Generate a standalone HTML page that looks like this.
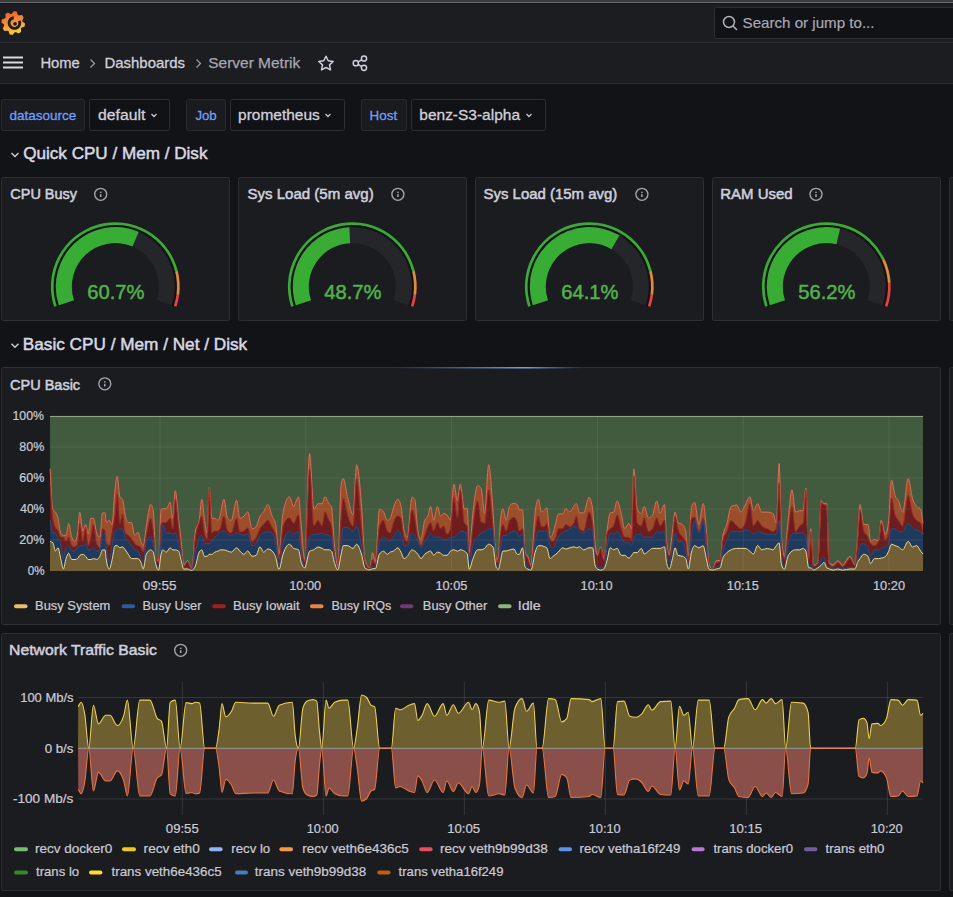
<!DOCTYPE html>
<html><head><meta charset="utf-8"><style>
html,body{margin:0;padding:0;background:#121317;width:953px;height:897px;overflow:hidden}
svg{display:block;font-family:"Liberation Sans", sans-serif}
</style></head><body>
<svg width="953" height="897" viewBox="0 0 953 897">
<rect width="953" height="897" fill="#121317"/>
<rect x="0" y="0" width="953" height="2" fill="#3b3c3f"/>
<rect x="0" y="2" width="953" height="1" fill="#6b6b6d"/>
<rect x="0" y="3" width="953" height="1" fill="#151619"/>
<rect x="0" y="4" width="953" height="38" fill="#1c1d20"/>
<rect x="0" y="42" width="953" height="1" fill="#2c2d31"/>
<rect x="0" y="43" width="953" height="40" fill="#1c1d20"/>
<rect x="0" y="83" width="953" height="1" fill="#2c2d31"/>
<rect x="714.5" y="7.5" width="260" height="31" rx="2" fill="#111216" stroke="#2e2f34"/>
<circle cx="729" cy="22" r="5.5" fill="none" stroke="#b0b0bc" stroke-width="1.5"/>
<line x1="733" y1="26" x2="736.5" y2="29.5" stroke="#b0b0bc" stroke-width="1.6" stroke-linecap="round"/>
<text x="742.60" y="28.0" font-size="15.00" fill="#a8a8b4" font-weight="normal" text-anchor="start"  stroke="#a8a8b4" stroke-width="0.20" id="t1" textLength="131.91" lengthAdjust="spacingAndGlyphs">Search or jump to...</text>
<defs><linearGradient id="lg" x1="0.2" y1="0" x2="0.5" y2="1"><stop offset="0" stop-color="#f05a2a"/><stop offset="0.55" stop-color="#f8962e"/><stop offset="1" stop-color="#fcd22c"/></linearGradient></defs>
<polygon fill="url(#lg)" stroke="url(#lg)" stroke-width="1.2" stroke-linejoin="round" points="14.0,11.8 16.3,12.2 17.3,15.2 18.6,16.0 21.7,15.7 23.0,17.6 21.6,20.4 21.9,21.9 24.4,23.8 24.0,26.1 21.0,27.1 20.2,28.4 20.5,31.5 18.6,32.8 15.8,31.4 14.3,31.7 12.4,34.2 10.1,33.8 9.1,30.8 7.8,30.0 4.7,30.3 3.4,28.4 4.8,25.6 4.5,24.1 2.0,22.2 2.4,19.9 5.4,18.9 6.2,17.6 5.9,14.5 7.8,13.2 10.6,14.6 12.1,14.3"/>
<circle cx="14.4" cy="23.0" r="5.3" fill="none" stroke="#1c1d20" stroke-width="3" stroke-dasharray="26 8" transform="rotate(-25 14.4 23)"/>
<circle cx="15.0" cy="23.8" r="1.9" fill="#1c1d20"/>
<rect x="3" y="56.5" width="20" height="2" fill="#d8d8e0"/>
<rect x="3" y="61.5" width="20" height="2" fill="#d8d8e0"/>
<rect x="3" y="66.5" width="20" height="2" fill="#d8d8e0"/>
<text x="40.40" y="68.0" font-size="15.00" fill="#d0d0dc" font-weight="normal" text-anchor="start"  stroke="#d0d0dc" stroke-width="0.30" id="t2" textLength="39.42" lengthAdjust="spacingAndGlyphs">Home</text>
<polyline points="90.5,59.5 94.5,63.5 90.5,67.5" fill="none" stroke="#9a9aa4" stroke-width="1.3"/>
<text x="104.40" y="68.0" font-size="15.00" fill="#d0d0dc" font-weight="normal" text-anchor="start"  stroke="#d0d0dc" stroke-width="0.30" id="t3" textLength="80.69" lengthAdjust="spacingAndGlyphs">Dashboards</text>
<polyline points="196.5,59.5 200.5,63.5 196.5,67.5" fill="none" stroke="#9a9aa4" stroke-width="1.3"/>
<text x="208.30" y="68.0" font-size="15.20" fill="#a8a8b2" font-weight="normal" text-anchor="start"  stroke="#a8a8b2" stroke-width="0.25" id="t4" textLength="91.90" lengthAdjust="spacingAndGlyphs">Server Metrik</text>
<polygon points="326.0,56.2 328.2,60.8 333.2,61.5 329.5,64.9 330.5,69.9 326.0,67.5 321.5,69.9 322.5,64.9 318.8,61.5 323.8,60.8" fill="none" stroke="#d0d0dc" stroke-width="1.5" stroke-linejoin="round"/>
<g fill="none" stroke="#d0d0dc" stroke-width="1.5"><circle cx="364" cy="58.5" r="2.6"/><circle cx="355.8" cy="63.2" r="2.6"/><circle cx="364" cy="67.8" r="2.6"/><line x1="358.2" y1="61.9" x2="361.7" y2="59.8"/><line x1="358.2" y1="64.5" x2="361.7" y2="66.6"/></g>
<rect x="1.5" y="99.5" width="83.0" height="31" rx="2" fill="#1a1b1f" stroke="#2a2b30"/><rect x="89.5" y="99.5" width="80.0" height="31" rx="2" fill="#111216" stroke="#2e2f34"/><text x="9.40" y="119.5" font-size="13.60" fill="#729ff8" font-weight="normal" text-anchor="start"  stroke="#729ff8" stroke-width="0.30" id="t5" textLength="66.87" lengthAdjust="spacingAndGlyphs">datasource</text><text x="98.10" y="120.2" font-size="15.40" fill="#d0d0dc" font-weight="normal" text-anchor="start"  stroke="#d0d0dc" stroke-width="0.30" id="t6" textLength="47.22" lengthAdjust="spacingAndGlyphs">default</text>
<polyline points="151.5,114 154,116.5 156.5,114" fill="none" stroke="#c8c8d0" stroke-width="1.3"/>
<rect x="186.5" y="99.5" width="39.0" height="31" rx="2" fill="#1a1b1f" stroke="#2a2b30"/><rect x="230.5" y="99.5" width="114.0" height="31" rx="2" fill="#111216" stroke="#2e2f34"/><text x="195.40" y="119.5" font-size="13.60" fill="#729ff8" font-weight="normal" text-anchor="start"  stroke="#729ff8" stroke-width="0.30" id="t7" textLength="21.32" lengthAdjust="spacingAndGlyphs">Job</text><text x="238.10" y="120.2" font-size="15.40" fill="#d0d0dc" font-weight="normal" text-anchor="start"  stroke="#d0d0dc" stroke-width="0.30" id="t8" textLength="81.68" lengthAdjust="spacingAndGlyphs">prometheus</text>
<polyline points="325.5,114 328,116.5 330.5,114" fill="none" stroke="#c8c8d0" stroke-width="1.3"/>
<rect x="361.5" y="99.5" width="45.0" height="31" rx="2" fill="#1a1b1f" stroke="#2a2b30"/><rect x="411.5" y="99.5" width="134.0" height="31" rx="2" fill="#111216" stroke="#2e2f34"/><text x="369.60" y="119.5" font-size="13.60" fill="#729ff8" font-weight="normal" text-anchor="start"  stroke="#729ff8" stroke-width="0.30" id="t9" textLength="27.55" lengthAdjust="spacingAndGlyphs">Host</text><text x="419.30" y="120.2" font-size="15.40" fill="#d0d0dc" font-weight="normal" text-anchor="start"  stroke="#d0d0dc" stroke-width="0.30" id="t10" textLength="100.71" lengthAdjust="spacingAndGlyphs">benz-S3-alpha</text>
<polyline points="526.5,114 529,116.5 531.5,114" fill="none" stroke="#c8c8d0" stroke-width="1.3"/>
<polyline points="11.5,153 15,156.5 18.5,153" transform="translate(0,0.0)" fill="none" stroke="#d0d0dc" stroke-width="1.4"/><text x="23.20" y="158.8" font-size="17.00" fill="#d8d8e0" font-weight="normal" text-anchor="start"  stroke="#d8d8e0" stroke-width="0.50" id="t11" textLength="184.25" lengthAdjust="spacingAndGlyphs">Quick CPU / Mem / Disk</text>
<polyline points="11.5,153 15,156.5 18.5,153" transform="translate(0,190.7)" fill="none" stroke="#d0d0dc" stroke-width="1.4"/><text x="22.80" y="349.5" font-size="17.00" fill="#d8d8e0" font-weight="normal" text-anchor="start"  stroke="#d8d8e0" stroke-width="0.50" id="t12" textLength="224.38" lengthAdjust="spacingAndGlyphs">Basic CPU / Mem / Net / Disk</text>
<rect x="1.5" y="177.5" width="228.0" height="143.0" rx="2" fill="#1b1c20" stroke="#2e2f34" stroke-width="1"/>
<text x="10.30" y="199.2" font-size="14.30" fill="#d0d0dc" font-weight="normal" text-anchor="start"  stroke="#d0d0dc" stroke-width="0.50" id="t13" textLength="66.75" lengthAdjust="spacingAndGlyphs">CPU Busy</text>
<circle cx="100.7" cy="194.3" r="6.0" fill="none" stroke="#a6a6b0" stroke-width="1.35"/><rect x="99.95" y="194.20" width="1.5" height="2.8" fill="#a6a6b0"/><rect x="99.95" y="191.70" width="1.5" height="1.3" fill="#a6a6b0"/>
<path fill="#121316" d="M56.64,306.68 A62.00,62.00 0 1 1 173.96,306.68 L171.12,305.71 A59.00,59.00 0 1 0 59.48,305.71 Z"/><path fill="#24262a" d="M58.81,305.28 A59.50,59.50 0 1 1 171.79,305.28 L156.60,300.26 A43.50,43.50 0 1 0 74.00,300.26 Z"/><path fill="#38ad33" d="M58.81,305.28 A59.50,59.50 0 0 1 138.72,231.90 L132.42,246.61 A43.50,43.50 0 0 0 74.00,300.26 Z"/><path fill="#38ad33" d="M54.16,306.82 A64.40,64.40 0 1 1 177.74,270.81 L175.12,271.47 A61.70,61.70 0 1 0 56.72,305.97 Z"/><path fill="#e68a33" d="M177.74,270.81 A64.40,64.40 0 0 1 179.15,294.97 L176.48,294.62 A61.70,61.70 0 0 0 175.12,271.47 Z"/><path fill="#ee4040" d="M179.15,294.97 A64.40,64.40 0 0 1 176.44,306.82 L173.88,305.97 A61.70,61.70 0 0 0 176.48,294.62 Z"/>
<text x="115.90" y="299.0" font-size="21.00" fill="#52b24c" font-weight="normal" text-anchor="middle"  stroke="#52b24c" stroke-width="0.50" id="t14" textLength="57.15" lengthAdjust="spacingAndGlyphs">60.7%</text>
<rect x="238.5" y="177.5" width="228.0" height="143.0" rx="2" fill="#1b1c20" stroke="#2e2f34" stroke-width="1"/>
<text x="247.50" y="199.2" font-size="14.30" fill="#d0d0dc" font-weight="normal" text-anchor="start"  stroke="#d0d0dc" stroke-width="0.50" id="t15" textLength="126.20" lengthAdjust="spacingAndGlyphs">Sys Load (5m avg)</text>
<circle cx="397.9" cy="194.3" r="6.0" fill="none" stroke="#a6a6b0" stroke-width="1.35"/><rect x="397.15" y="194.20" width="1.5" height="2.8" fill="#a6a6b0"/><rect x="397.15" y="191.70" width="1.5" height="1.3" fill="#a6a6b0"/>
<path fill="#121316" d="M293.64,306.68 A62.00,62.00 0 1 1 410.96,306.68 L408.12,305.71 A59.00,59.00 0 1 0 296.48,305.71 Z"/><path fill="#24262a" d="M295.81,305.28 A59.50,59.50 0 1 1 408.79,305.28 L393.60,300.26 A43.50,43.50 0 1 0 311.00,300.26 Z"/><path fill="#38ad33" d="M295.81,305.28 A59.50,59.50 0 0 1 349.38,227.17 L350.16,243.15 A43.50,43.50 0 0 0 311.00,300.26 Z"/><path fill="#38ad33" d="M291.16,306.82 A64.40,64.40 0 1 1 414.74,270.81 L412.12,271.47 A61.70,61.70 0 1 0 293.72,305.97 Z"/><path fill="#e68a33" d="M414.74,270.81 A64.40,64.40 0 0 1 416.15,294.97 L413.48,294.62 A61.70,61.70 0 0 0 412.12,271.47 Z"/><path fill="#ee4040" d="M416.15,294.97 A64.40,64.40 0 0 1 413.44,306.82 L410.88,305.97 A61.70,61.70 0 0 0 413.48,294.62 Z"/>
<text x="352.90" y="299.0" font-size="21.00" fill="#52b24c" font-weight="normal" text-anchor="middle"  stroke="#52b24c" stroke-width="0.50" id="t16" textLength="57.15" lengthAdjust="spacingAndGlyphs">48.7%</text>
<rect x="475.5" y="177.5" width="228.0" height="143.0" rx="2" fill="#1b1c20" stroke="#2e2f34" stroke-width="1"/>
<text x="483.50" y="199.2" font-size="14.30" fill="#d0d0dc" font-weight="normal" text-anchor="start"  stroke="#d0d0dc" stroke-width="0.50" id="t17" textLength="133.75" lengthAdjust="spacingAndGlyphs">Sys Load (15m avg)</text>
<circle cx="641.9" cy="194.3" r="6.0" fill="none" stroke="#a6a6b0" stroke-width="1.35"/><rect x="641.15" y="194.20" width="1.5" height="2.8" fill="#a6a6b0"/><rect x="641.15" y="191.70" width="1.5" height="1.3" fill="#a6a6b0"/>
<path fill="#121316" d="M530.64,306.68 A62.00,62.00 0 1 1 647.96,306.68 L645.12,305.71 A59.00,59.00 0 1 0 533.48,305.71 Z"/><path fill="#24262a" d="M532.81,305.28 A59.50,59.50 0 1 1 645.79,305.28 L630.60,300.26 A43.50,43.50 0 1 0 548.00,300.26 Z"/><path fill="#38ad33" d="M532.81,305.28 A59.50,59.50 0 0 1 619.53,235.35 L611.40,249.13 A43.50,43.50 0 0 0 548.00,300.26 Z"/><path fill="#38ad33" d="M528.16,306.82 A64.40,64.40 0 1 1 651.74,270.81 L649.12,271.47 A61.70,61.70 0 1 0 530.72,305.97 Z"/><path fill="#e68a33" d="M651.74,270.81 A64.40,64.40 0 0 1 653.15,294.97 L650.48,294.62 A61.70,61.70 0 0 0 649.12,271.47 Z"/><path fill="#ee4040" d="M653.15,294.97 A64.40,64.40 0 0 1 650.44,306.82 L647.88,305.97 A61.70,61.70 0 0 0 650.48,294.62 Z"/>
<text x="589.90" y="299.0" font-size="21.00" fill="#52b24c" font-weight="normal" text-anchor="middle"  stroke="#52b24c" stroke-width="0.50" id="t18" textLength="57.15" lengthAdjust="spacingAndGlyphs">64.1%</text>
<rect x="712.5" y="177.5" width="228.0" height="143.0" rx="2" fill="#1b1c20" stroke="#2e2f34" stroke-width="1"/>
<text x="720.30" y="199.2" font-size="14.30" fill="#d0d0dc" font-weight="normal" text-anchor="start"  stroke="#d0d0dc" stroke-width="0.50" id="t19" textLength="72.32" lengthAdjust="spacingAndGlyphs">RAM Used</text>
<circle cx="816.0" cy="194.3" r="6.0" fill="none" stroke="#a6a6b0" stroke-width="1.35"/><rect x="815.25" y="194.20" width="1.5" height="2.8" fill="#a6a6b0"/><rect x="815.25" y="191.70" width="1.5" height="1.3" fill="#a6a6b0"/>
<path fill="#121316" d="M767.64,306.68 A62.00,62.00 0 1 1 884.96,306.68 L882.12,305.71 A59.00,59.00 0 1 0 770.48,305.71 Z"/><path fill="#24262a" d="M769.81,305.28 A59.50,59.50 0 1 1 882.79,305.28 L867.60,300.26 A43.50,43.50 0 1 0 785.00,300.26 Z"/><path fill="#38ad33" d="M769.81,305.28 A59.50,59.50 0 0 1 840.12,228.73 L836.40,244.29 A43.50,43.50 0 0 0 785.00,300.26 Z"/><path fill="#38ad33" d="M765.16,306.82 A64.40,64.40 0 0 1 884.66,259.36 L882.21,260.50 A61.70,61.70 0 0 0 767.72,305.97 Z"/><path fill="#e68a33" d="M884.66,259.36 A64.40,64.40 0 0 1 890.59,282.83 L887.89,282.98 A61.70,61.70 0 0 0 882.21,260.50 Z"/><path fill="#ee4040" d="M890.59,282.83 A64.40,64.40 0 0 1 887.44,306.82 L884.88,305.97 A61.70,61.70 0 0 0 887.89,282.98 Z"/>
<text x="826.90" y="299.0" font-size="21.00" fill="#52b24c" font-weight="normal" text-anchor="middle"  stroke="#52b24c" stroke-width="0.50" id="t20" textLength="57.15" lengthAdjust="spacingAndGlyphs">56.2%</text>
<rect x="949.5" y="177.5" width="228.0" height="143.0" rx="2" fill="#1b1c20" stroke="#2e2f34" stroke-width="1"/>
<rect x="1.5" y="367.5" width="939.0" height="257.0" rx="2" fill="#1b1c20" stroke="#2e2f34" stroke-width="1"/>
<rect x="949.5" y="367.5" width="228.0" height="257.0" rx="2" fill="#1b1c20" stroke="#2e2f34" stroke-width="1"/>
<defs><linearGradient id="ld" x1="0" x2="1"><stop offset="0" stop-color="#5a8bd8" stop-opacity="0"/><stop offset="0.7" stop-color="#7ab0ff" stop-opacity="0.9"/><stop offset="1" stop-color="#5a8bd8" stop-opacity="0"/></linearGradient></defs>
<rect x="395" y="367" width="187" height="1.5" fill="url(#ld)"/>
<text x="10.00" y="389.8" font-size="14.30" fill="#d0d0dc" font-weight="normal" text-anchor="start"  stroke="#d0d0dc" stroke-width="0.50" id="t21" textLength="70.12" lengthAdjust="spacingAndGlyphs">CPU Basic</text>
<circle cx="104.8" cy="383.8" r="6.0" fill="none" stroke="#a6a6b0" stroke-width="1.35"/><rect x="104.05" y="383.70" width="1.5" height="2.8" fill="#a6a6b0"/><rect x="104.05" y="381.20" width="1.5" height="1.3" fill="#a6a6b0"/>
<path fill="#425a3e" d="M50,416 L923,416 L923.0,523.3 C922.2,518.6 921.5,510.4 920.7,509.3 C919.3,507.4 918.0,508.3 916.6,506.5 C915.2,504.7 913.8,502.8 912.4,498.1 C911.0,493.5 909.6,478.6 908.2,478.6 C906.3,478.6 904.5,512.1 902.6,512.1 C901.2,512.1 899.9,503.8 898.5,500.9 C897.3,498.5 896.2,498.8 895.0,495.4 C893.8,491.9 892.7,480.0 891.5,480.0 C890.6,480.0 889.6,513.0 888.7,520.5 C887.5,529.8 886.4,534.4 885.2,534.4 C883.9,534.4 882.5,520.3 881.2,520.3 C880.3,520.3 879.5,540.8 878.6,540.8 C877.2,540.8 875.7,539.4 874.3,539.4 C873.1,539.4 871.8,541.5 870.6,541.5 C869.7,541.5 868.9,524.5 868.0,524.5 C866.6,524.5 865.1,524.5 863.7,524.5 C862.5,524.5 861.2,504.5 860.0,504.5 C859.3,504.5 858.6,524.5 857.9,533.0 C856.9,545.7 855.8,564.8 854.8,564.8 C853.2,564.8 851.6,556.3 850.0,556.3 C847.5,556.3 845.1,564.8 842.6,564.8 C841.0,564.8 839.4,560.6 837.8,560.6 C836.2,560.6 834.7,564.8 833.1,564.8 C831.7,564.8 830.3,564.0 828.9,562.3 C828.2,561.5 827.5,503.7 826.8,503.7 C825.9,503.7 825.0,503.7 824.1,503.7 C823.2,503.7 822.2,500.9 821.3,500.9 C820.1,500.9 819.0,560.8 817.8,562.3 C816.4,564.2 815.0,565.1 813.6,565.1 C812.7,565.1 811.7,528.8 810.8,528.8 C810.1,528.8 809.4,556.7 808.7,556.7 C807.8,556.7 806.8,488.4 805.9,488.4 C805.0,488.4 804.1,510.7 803.2,510.7 C802.0,510.7 800.9,510.7 799.7,510.7 C798.3,510.7 796.9,512.1 795.5,512.1 C794.3,512.1 793.2,489.8 792.0,489.8 C790.6,489.8 789.2,510.6 787.8,523.3 C786.7,533.5 785.5,556.7 784.4,556.7 C783.5,556.7 782.5,550.2 781.6,537.2 C780.8,525.6 779.9,463.3 779.1,463.3 C778.2,463.3 777.3,523.3 776.4,523.3 C775.2,523.3 774.1,514.1 772.9,513.5 C771.1,512.6 769.2,512.1 767.4,512.1 C765.5,512.1 763.7,512.1 761.8,512.1 C760.4,512.1 759.0,503.7 757.6,503.7 C756.2,503.7 754.8,510.7 753.4,510.7 C752.2,510.7 751.1,496.8 749.9,496.8 C748.3,496.8 746.7,502.4 745.1,505.1 C743.7,507.5 742.3,512.1 740.9,512.1 C739.5,512.1 738.1,505.1 736.7,505.1 C734.8,505.1 733.0,505.6 731.1,506.5 C729.7,507.2 728.4,518.2 727.0,523.3 C725.6,528.5 724.1,527.9 722.7,537.2 C721.8,542.8 721.0,560.6 720.1,560.6 C718.9,560.6 717.6,560.6 716.4,560.6 C715.2,560.6 713.9,569.0 712.7,569.0 C711.5,569.0 710.2,567.6 709.0,564.8 C708.1,562.8 707.2,538.7 706.3,528.8 C705.3,517.5 704.2,503.4 703.2,503.4 C701.8,503.4 700.3,524.5 698.9,524.5 C697.5,524.5 696.1,502.3 694.7,502.3 C693.6,502.3 692.6,504.1 691.5,507.6 C690.4,511.1 689.4,556.3 688.3,556.3 C687.4,556.3 686.6,534.5 685.7,531.0 C684.6,526.7 683.6,525.4 682.5,524.5 C680.9,523.2 679.4,523.8 677.8,522.5 C676.9,521.7 676.0,511.9 675.1,511.9 C674.2,511.9 673.4,524.7 672.5,531.0 C671.4,538.8 670.4,554.3 669.3,554.3 C668.4,554.3 667.5,550.0 666.6,541.5 C665.9,535.0 665.2,504.5 664.5,504.5 C663.1,504.5 661.6,513.5 660.2,513.5 C659.0,513.5 657.9,500.9 656.7,500.9 C655.3,500.9 654.0,513.1 652.6,514.9 C651.2,516.8 649.8,517.7 648.4,517.7 C647.0,517.7 645.6,506.5 644.2,506.5 C643.3,506.5 642.3,513.5 641.4,513.5 C640.0,513.5 638.6,512.1 637.2,509.3 C636.1,507.1 634.9,468.9 633.8,468.9 C633.1,468.9 632.4,528.8 631.7,528.8 C630.8,528.8 629.8,523.3 628.9,523.3 C627.5,523.3 626.1,528.8 624.7,528.8 C623.5,528.8 622.4,517.9 621.2,513.5 C619.8,508.3 618.5,500.9 617.1,500.9 C615.9,500.9 614.8,511.6 613.6,512.1 C612.5,512.6 611.3,512.4 610.2,512.9 C609.1,513.4 608.1,523.2 607.0,531.0 C606.0,538.6 604.9,558.6 603.9,558.6 C602.8,558.6 601.8,546.8 600.7,546.8 C599.6,546.8 598.6,554.3 597.5,554.3 C596.6,554.3 595.8,550.0 594.9,541.5 C594.2,534.4 593.4,514.8 592.7,509.8 C591.5,501.3 590.2,497.1 589.0,497.1 C587.2,497.1 585.5,512.9 583.7,512.9 C582.3,512.9 580.9,512.9 579.5,512.9 C578.4,512.9 577.4,503.4 576.3,503.4 C575.6,503.4 574.9,504.8 574.2,505.6 C572.8,507.3 571.4,511.9 570.0,511.9 C568.6,511.9 567.2,508.7 565.8,508.7 C564.7,508.7 563.7,514.0 562.6,514.0 C561.2,514.0 559.7,514.0 558.3,514.0 C557.5,514.0 556.6,519.4 555.8,522.5 C554.9,525.8 554.0,530.6 553.1,533.0 C552.1,535.8 551.0,537.2 550.0,537.2 C548.9,537.2 547.9,507.6 546.8,507.6 C546.1,507.6 545.4,509.2 544.7,509.8 C543.6,510.7 542.6,511.9 541.5,511.9 C540.4,511.9 539.4,499.2 538.3,499.2 C537.3,499.2 536.2,504.2 535.2,511.9 C533.8,522.7 532.3,564.8 530.9,564.8 C529.8,564.8 528.8,558.5 527.7,556.3 C526.8,554.5 526.0,554.9 525.1,552.1 C524.2,549.3 523.4,509.8 522.5,509.8 C521.4,509.8 520.4,509.8 519.3,509.8 C518.6,509.8 517.9,505.0 517.2,504.5 C516.1,503.8 515.1,503.4 514.0,503.4 C512.6,503.4 511.2,504.1 509.8,505.6 C508.6,506.9 507.3,520.3 506.1,520.3 C505.0,520.3 504.0,508.7 502.9,508.7 C502.0,508.7 501.1,513.3 500.2,522.5 C499.6,528.3 499.1,555.2 498.5,556.7 C497.8,558.6 497.1,559.5 496.4,559.5 C495.2,559.5 494.1,524.1 492.9,509.3 C491.5,491.6 490.1,464.7 488.7,464.7 C487.3,464.7 486.0,513.5 484.6,513.5 C483.4,513.5 482.3,490.2 481.1,488.4 C479.9,486.5 478.8,485.6 477.6,485.6 C476.0,485.6 474.3,500.6 472.7,514.9 C471.5,525.1 470.4,552.6 469.2,552.6 C468.5,552.6 467.9,507.9 467.2,507.9 C466.3,507.9 465.3,509.3 464.4,509.3 C463.0,509.3 461.6,484.2 460.2,484.2 C459.3,484.2 458.3,500.9 457.4,500.9 C456.2,500.9 455.1,484.2 453.9,484.2 C452.7,484.2 451.6,520.5 450.4,520.5 C449.3,520.5 448.1,515.8 447.0,514.9 C445.8,514.0 444.7,513.5 443.5,513.5 C442.5,513.5 441.6,516.1 440.6,516.1 C439.5,516.1 438.5,506.5 437.4,506.5 C436.2,506.5 434.9,520.3 433.7,520.3 C432.7,520.3 431.6,506.5 430.6,506.5 C429.7,506.5 428.8,513.9 427.9,516.1 C426.8,518.8 425.8,517.5 424.7,520.3 C423.5,523.5 422.2,539.4 421.0,539.4 C420.0,539.4 418.9,536.6 417.9,531.0 C416.8,525.2 415.8,500.9 414.7,499.2 C413.8,497.8 412.9,497.1 412.0,497.1 C410.4,497.1 408.9,537.2 407.3,537.2 C406.2,537.2 405.2,535.1 404.1,531.0 C403.0,526.9 402.0,510.0 400.9,505.6 C399.9,501.4 398.8,499.2 397.8,499.2 C396.4,499.2 394.9,503.7 393.5,507.6 C392.4,510.5 391.4,516.9 390.3,518.3 C389.3,519.6 388.2,520.3 387.2,520.3 C386.0,520.3 384.9,513.7 383.7,512.1 C382.3,510.2 380.9,509.3 379.5,509.3 C378.1,509.3 376.8,562.3 375.4,562.3 C374.5,562.3 373.5,552.6 372.6,552.6 C371.7,552.6 370.7,567.9 369.8,567.9 C368.2,567.9 366.5,565.1 364.9,559.5 C363.7,555.5 362.6,518.5 361.4,503.7 C359.8,483.5 358.2,464.7 356.6,464.7 C355.4,464.7 354.3,514.9 353.1,514.9 C351.2,514.9 349.4,504.0 347.5,496.8 C346.1,491.4 344.7,478.6 343.3,478.6 C342.6,478.6 341.9,480.5 341.2,484.2 C340.0,490.4 338.9,566.5 337.7,566.5 C336.6,566.5 335.4,554.4 334.3,542.8 C333.4,533.2 332.4,508.7 331.5,506.5 C330.7,504.7 329.9,504.8 329.1,503.7 C327.7,501.8 326.3,496.8 324.9,496.8 C324.0,496.8 323.0,503.7 322.1,503.7 C320.7,503.7 319.4,503.7 318.0,503.7 C316.6,503.7 315.2,509.3 313.8,509.3 C312.4,509.3 311.0,453.5 309.6,453.5 C308.0,453.5 306.3,559.5 304.7,559.5 C303.5,559.5 302.4,536.4 301.2,524.5 C300.3,515.4 299.4,496.8 298.5,496.8 C296.9,496.8 295.2,506.5 293.6,506.5 C292.2,506.5 290.8,496.8 289.4,496.8 C287.3,496.8 285.2,501.9 283.1,512.1 C281.7,518.8 280.4,554.0 279.0,554.0 C277.8,554.0 276.7,528.2 275.5,523.3 C274.4,518.5 273.2,518.9 272.1,516.1 C270.7,512.8 269.3,504.4 267.9,504.4 C266.5,504.4 265.0,509.9 263.6,511.9 C262.4,513.7 261.1,513.7 259.9,516.1 C258.7,518.6 257.4,525.4 256.2,526.7 C254.8,528.1 253.4,528.8 252.0,528.8 C250.6,528.8 249.1,511.9 247.7,511.9 C246.5,511.9 245.2,515.1 244.0,516.1 C242.6,517.3 241.2,518.3 239.8,518.3 C238.7,518.3 237.7,500.2 236.6,500.2 C234.8,500.2 233.1,520.3 231.3,520.3 C230.1,520.3 228.8,519.6 227.6,518.3 C226.4,517.0 225.1,499.2 223.9,499.2 C222.7,499.2 221.4,511.3 220.2,515.2 C219.5,517.3 218.9,520.3 218.2,520.3 C217.1,520.3 216.1,518.3 215.0,518.3 C214.0,518.3 212.9,518.3 211.9,518.3 C211.0,518.3 210.1,487.5 209.2,487.5 C208.5,487.5 207.8,533.0 207.1,533.0 C206.2,533.0 205.3,524.1 204.4,518.3 C203.5,512.7 202.7,499.2 201.8,499.2 C200.9,499.2 200.1,515.4 199.2,520.3 C197.9,527.4 196.7,523.9 195.4,531.0 C194.2,538.0 192.9,569.0 191.7,569.0 C190.3,569.0 188.9,560.6 187.5,560.6 C186.3,560.6 185.0,564.8 183.8,564.8 C182.9,564.8 182.1,549.2 181.2,541.5 C180.3,533.6 179.4,526.1 178.5,518.3 C177.4,509.1 176.4,490.7 175.3,490.7 C174.4,490.7 173.6,518.3 172.7,518.3 C171.8,518.3 171.0,502.3 170.1,502.3 C168.8,502.3 167.6,508.7 166.3,508.7 C165.1,508.7 163.8,508.7 162.6,508.7 C162.1,508.7 161.6,509.1 161.1,509.8 C160.2,511.0 159.4,560.6 158.5,560.6 C157.6,560.6 156.8,559.9 155.9,558.6 C155.0,557.2 154.1,513.5 153.2,509.8 C152.3,506.2 151.5,504.4 150.6,504.4 C149.2,504.4 147.7,518.4 146.3,526.7 C145.3,532.6 144.2,545.7 143.2,545.7 C142.5,545.7 141.7,543.3 141.0,541.5 C140.0,539.1 138.9,532.2 137.9,532.2 C136.8,532.2 135.8,535.4 134.7,535.4 C133.6,535.4 132.6,522.5 131.5,522.5 C130.4,522.5 129.4,522.5 128.3,522.5 C127.3,522.5 126.2,519.6 125.2,515.2 C124.3,511.4 123.4,500.7 122.5,499.2 C121.6,497.8 120.8,498.5 119.9,497.1 C119.0,495.6 118.1,476.4 117.2,476.4 C116.5,476.4 115.8,483.0 115.1,488.5 C114.0,497.0 113.0,524.5 111.9,524.5 C111.0,524.5 110.2,520.3 109.3,520.3 C108.2,520.3 107.2,522.5 106.1,522.5 C105.8,522.5 105.4,512.9 105.1,512.9 C104.2,512.9 103.4,512.9 102.5,512.9 C101.6,512.9 100.8,537.2 99.9,537.2 C98.8,537.2 97.8,535.8 96.7,533.0 C95.6,530.2 94.6,518.3 93.5,518.3 C92.6,518.3 91.8,518.3 90.9,518.3 C90.0,518.3 89.1,534.1 88.2,534.1 C87.3,534.1 86.5,524.5 85.6,524.5 C84.7,524.5 83.8,531.0 82.9,531.0 C81.8,531.0 80.8,512.1 79.7,512.1 C79.0,512.1 78.3,528.4 77.6,533.0 C76.7,538.7 75.9,541.5 75.0,541.5 C73.9,541.5 72.9,540.1 71.8,537.2 C70.7,534.3 69.7,523.6 68.6,523.6 C67.7,523.6 66.9,535.4 66.0,535.4 C65.1,535.4 64.2,535.4 63.3,535.4 C62.4,535.4 61.6,534.6 60.7,533.0 C59.8,531.4 58.9,521.8 58.0,518.3 C57.1,514.9 56.3,513.5 55.4,512.1 C54.5,510.7 53.7,511.3 52.8,509.8 C51.9,508.2 51.0,482.4 50.1,468.7 Z"/><path fill="#9a4f2a" d="M50.1,468.7 C51.0,482.4 51.9,508.2 52.8,509.8 C53.7,511.3 54.5,510.7 55.4,512.1 C56.3,513.5 57.1,514.9 58.0,518.3 C58.9,521.8 59.8,531.4 60.7,533.0 C61.6,534.6 62.4,535.4 63.3,535.4 C64.2,535.4 65.1,535.4 66.0,535.4 C66.9,535.4 67.7,523.6 68.6,523.6 C69.7,523.6 70.7,534.3 71.8,537.2 C72.9,540.1 73.9,541.5 75.0,541.5 C75.9,541.5 76.7,538.7 77.6,533.0 C78.3,528.4 79.0,512.1 79.7,512.1 C80.8,512.1 81.8,531.0 82.9,531.0 C83.8,531.0 84.7,524.5 85.6,524.5 C86.5,524.5 87.3,534.1 88.2,534.1 C89.1,534.1 90.0,518.3 90.9,518.3 C91.8,518.3 92.6,518.3 93.5,518.3 C94.6,518.3 95.6,530.2 96.7,533.0 C97.8,535.8 98.8,537.2 99.9,537.2 C100.8,537.2 101.6,512.9 102.5,512.9 C103.4,512.9 104.2,512.9 105.1,512.9 C105.4,512.9 105.8,522.5 106.1,522.5 C107.2,522.5 108.2,520.3 109.3,520.3 C110.2,520.3 111.0,524.5 111.9,524.5 C113.0,524.5 114.0,497.0 115.1,488.5 C115.8,483.0 116.5,476.4 117.2,476.4 C118.1,476.4 119.0,495.6 119.9,497.1 C120.8,498.5 121.6,497.8 122.5,499.2 C123.4,500.7 124.3,511.4 125.2,515.2 C126.2,519.6 127.3,522.5 128.3,522.5 C129.4,522.5 130.4,522.5 131.5,522.5 C132.6,522.5 133.6,535.4 134.7,535.4 C135.8,535.4 136.8,532.2 137.9,532.2 C138.9,532.2 140.0,539.1 141.0,541.5 C141.7,543.3 142.5,545.7 143.2,545.7 C144.2,545.7 145.3,532.6 146.3,526.7 C147.7,518.4 149.2,504.4 150.6,504.4 C151.5,504.4 152.3,506.2 153.2,509.8 C154.1,513.5 155.0,557.2 155.9,558.6 C156.8,559.9 157.6,560.6 158.5,560.6 C159.4,560.6 160.2,511.0 161.1,509.8 C161.6,509.1 162.1,508.7 162.6,508.7 C163.8,508.7 165.1,508.7 166.3,508.7 C167.6,508.7 168.8,502.3 170.1,502.3 C171.0,502.3 171.8,518.3 172.7,518.3 C173.6,518.3 174.4,490.7 175.3,490.7 C176.4,490.7 177.4,509.1 178.5,518.3 C179.4,526.1 180.3,533.6 181.2,541.5 C182.1,549.2 182.9,564.8 183.8,564.8 C185.0,564.8 186.3,560.6 187.5,560.6 C188.9,560.6 190.3,569.0 191.7,569.0 C192.9,569.0 194.2,538.0 195.4,531.0 C196.7,523.9 197.9,527.4 199.2,520.3 C200.1,515.4 200.9,499.2 201.8,499.2 C202.7,499.2 203.5,512.7 204.4,518.3 C205.3,524.1 206.2,533.0 207.1,533.0 C207.8,533.0 208.5,487.5 209.2,487.5 C210.1,487.5 211.0,518.3 211.9,518.3 C212.9,518.3 214.0,518.3 215.0,518.3 C216.1,518.3 217.1,520.3 218.2,520.3 C218.9,520.3 219.5,517.3 220.2,515.2 C221.4,511.3 222.7,499.2 223.9,499.2 C225.1,499.2 226.4,517.0 227.6,518.3 C228.8,519.6 230.1,520.3 231.3,520.3 C233.1,520.3 234.8,500.2 236.6,500.2 C237.7,500.2 238.7,518.3 239.8,518.3 C241.2,518.3 242.6,517.3 244.0,516.1 C245.2,515.1 246.5,511.9 247.7,511.9 C249.1,511.9 250.6,528.8 252.0,528.8 C253.4,528.8 254.8,528.1 256.2,526.7 C257.4,525.4 258.7,518.6 259.9,516.1 C261.1,513.7 262.4,513.7 263.6,511.9 C265.0,509.9 266.5,504.4 267.9,504.4 C269.3,504.4 270.7,512.8 272.1,516.1 C273.2,518.9 274.4,518.5 275.5,523.3 C276.7,528.2 277.8,554.0 279.0,554.0 C280.4,554.0 281.7,518.8 283.1,512.1 C285.2,501.9 287.3,496.8 289.4,496.8 C290.8,496.8 292.2,506.5 293.6,506.5 C295.2,506.5 296.9,496.8 298.5,496.8 C299.4,496.8 300.3,515.4 301.2,524.5 C302.4,536.4 303.5,559.5 304.7,559.5 C306.3,559.5 308.0,453.5 309.6,453.5 C311.0,453.5 312.4,509.3 313.8,509.3 C315.2,509.3 316.6,503.7 318.0,503.7 C319.4,503.7 320.7,503.7 322.1,503.7 C323.0,503.7 324.0,496.8 324.9,496.8 C326.3,496.8 327.7,501.8 329.1,503.7 C329.9,504.8 330.7,504.7 331.5,506.5 C332.4,508.7 333.4,533.2 334.3,542.8 C335.4,554.4 336.6,566.5 337.7,566.5 C338.9,566.5 340.0,490.4 341.2,484.2 C341.9,480.5 342.6,478.6 343.3,478.6 C344.7,478.6 346.1,491.4 347.5,496.8 C349.4,504.0 351.2,514.9 353.1,514.9 C354.3,514.9 355.4,464.7 356.6,464.7 C358.2,464.7 359.8,483.5 361.4,503.7 C362.6,518.5 363.7,555.5 364.9,559.5 C366.5,565.1 368.2,567.9 369.8,567.9 C370.7,567.9 371.7,552.6 372.6,552.6 C373.5,552.6 374.5,562.3 375.4,562.3 C376.8,562.3 378.1,509.3 379.5,509.3 C380.9,509.3 382.3,510.2 383.7,512.1 C384.9,513.7 386.0,520.3 387.2,520.3 C388.2,520.3 389.3,519.6 390.3,518.3 C391.4,516.9 392.4,510.5 393.5,507.6 C394.9,503.7 396.4,499.2 397.8,499.2 C398.8,499.2 399.9,501.4 400.9,505.6 C402.0,510.0 403.0,526.9 404.1,531.0 C405.2,535.1 406.2,537.2 407.3,537.2 C408.9,537.2 410.4,497.1 412.0,497.1 C412.9,497.1 413.8,497.8 414.7,499.2 C415.8,500.9 416.8,525.2 417.9,531.0 C418.9,536.6 420.0,539.4 421.0,539.4 C422.2,539.4 423.5,523.5 424.7,520.3 C425.8,517.5 426.8,518.8 427.9,516.1 C428.8,513.9 429.7,506.5 430.6,506.5 C431.6,506.5 432.7,520.3 433.7,520.3 C434.9,520.3 436.2,506.5 437.4,506.5 C438.5,506.5 439.5,516.1 440.6,516.1 C441.6,516.1 442.5,513.5 443.5,513.5 C444.7,513.5 445.8,514.0 447.0,514.9 C448.1,515.8 449.3,520.5 450.4,520.5 C451.6,520.5 452.7,484.2 453.9,484.2 C455.1,484.2 456.2,500.9 457.4,500.9 C458.3,500.9 459.3,484.2 460.2,484.2 C461.6,484.2 463.0,509.3 464.4,509.3 C465.3,509.3 466.3,507.9 467.2,507.9 C467.9,507.9 468.5,552.6 469.2,552.6 C470.4,552.6 471.5,525.1 472.7,514.9 C474.3,500.6 476.0,485.6 477.6,485.6 C478.8,485.6 479.9,486.5 481.1,488.4 C482.3,490.2 483.4,513.5 484.6,513.5 C486.0,513.5 487.3,464.7 488.7,464.7 C490.1,464.7 491.5,491.6 492.9,509.3 C494.1,524.1 495.2,559.5 496.4,559.5 C497.1,559.5 497.8,558.6 498.5,556.7 C499.1,555.2 499.6,528.3 500.2,522.5 C501.1,513.3 502.0,508.7 502.9,508.7 C504.0,508.7 505.0,520.3 506.1,520.3 C507.3,520.3 508.6,506.9 509.8,505.6 C511.2,504.1 512.6,503.4 514.0,503.4 C515.1,503.4 516.1,503.8 517.2,504.5 C517.9,505.0 518.6,509.8 519.3,509.8 C520.4,509.8 521.4,509.8 522.5,509.8 C523.4,509.8 524.2,549.3 525.1,552.1 C526.0,554.9 526.8,554.5 527.7,556.3 C528.8,558.5 529.8,564.8 530.9,564.8 C532.3,564.8 533.8,522.7 535.2,511.9 C536.2,504.2 537.3,499.2 538.3,499.2 C539.4,499.2 540.4,511.9 541.5,511.9 C542.6,511.9 543.6,510.7 544.7,509.8 C545.4,509.2 546.1,507.6 546.8,507.6 C547.9,507.6 548.9,537.2 550.0,537.2 C551.0,537.2 552.1,535.8 553.1,533.0 C554.0,530.6 554.9,525.8 555.8,522.5 C556.6,519.4 557.5,514.0 558.3,514.0 C559.7,514.0 561.2,514.0 562.6,514.0 C563.7,514.0 564.7,508.7 565.8,508.7 C567.2,508.7 568.6,511.9 570.0,511.9 C571.4,511.9 572.8,507.3 574.2,505.6 C574.9,504.8 575.6,503.4 576.3,503.4 C577.4,503.4 578.4,512.9 579.5,512.9 C580.9,512.9 582.3,512.9 583.7,512.9 C585.5,512.9 587.2,497.1 589.0,497.1 C590.2,497.1 591.5,501.3 592.7,509.8 C593.4,514.8 594.2,534.4 594.9,541.5 C595.8,550.0 596.6,554.3 597.5,554.3 C598.6,554.3 599.6,546.8 600.7,546.8 C601.8,546.8 602.8,558.6 603.9,558.6 C604.9,558.6 606.0,538.6 607.0,531.0 C608.1,523.2 609.1,513.4 610.2,512.9 C611.3,512.4 612.5,512.6 613.6,512.1 C614.8,511.6 615.9,500.9 617.1,500.9 C618.5,500.9 619.8,508.3 621.2,513.5 C622.4,517.9 623.5,528.8 624.7,528.8 C626.1,528.8 627.5,523.3 628.9,523.3 C629.8,523.3 630.8,528.8 631.7,528.8 C632.4,528.8 633.1,468.9 633.8,468.9 C634.9,468.9 636.1,507.1 637.2,509.3 C638.6,512.1 640.0,513.5 641.4,513.5 C642.3,513.5 643.3,506.5 644.2,506.5 C645.6,506.5 647.0,517.7 648.4,517.7 C649.8,517.7 651.2,516.8 652.6,514.9 C654.0,513.1 655.3,500.9 656.7,500.9 C657.9,500.9 659.0,513.5 660.2,513.5 C661.6,513.5 663.1,504.5 664.5,504.5 C665.2,504.5 665.9,535.0 666.6,541.5 C667.5,550.0 668.4,554.3 669.3,554.3 C670.4,554.3 671.4,538.8 672.5,531.0 C673.4,524.7 674.2,511.9 675.1,511.9 C676.0,511.9 676.9,521.7 677.8,522.5 C679.4,523.8 680.9,523.2 682.5,524.5 C683.6,525.4 684.6,526.7 685.7,531.0 C686.6,534.5 687.4,556.3 688.3,556.3 C689.4,556.3 690.4,511.1 691.5,507.6 C692.6,504.1 693.6,502.3 694.7,502.3 C696.1,502.3 697.5,524.5 698.9,524.5 C700.3,524.5 701.8,503.4 703.2,503.4 C704.2,503.4 705.3,517.5 706.3,528.8 C707.2,538.7 708.1,562.8 709.0,564.8 C710.2,567.6 711.5,569.0 712.7,569.0 C713.9,569.0 715.2,560.6 716.4,560.6 C717.6,560.6 718.9,560.6 720.1,560.6 C721.0,560.6 721.8,542.8 722.7,537.2 C724.1,527.9 725.6,528.5 727.0,523.3 C728.4,518.2 729.7,507.2 731.1,506.5 C733.0,505.6 734.8,505.1 736.7,505.1 C738.1,505.1 739.5,512.1 740.9,512.1 C742.3,512.1 743.7,507.5 745.1,505.1 C746.7,502.4 748.3,496.8 749.9,496.8 C751.1,496.8 752.2,510.7 753.4,510.7 C754.8,510.7 756.2,503.7 757.6,503.7 C759.0,503.7 760.4,512.1 761.8,512.1 C763.7,512.1 765.5,512.1 767.4,512.1 C769.2,512.1 771.1,512.6 772.9,513.5 C774.1,514.1 775.2,523.3 776.4,523.3 C777.3,523.3 778.2,463.3 779.1,463.3 C779.9,463.3 780.8,525.6 781.6,537.2 C782.5,550.2 783.5,556.7 784.4,556.7 C785.5,556.7 786.7,533.5 787.8,523.3 C789.2,510.6 790.6,489.8 792.0,489.8 C793.2,489.8 794.3,512.1 795.5,512.1 C796.9,512.1 798.3,510.7 799.7,510.7 C800.9,510.7 802.0,510.7 803.2,510.7 C804.1,510.7 805.0,488.4 805.9,488.4 C806.8,488.4 807.8,556.7 808.7,556.7 C809.4,556.7 810.1,528.8 810.8,528.8 C811.7,528.8 812.7,565.1 813.6,565.1 C815.0,565.1 816.4,564.2 817.8,562.3 C819.0,560.8 820.1,500.9 821.3,500.9 C822.2,500.9 823.2,503.7 824.1,503.7 C825.0,503.7 825.9,503.7 826.8,503.7 C827.5,503.7 828.2,561.5 828.9,562.3 C830.3,564.0 831.7,564.8 833.1,564.8 C834.7,564.8 836.2,560.6 837.8,560.6 C839.4,560.6 841.0,564.8 842.6,564.8 C845.1,564.8 847.5,556.3 850.0,556.3 C851.6,556.3 853.2,564.8 854.8,564.8 C855.8,564.8 856.9,545.7 857.9,533.0 C858.6,524.5 859.3,504.5 860.0,504.5 C861.2,504.5 862.5,524.5 863.7,524.5 C865.1,524.5 866.6,524.5 868.0,524.5 C868.9,524.5 869.7,541.5 870.6,541.5 C871.8,541.5 873.1,539.4 874.3,539.4 C875.7,539.4 877.2,540.8 878.6,540.8 C879.5,540.8 880.3,520.3 881.2,520.3 C882.5,520.3 883.9,534.4 885.2,534.4 C886.4,534.4 887.5,529.8 888.7,520.5 C889.6,513.0 890.6,480.0 891.5,480.0 C892.7,480.0 893.8,491.9 895.0,495.4 C896.2,498.8 897.3,498.5 898.5,500.9 C899.9,503.8 901.2,512.1 902.6,512.1 C904.5,512.1 906.3,478.6 908.2,478.6 C909.6,478.6 911.0,493.5 912.4,498.1 C913.8,502.8 915.2,504.7 916.6,506.5 C918.0,508.3 919.3,507.4 920.7,509.3 C921.5,510.4 922.2,518.6 923.0,523.3 L923.0,534.4 C922.2,530.7 921.5,524.3 920.7,523.3 C919.3,521.4 918.0,522.1 916.6,520.5 C915.2,518.8 913.8,517.7 912.4,513.5 C911.0,509.3 909.6,495.4 908.2,495.4 C906.3,495.4 904.5,526.0 902.6,526.0 C901.2,526.0 899.9,522.5 898.5,520.5 C897.3,518.7 896.2,518.6 895.0,514.9 C893.8,511.2 892.7,498.1 891.5,498.1 C890.6,498.1 889.6,527.2 888.7,531.6 C887.5,537.2 886.4,540.0 885.2,540.0 C883.9,540.0 882.5,523.3 881.2,523.3 C880.3,523.3 879.5,539.9 878.6,541.5 C877.2,544.3 875.7,545.7 874.3,545.7 C873.1,545.7 871.8,545.1 870.6,543.7 C869.7,542.8 868.9,539.0 868.0,537.2 C866.6,534.2 865.1,535.1 863.7,531.0 C862.5,527.5 861.2,509.8 860.0,509.8 C859.3,509.8 858.6,529.1 857.9,537.2 C856.9,549.1 855.8,565.9 854.8,565.9 C853.2,565.9 851.6,558.6 850.0,558.6 C847.5,558.6 845.1,567.1 842.6,567.1 C841.0,567.1 839.4,562.6 837.8,562.6 C836.2,562.6 834.7,567.0 833.1,567.0 C831.7,567.0 830.3,565.9 828.9,563.7 C828.2,562.6 827.5,505.1 826.8,505.1 C825.9,505.1 825.0,505.1 824.1,505.1 C823.2,505.1 822.2,502.3 821.3,502.3 C820.1,502.3 819.0,562.6 817.8,564.0 C816.4,565.7 815.0,566.5 813.6,566.5 C812.7,566.5 811.7,531.6 810.8,531.6 C810.1,531.6 809.4,559.5 808.7,559.5 C807.8,559.5 806.8,489.8 805.9,489.8 C805.0,489.8 804.1,521.8 803.2,523.3 C802.0,525.1 800.9,524.8 799.7,526.0 C798.3,527.5 796.9,531.6 795.5,531.6 C794.3,531.6 793.2,506.5 792.0,506.5 C790.6,506.5 789.2,524.5 787.8,534.4 C786.7,542.4 785.5,559.5 784.4,559.5 C783.5,559.5 782.5,554.9 781.6,545.6 C780.8,537.3 779.9,482.8 779.1,482.8 C778.2,482.8 777.3,527.4 776.4,528.8 C775.2,530.7 774.1,531.6 772.9,531.6 C771.1,531.6 769.2,529.8 767.4,528.8 C765.5,527.9 763.7,527.9 761.8,526.0 C760.4,524.7 759.0,520.5 757.6,520.5 C756.2,520.5 754.8,526.0 753.4,526.0 C752.2,526.0 751.1,503.7 749.9,503.7 C748.3,503.7 746.7,519.1 745.1,523.3 C743.7,526.9 742.3,528.8 740.9,528.8 C739.5,528.8 738.1,527.2 736.7,526.0 C734.8,524.5 733.0,520.5 731.1,520.5 C729.7,520.5 728.4,528.2 727.0,531.6 C725.6,535.2 724.1,534.9 722.7,541.5 C721.8,545.5 721.0,561.3 720.1,561.7 C718.9,562.3 717.6,562.0 716.4,562.6 C715.2,563.2 713.9,569.1 712.7,569.1 C711.5,569.1 710.2,568.4 709.0,567.0 C708.1,565.9 707.2,545.1 706.3,537.2 C705.3,528.2 704.2,518.3 703.2,518.3 C701.8,518.3 700.3,531.0 698.9,531.0 C697.5,531.0 696.1,517.2 694.7,517.2 C693.6,517.2 692.6,517.6 691.5,518.3 C690.4,519.0 689.4,561.7 688.3,561.7 C687.4,561.7 686.6,543.9 685.7,541.5 C684.6,538.7 683.6,538.8 682.5,537.2 C680.9,534.8 679.4,534.4 677.8,528.8 C676.9,525.6 676.0,516.1 675.1,516.1 C674.2,516.1 673.4,535.1 672.5,541.5 C671.4,549.5 670.4,556.3 669.3,556.3 C668.4,556.3 667.5,553.4 666.6,547.8 C665.9,543.3 665.2,520.3 664.5,520.3 C663.1,520.3 661.6,526.0 660.2,526.0 C659.0,526.0 657.9,517.7 656.7,517.7 C655.3,517.7 654.0,527.0 652.6,528.8 C651.2,530.7 649.8,531.6 648.4,531.6 C647.0,531.6 645.6,517.7 644.2,517.7 C643.3,517.7 642.3,526.0 641.4,526.0 C640.0,526.0 638.6,525.1 637.2,523.3 C636.1,521.8 634.9,475.8 633.8,475.8 C633.1,475.8 632.4,540.0 631.7,540.0 C630.8,540.0 629.8,537.2 628.9,537.2 C627.5,537.2 626.1,537.2 624.7,537.2 C623.5,537.2 622.4,532.2 621.2,528.8 C619.8,524.9 618.5,514.9 617.1,514.9 C615.9,514.9 614.8,524.1 613.6,526.0 C612.5,527.9 611.3,527.6 610.2,528.8 C609.1,530.0 608.1,530.2 607.0,533.0 C606.0,535.7 604.9,560.6 603.9,560.6 C602.8,560.6 601.8,547.8 600.7,547.8 C599.6,547.8 598.6,556.3 597.5,556.3 C596.6,556.3 595.8,554.9 594.9,552.1 C594.2,549.7 593.4,529.5 592.7,524.5 C591.5,516.1 590.2,511.9 589.0,511.9 C587.2,511.9 585.5,531.0 583.7,531.0 C582.3,531.0 580.9,530.3 579.5,528.8 C578.4,527.7 577.4,516.1 576.3,516.1 C575.6,516.1 574.9,521.1 574.2,522.5 C572.8,525.3 571.4,526.7 570.0,526.7 C568.6,526.7 567.2,524.5 565.8,524.5 C564.7,524.5 563.7,528.8 562.6,528.8 C561.2,528.8 559.7,528.8 558.3,528.8 C557.5,528.8 556.6,535.1 555.8,537.2 C554.9,539.5 554.0,541.5 553.1,541.5 C552.1,541.5 551.0,540.8 550.0,539.4 C548.9,537.9 547.9,523.6 546.8,523.6 C546.1,523.6 545.4,526.7 544.7,526.7 C543.6,526.7 542.6,526.7 541.5,526.7 C540.4,526.7 539.4,516.1 538.3,516.1 C537.3,516.1 536.2,524.5 535.2,531.0 C533.8,540.0 532.3,567.0 530.9,567.0 C529.8,567.0 528.8,560.8 527.7,558.6 C526.8,556.8 526.0,557.2 525.1,554.3 C524.2,551.4 523.4,528.8 522.5,528.8 C521.4,528.8 520.4,531.0 519.3,531.0 C518.6,531.0 517.9,524.7 517.2,522.5 C516.1,519.2 515.1,517.2 514.0,517.2 C512.6,517.2 511.2,518.2 509.8,520.3 C508.6,522.1 507.3,531.0 506.1,531.0 C505.0,531.0 504.0,524.5 502.9,524.5 C502.0,524.5 501.1,528.7 500.2,537.2 C499.6,542.5 499.1,562.5 498.5,562.5 C497.8,562.5 497.1,562.4 496.4,562.3 C495.2,562.1 494.1,537.2 492.9,526.0 C491.5,512.6 490.1,489.8 488.7,489.8 C487.3,489.8 486.0,523.3 484.6,523.3 C483.4,523.3 482.3,522.8 481.1,521.9 C479.9,520.9 478.8,500.9 477.6,500.9 C476.0,500.9 474.3,517.4 472.7,528.8 C471.5,537.0 470.4,556.7 469.2,556.7 C468.5,556.7 467.9,527.4 467.2,526.0 C466.3,524.2 465.3,525.1 464.4,523.3 C463.0,520.5 461.6,489.8 460.2,489.8 C459.3,489.8 458.3,517.7 457.4,517.7 C456.2,517.7 455.1,496.8 453.9,496.8 C452.7,496.8 451.6,525.0 450.4,528.8 C449.3,532.6 448.1,534.4 447.0,534.4 C445.8,534.4 444.7,526.0 443.5,526.0 C442.5,526.0 441.6,528.8 440.6,528.8 C439.5,528.8 438.5,522.5 437.4,522.5 C436.2,522.5 434.9,531.0 433.7,531.0 C432.7,531.0 431.6,522.5 430.6,522.5 C429.7,522.5 428.8,524.8 427.9,526.7 C426.8,528.9 425.8,532.4 424.7,535.4 C423.5,538.7 422.2,545.7 421.0,545.7 C420.0,545.7 418.9,541.7 417.9,537.2 C416.8,532.6 415.8,523.0 414.7,518.3 C413.8,514.3 412.9,509.8 412.0,509.8 C410.4,509.8 408.9,541.5 407.3,541.5 C406.2,541.5 405.2,540.1 404.1,537.2 C403.0,534.3 402.0,519.8 400.9,518.3 C399.9,516.9 398.8,516.1 397.8,516.1 C396.4,516.1 394.9,518.9 393.5,522.5 C392.4,525.2 391.4,533.0 390.3,533.0 C389.3,533.0 388.2,532.4 387.2,531.0 C386.0,529.5 384.9,520.5 383.7,520.5 C382.3,520.5 380.9,522.3 379.5,526.0 C378.1,529.7 376.8,564.8 375.4,564.8 C374.5,564.8 373.5,559.5 372.6,559.5 C371.7,559.5 370.7,568.7 369.8,568.7 C368.2,568.7 366.5,566.6 364.9,562.3 C363.7,559.3 362.6,537.9 361.4,526.0 C359.8,509.8 358.2,478.6 356.6,478.6 C355.4,478.6 354.3,526.0 353.1,526.0 C351.2,526.0 349.4,520.7 347.5,514.9 C346.1,510.5 344.7,498.1 343.3,498.1 C342.6,498.1 341.9,509.8 341.2,517.7 C340.0,530.7 338.9,567.9 337.7,567.9 C336.6,567.9 335.4,562.2 334.3,554.0 C333.4,547.1 332.4,530.4 331.5,526.0 C330.7,522.3 329.9,522.2 329.1,520.5 C327.7,517.4 326.3,512.1 324.9,512.1 C324.0,512.1 323.0,526.0 322.1,526.0 C320.7,526.0 319.4,520.5 318.0,520.5 C316.6,520.5 315.2,526.0 313.8,526.0 C312.4,526.0 311.0,468.9 309.6,468.9 C308.0,468.9 306.3,562.3 304.7,562.3 C303.5,562.3 302.4,555.5 301.2,545.6 C300.3,537.9 299.4,514.9 298.5,514.9 C296.9,514.9 295.2,523.3 293.6,523.3 C292.2,523.3 290.8,517.7 289.4,517.7 C287.3,517.7 285.2,520.5 283.1,526.0 C281.7,529.7 280.4,559.5 279.0,559.5 C277.8,559.5 276.7,539.0 275.5,534.4 C274.4,530.0 273.2,529.9 272.1,527.8 C270.7,525.1 269.3,520.3 267.9,520.3 C266.5,520.3 265.0,523.0 263.6,524.5 C262.4,525.8 261.1,526.7 259.9,528.8 C258.7,531.0 257.4,535.1 256.2,537.2 C254.8,539.6 253.4,541.5 252.0,541.5 C250.6,541.5 249.1,527.8 247.7,527.8 C246.5,527.8 245.2,530.5 244.0,531.0 C242.6,531.6 241.2,531.9 239.8,531.9 C238.7,531.9 237.7,518.3 236.6,518.3 C234.8,518.3 233.1,533.0 231.3,533.0 C230.1,533.0 228.8,532.4 227.6,531.0 C226.4,529.7 225.1,516.1 223.9,516.1 C222.7,516.1 221.4,526.5 220.2,528.8 C219.5,530.1 218.9,531.0 218.2,531.0 C217.1,531.0 216.1,531.0 215.0,531.0 C214.0,531.0 212.9,533.0 211.9,533.0 C211.0,533.0 210.1,488.5 209.2,488.5 C208.5,488.5 207.8,539.4 207.1,539.4 C206.2,539.4 205.3,537.0 204.4,533.0 C203.5,529.2 202.7,516.1 201.8,516.1 C200.9,516.1 200.1,519.9 199.2,522.5 C197.9,526.3 196.7,529.2 195.4,537.2 C194.2,545.0 192.9,569.5 191.7,569.5 C190.3,569.5 188.9,561.7 187.5,561.7 C186.3,561.7 185.0,567.0 183.8,567.0 C182.9,567.0 182.1,556.5 181.2,549.9 C180.3,543.1 179.4,534.4 178.5,526.7 C177.4,517.5 176.4,499.2 175.3,499.2 C174.4,499.2 173.6,528.8 172.7,528.8 C171.8,528.8 171.0,518.3 170.1,518.3 C168.8,518.3 167.6,522.5 166.3,522.5 C165.1,522.5 163.8,522.5 162.6,522.5 C162.1,522.5 161.6,523.2 161.1,524.5 C160.2,526.8 159.4,562.6 158.5,562.6 C157.6,562.6 156.8,561.3 155.9,558.6 C155.0,555.8 154.1,537.8 153.2,531.0 C152.3,524.5 151.5,518.3 150.6,518.3 C149.2,518.3 147.7,528.5 146.3,535.4 C145.3,540.3 144.2,552.1 143.2,552.1 C142.5,552.1 141.7,548.7 141.0,547.8 C140.0,546.4 138.9,546.4 137.9,545.7 C136.8,545.1 135.8,544.9 134.7,543.7 C133.6,542.5 132.6,539.8 131.5,538.5 C130.4,537.1 129.4,536.3 128.3,535.4 C127.3,534.5 126.2,534.6 125.2,533.0 C124.3,531.7 123.4,514.0 122.5,514.0 C121.6,514.0 120.8,523.6 119.9,523.6 C119.0,523.6 118.1,493.8 117.2,493.8 C116.5,493.8 115.8,508.3 115.1,514.0 C114.0,522.7 113.0,527.3 111.9,533.0 C111.0,537.7 110.2,545.7 109.3,545.7 C108.2,545.7 107.2,544.3 106.1,541.5 C105.8,540.7 105.4,531.6 105.1,531.0 C104.2,529.6 103.4,528.8 102.5,528.8 C101.6,528.8 100.8,547.8 99.9,547.8 C98.8,547.8 97.8,546.4 96.7,543.7 C95.6,541.0 94.6,524.5 93.5,524.5 C92.6,524.5 91.8,533.7 90.9,537.2 C90.0,540.8 89.1,545.7 88.2,545.7 C87.3,545.7 86.5,527.6 85.6,527.6 C84.7,527.6 83.8,541.5 82.9,541.5 C81.8,541.5 80.8,523.6 79.7,523.6 C79.0,523.6 78.3,542.1 77.6,543.7 C76.7,545.8 75.9,546.8 75.0,546.8 C73.9,546.8 72.9,546.5 71.8,545.7 C70.7,545.0 69.7,537.2 68.6,537.2 C67.7,537.2 66.9,541.5 66.0,541.5 C65.1,541.5 64.2,537.2 63.3,537.2 C62.4,537.2 61.6,537.2 60.7,537.2 C59.8,537.2 58.9,532.3 58.0,530.7 C57.1,529.1 56.3,529.7 55.4,527.6 C54.5,525.5 53.7,524.5 52.8,518.3 C51.9,511.9 51.0,495.6 50.1,484.2 Z"/><path fill="#6e1d1f" d="M50.1,484.2 C51.0,495.6 51.9,511.9 52.8,518.3 C53.7,524.5 54.5,525.5 55.4,527.6 C56.3,529.7 57.1,529.1 58.0,530.7 C58.9,532.3 59.8,537.2 60.7,537.2 C61.6,537.2 62.4,537.2 63.3,537.2 C64.2,537.2 65.1,541.5 66.0,541.5 C66.9,541.5 67.7,537.2 68.6,537.2 C69.7,537.2 70.7,545.0 71.8,545.7 C72.9,546.5 73.9,546.8 75.0,546.8 C75.9,546.8 76.7,545.8 77.6,543.7 C78.3,542.1 79.0,523.6 79.7,523.6 C80.8,523.6 81.8,541.5 82.9,541.5 C83.8,541.5 84.7,527.6 85.6,527.6 C86.5,527.6 87.3,545.7 88.2,545.7 C89.1,545.7 90.0,540.8 90.9,537.2 C91.8,533.7 92.6,524.5 93.5,524.5 C94.6,524.5 95.6,541.0 96.7,543.7 C97.8,546.4 98.8,547.8 99.9,547.8 C100.8,547.8 101.6,528.8 102.5,528.8 C103.4,528.8 104.2,529.6 105.1,531.0 C105.4,531.6 105.8,540.7 106.1,541.5 C107.2,544.3 108.2,545.7 109.3,545.7 C110.2,545.7 111.0,537.7 111.9,533.0 C113.0,527.3 114.0,522.7 115.1,514.0 C115.8,508.3 116.5,493.8 117.2,493.8 C118.1,493.8 119.0,523.6 119.9,523.6 C120.8,523.6 121.6,514.0 122.5,514.0 C123.4,514.0 124.3,531.7 125.2,533.0 C126.2,534.6 127.3,534.5 128.3,535.4 C129.4,536.3 130.4,537.1 131.5,538.5 C132.6,539.8 133.6,542.5 134.7,543.7 C135.8,544.9 136.8,545.1 137.9,545.7 C138.9,546.4 140.0,546.4 141.0,547.8 C141.7,548.7 142.5,552.1 143.2,552.1 C144.2,552.1 145.3,540.3 146.3,535.4 C147.7,528.5 149.2,518.3 150.6,518.3 C151.5,518.3 152.3,524.5 153.2,531.0 C154.1,537.8 155.0,555.8 155.9,558.6 C156.8,561.3 157.6,562.6 158.5,562.6 C159.4,562.6 160.2,526.8 161.1,524.5 C161.6,523.2 162.1,522.5 162.6,522.5 C163.8,522.5 165.1,522.5 166.3,522.5 C167.6,522.5 168.8,518.3 170.1,518.3 C171.0,518.3 171.8,528.8 172.7,528.8 C173.6,528.8 174.4,499.2 175.3,499.2 C176.4,499.2 177.4,517.5 178.5,526.7 C179.4,534.4 180.3,543.1 181.2,549.9 C182.1,556.5 182.9,567.0 183.8,567.0 C185.0,567.0 186.3,561.7 187.5,561.7 C188.9,561.7 190.3,569.5 191.7,569.5 C192.9,569.5 194.2,545.0 195.4,537.2 C196.7,529.2 197.9,526.3 199.2,522.5 C200.1,519.9 200.9,516.1 201.8,516.1 C202.7,516.1 203.5,529.2 204.4,533.0 C205.3,537.0 206.2,539.4 207.1,539.4 C207.8,539.4 208.5,488.5 209.2,488.5 C210.1,488.5 211.0,533.0 211.9,533.0 C212.9,533.0 214.0,531.0 215.0,531.0 C216.1,531.0 217.1,531.0 218.2,531.0 C218.9,531.0 219.5,530.1 220.2,528.8 C221.4,526.5 222.7,516.1 223.9,516.1 C225.1,516.1 226.4,529.7 227.6,531.0 C228.8,532.4 230.1,533.0 231.3,533.0 C233.1,533.0 234.8,518.3 236.6,518.3 C237.7,518.3 238.7,531.9 239.8,531.9 C241.2,531.9 242.6,531.6 244.0,531.0 C245.2,530.5 246.5,527.8 247.7,527.8 C249.1,527.8 250.6,541.5 252.0,541.5 C253.4,541.5 254.8,539.6 256.2,537.2 C257.4,535.1 258.7,531.0 259.9,528.8 C261.1,526.7 262.4,525.8 263.6,524.5 C265.0,523.0 266.5,520.3 267.9,520.3 C269.3,520.3 270.7,525.1 272.1,527.8 C273.2,529.9 274.4,530.0 275.5,534.4 C276.7,539.0 277.8,559.5 279.0,559.5 C280.4,559.5 281.7,529.7 283.1,526.0 C285.2,520.5 287.3,517.7 289.4,517.7 C290.8,517.7 292.2,523.3 293.6,523.3 C295.2,523.3 296.9,514.9 298.5,514.9 C299.4,514.9 300.3,537.9 301.2,545.6 C302.4,555.5 303.5,562.3 304.7,562.3 C306.3,562.3 308.0,468.9 309.6,468.9 C311.0,468.9 312.4,526.0 313.8,526.0 C315.2,526.0 316.6,520.5 318.0,520.5 C319.4,520.5 320.7,526.0 322.1,526.0 C323.0,526.0 324.0,512.1 324.9,512.1 C326.3,512.1 327.7,517.4 329.1,520.5 C329.9,522.2 330.7,522.3 331.5,526.0 C332.4,530.4 333.4,547.1 334.3,554.0 C335.4,562.2 336.6,567.9 337.7,567.9 C338.9,567.9 340.0,530.7 341.2,517.7 C341.9,509.8 342.6,498.1 343.3,498.1 C344.7,498.1 346.1,510.5 347.5,514.9 C349.4,520.7 351.2,526.0 353.1,526.0 C354.3,526.0 355.4,478.6 356.6,478.6 C358.2,478.6 359.8,509.8 361.4,526.0 C362.6,537.9 363.7,559.3 364.9,562.3 C366.5,566.6 368.2,568.7 369.8,568.7 C370.7,568.7 371.7,559.5 372.6,559.5 C373.5,559.5 374.5,564.8 375.4,564.8 C376.8,564.8 378.1,529.7 379.5,526.0 C380.9,522.3 382.3,520.5 383.7,520.5 C384.9,520.5 386.0,529.5 387.2,531.0 C388.2,532.4 389.3,533.0 390.3,533.0 C391.4,533.0 392.4,525.2 393.5,522.5 C394.9,518.9 396.4,516.1 397.8,516.1 C398.8,516.1 399.9,516.9 400.9,518.3 C402.0,519.8 403.0,534.3 404.1,537.2 C405.2,540.1 406.2,541.5 407.3,541.5 C408.9,541.5 410.4,509.8 412.0,509.8 C412.9,509.8 413.8,514.3 414.7,518.3 C415.8,523.0 416.8,532.6 417.9,537.2 C418.9,541.7 420.0,545.7 421.0,545.7 C422.2,545.7 423.5,538.7 424.7,535.4 C425.8,532.4 426.8,528.9 427.9,526.7 C428.8,524.8 429.7,522.5 430.6,522.5 C431.6,522.5 432.7,531.0 433.7,531.0 C434.9,531.0 436.2,522.5 437.4,522.5 C438.5,522.5 439.5,528.8 440.6,528.8 C441.6,528.8 442.5,526.0 443.5,526.0 C444.7,526.0 445.8,534.4 447.0,534.4 C448.1,534.4 449.3,532.6 450.4,528.8 C451.6,525.0 452.7,496.8 453.9,496.8 C455.1,496.8 456.2,517.7 457.4,517.7 C458.3,517.7 459.3,489.8 460.2,489.8 C461.6,489.8 463.0,520.5 464.4,523.3 C465.3,525.1 466.3,524.2 467.2,526.0 C467.9,527.4 468.5,556.7 469.2,556.7 C470.4,556.7 471.5,537.0 472.7,528.8 C474.3,517.4 476.0,500.9 477.6,500.9 C478.8,500.9 479.9,520.9 481.1,521.9 C482.3,522.8 483.4,523.3 484.6,523.3 C486.0,523.3 487.3,489.8 488.7,489.8 C490.1,489.8 491.5,512.6 492.9,526.0 C494.1,537.2 495.2,562.1 496.4,562.3 C497.1,562.4 497.8,562.5 498.5,562.5 C499.1,562.5 499.6,542.5 500.2,537.2 C501.1,528.7 502.0,524.5 502.9,524.5 C504.0,524.5 505.0,531.0 506.1,531.0 C507.3,531.0 508.6,522.1 509.8,520.3 C511.2,518.2 512.6,517.2 514.0,517.2 C515.1,517.2 516.1,519.2 517.2,522.5 C517.9,524.7 518.6,531.0 519.3,531.0 C520.4,531.0 521.4,528.8 522.5,528.8 C523.4,528.8 524.2,551.4 525.1,554.3 C526.0,557.2 526.8,556.8 527.7,558.6 C528.8,560.8 529.8,567.0 530.9,567.0 C532.3,567.0 533.8,540.0 535.2,531.0 C536.2,524.5 537.3,516.1 538.3,516.1 C539.4,516.1 540.4,526.7 541.5,526.7 C542.6,526.7 543.6,526.7 544.7,526.7 C545.4,526.7 546.1,523.6 546.8,523.6 C547.9,523.6 548.9,537.9 550.0,539.4 C551.0,540.8 552.1,541.5 553.1,541.5 C554.0,541.5 554.9,539.5 555.8,537.2 C556.6,535.1 557.5,528.8 558.3,528.8 C559.7,528.8 561.2,528.8 562.6,528.8 C563.7,528.8 564.7,524.5 565.8,524.5 C567.2,524.5 568.6,526.7 570.0,526.7 C571.4,526.7 572.8,525.3 574.2,522.5 C574.9,521.1 575.6,516.1 576.3,516.1 C577.4,516.1 578.4,527.7 579.5,528.8 C580.9,530.3 582.3,531.0 583.7,531.0 C585.5,531.0 587.2,511.9 589.0,511.9 C590.2,511.9 591.5,516.1 592.7,524.5 C593.4,529.5 594.2,549.7 594.9,552.1 C595.8,554.9 596.6,556.3 597.5,556.3 C598.6,556.3 599.6,547.8 600.7,547.8 C601.8,547.8 602.8,560.6 603.9,560.6 C604.9,560.6 606.0,535.7 607.0,533.0 C608.1,530.2 609.1,530.0 610.2,528.8 C611.3,527.6 612.5,527.9 613.6,526.0 C614.8,524.1 615.9,514.9 617.1,514.9 C618.5,514.9 619.8,524.9 621.2,528.8 C622.4,532.2 623.5,537.2 624.7,537.2 C626.1,537.2 627.5,537.2 628.9,537.2 C629.8,537.2 630.8,540.0 631.7,540.0 C632.4,540.0 633.1,475.8 633.8,475.8 C634.9,475.8 636.1,521.8 637.2,523.3 C638.6,525.1 640.0,526.0 641.4,526.0 C642.3,526.0 643.3,517.7 644.2,517.7 C645.6,517.7 647.0,531.6 648.4,531.6 C649.8,531.6 651.2,530.7 652.6,528.8 C654.0,527.0 655.3,517.7 656.7,517.7 C657.9,517.7 659.0,526.0 660.2,526.0 C661.6,526.0 663.1,520.3 664.5,520.3 C665.2,520.3 665.9,543.3 666.6,547.8 C667.5,553.4 668.4,556.3 669.3,556.3 C670.4,556.3 671.4,549.5 672.5,541.5 C673.4,535.1 674.2,516.1 675.1,516.1 C676.0,516.1 676.9,525.6 677.8,528.8 C679.4,534.4 680.9,534.8 682.5,537.2 C683.6,538.8 684.6,538.7 685.7,541.5 C686.6,543.9 687.4,561.7 688.3,561.7 C689.4,561.7 690.4,519.0 691.5,518.3 C692.6,517.6 693.6,517.2 694.7,517.2 C696.1,517.2 697.5,531.0 698.9,531.0 C700.3,531.0 701.8,518.3 703.2,518.3 C704.2,518.3 705.3,528.2 706.3,537.2 C707.2,545.1 708.1,565.9 709.0,567.0 C710.2,568.4 711.5,569.1 712.7,569.1 C713.9,569.1 715.2,563.2 716.4,562.6 C717.6,562.0 718.9,562.3 720.1,561.7 C721.0,561.3 721.8,545.5 722.7,541.5 C724.1,534.9 725.6,535.2 727.0,531.6 C728.4,528.2 729.7,520.5 731.1,520.5 C733.0,520.5 734.8,524.5 736.7,526.0 C738.1,527.2 739.5,528.8 740.9,528.8 C742.3,528.8 743.7,526.9 745.1,523.3 C746.7,519.1 748.3,503.7 749.9,503.7 C751.1,503.7 752.2,526.0 753.4,526.0 C754.8,526.0 756.2,520.5 757.6,520.5 C759.0,520.5 760.4,524.7 761.8,526.0 C763.7,527.9 765.5,527.9 767.4,528.8 C769.2,529.8 771.1,531.6 772.9,531.6 C774.1,531.6 775.2,530.7 776.4,528.8 C777.3,527.4 778.2,482.8 779.1,482.8 C779.9,482.8 780.8,537.3 781.6,545.6 C782.5,554.9 783.5,559.5 784.4,559.5 C785.5,559.5 786.7,542.4 787.8,534.4 C789.2,524.5 790.6,506.5 792.0,506.5 C793.2,506.5 794.3,531.6 795.5,531.6 C796.9,531.6 798.3,527.5 799.7,526.0 C800.9,524.8 802.0,525.1 803.2,523.3 C804.1,521.8 805.0,489.8 805.9,489.8 C806.8,489.8 807.8,559.5 808.7,559.5 C809.4,559.5 810.1,531.6 810.8,531.6 C811.7,531.6 812.7,566.5 813.6,566.5 C815.0,566.5 816.4,565.7 817.8,564.0 C819.0,562.6 820.1,502.3 821.3,502.3 C822.2,502.3 823.2,505.1 824.1,505.1 C825.0,505.1 825.9,505.1 826.8,505.1 C827.5,505.1 828.2,562.6 828.9,563.7 C830.3,565.9 831.7,567.0 833.1,567.0 C834.7,567.0 836.2,562.6 837.8,562.6 C839.4,562.6 841.0,567.1 842.6,567.1 C845.1,567.1 847.5,558.6 850.0,558.6 C851.6,558.6 853.2,565.9 854.8,565.9 C855.8,565.9 856.9,549.1 857.9,537.2 C858.6,529.1 859.3,509.8 860.0,509.8 C861.2,509.8 862.5,527.5 863.7,531.0 C865.1,535.1 866.6,534.2 868.0,537.2 C868.9,539.0 869.7,542.8 870.6,543.7 C871.8,545.1 873.1,545.7 874.3,545.7 C875.7,545.7 877.2,544.3 878.6,541.5 C879.5,539.9 880.3,523.3 881.2,523.3 C882.5,523.3 883.9,540.0 885.2,540.0 C886.4,540.0 887.5,537.2 888.7,531.6 C889.6,527.2 890.6,498.1 891.5,498.1 C892.7,498.1 893.8,511.2 895.0,514.9 C896.2,518.6 897.3,518.7 898.5,520.5 C899.9,522.5 901.2,526.0 902.6,526.0 C904.5,526.0 906.3,495.4 908.2,495.4 C909.6,495.4 911.0,509.3 912.4,513.5 C913.8,517.7 915.2,518.8 916.6,520.5 C918.0,522.1 919.3,521.4 920.7,523.3 C921.5,524.3 922.2,530.7 923.0,534.4 L923.0,534.4 C922.2,533.5 921.5,532.2 920.7,531.6 C919.3,530.7 918.0,530.9 916.6,530.2 C915.2,529.5 913.8,528.6 912.4,527.4 C911.0,526.3 909.6,523.3 908.2,523.3 C906.3,523.3 904.5,531.6 902.6,531.6 C901.2,531.6 899.9,531.6 898.5,531.6 C897.3,531.6 896.2,528.8 895.0,528.8 C893.8,528.8 892.7,528.8 891.5,528.8 C890.6,528.8 889.6,540.6 888.7,542.8 C887.5,545.6 886.4,546.2 885.2,547.0 C883.9,547.9 882.5,547.7 881.2,548.4 C880.3,548.8 879.5,549.9 878.6,549.9 C877.2,549.9 875.7,549.9 874.3,549.9 C873.1,549.9 871.8,556.3 870.6,556.3 C869.7,556.3 868.9,549.4 868.0,547.8 C866.6,545.1 865.1,543.7 863.7,543.7 C862.5,543.7 861.2,544.4 860.0,545.7 C859.3,546.5 858.6,555.2 857.9,558.6 C856.9,563.6 855.8,567.9 854.8,567.9 C853.2,567.9 851.6,567.9 850.0,567.9 C847.5,567.9 845.1,568.7 842.6,568.7 C841.0,568.7 839.4,567.9 837.8,567.9 C836.2,567.9 834.7,568.7 833.1,568.7 C831.7,568.7 830.3,567.6 828.9,567.1 C828.2,566.9 827.5,566.9 826.8,566.4 C825.9,565.7 825.0,556.7 824.1,556.7 C823.2,556.7 822.2,558.2 821.3,559.5 C820.1,561.2 819.0,565.1 817.8,566.4 C816.4,567.9 815.0,568.7 813.6,568.7 C812.7,568.7 811.7,564.8 810.8,564.8 C810.1,564.8 809.4,566.4 808.7,566.4 C807.8,566.4 806.8,540.1 805.9,537.2 C805.0,534.4 804.1,533.0 803.2,533.0 C802.0,533.0 800.9,533.0 799.7,533.0 C798.3,533.0 796.9,533.0 795.5,533.0 C794.3,533.0 793.2,533.5 792.0,534.4 C790.6,535.5 789.2,538.8 787.8,545.6 C786.7,551.0 785.5,567.9 784.4,567.9 C783.5,567.9 782.5,564.2 781.6,556.7 C780.8,550.1 779.9,520.5 779.1,520.5 C778.2,520.5 777.3,534.4 776.4,534.4 C775.2,534.4 774.1,534.4 772.9,534.4 C771.1,534.4 769.2,534.4 767.4,534.4 C765.5,534.4 763.7,533.6 761.8,533.0 C760.4,532.6 759.0,531.6 757.6,531.6 C756.2,531.6 754.8,534.4 753.4,534.4 C752.2,534.4 751.1,532.3 749.9,531.6 C748.3,530.7 746.7,530.2 745.1,530.2 C743.7,530.2 742.3,531.6 740.9,531.6 C739.5,531.6 738.1,531.6 736.7,531.6 C734.8,531.6 733.0,531.6 731.1,531.6 C729.7,531.6 728.4,536.7 727.0,540.0 C725.6,543.5 724.1,546.2 722.7,552.1 C721.8,555.6 721.0,563.7 720.1,564.8 C718.9,566.4 717.6,566.4 716.4,567.1 C715.2,567.9 713.9,569.5 712.7,569.5 C711.5,569.5 710.2,568.9 709.0,567.9 C708.1,567.1 707.2,557.1 706.3,549.9 C705.3,541.6 704.2,520.3 703.2,520.3 C701.8,520.3 700.3,533.0 698.9,533.0 C697.5,533.0 696.1,520.3 694.7,520.3 C693.6,520.3 692.6,529.8 691.5,537.2 C690.4,544.6 689.4,564.8 688.3,564.8 C687.4,564.8 686.6,555.7 685.7,552.1 C684.6,547.6 683.6,541.5 682.5,541.5 C680.9,541.5 679.4,541.5 677.8,541.5 C676.9,541.5 676.0,533.0 675.1,533.0 C674.2,533.0 673.4,541.3 672.5,545.7 C671.4,551.1 670.4,562.6 669.3,562.6 C668.4,562.6 667.5,559.8 666.6,554.3 C665.9,549.9 665.2,531.0 664.5,531.0 C663.1,531.0 661.6,533.0 660.2,533.0 C659.0,533.0 657.9,531.6 656.7,531.6 C655.3,531.6 654.0,537.2 652.6,537.2 C651.2,537.2 649.8,537.2 648.4,537.2 C647.0,537.2 645.6,537.2 644.2,537.2 C643.3,537.2 642.3,534.4 641.4,534.4 C640.0,534.4 638.6,534.4 637.2,534.4 C636.1,534.4 634.9,535.8 633.8,538.6 C633.1,540.3 632.4,545.6 631.7,545.6 C630.8,545.6 629.8,542.8 628.9,542.8 C627.5,542.8 626.1,542.8 624.7,542.8 C623.5,542.8 622.4,538.9 621.2,537.2 C619.8,535.2 618.5,531.6 617.1,531.6 C615.9,531.6 614.8,534.4 613.6,534.4 C612.5,534.4 611.3,533.0 610.2,533.0 C609.1,533.0 608.1,541.9 607.0,547.8 C606.0,553.4 604.9,566.6 603.9,567.1 C602.8,567.6 601.8,567.9 600.7,567.9 C599.6,567.9 598.6,567.6 597.5,567.1 C596.6,566.7 595.8,564.3 594.9,558.6 C594.2,553.8 593.4,531.9 592.7,531.0 C591.5,529.6 590.2,528.8 589.0,528.8 C587.2,528.8 585.5,533.0 583.7,533.0 C582.3,533.0 580.9,532.4 579.5,531.0 C578.4,530.0 577.4,526.7 576.3,526.7 C575.6,526.7 574.9,526.7 574.2,526.7 C572.8,526.7 571.4,528.1 570.0,528.8 C568.6,529.6 567.2,530.2 565.8,531.0 C564.7,531.6 563.7,532.2 562.6,533.0 C561.2,534.1 559.7,534.4 558.3,537.2 C557.5,538.8 556.6,542.0 555.8,543.7 C554.9,545.6 554.0,547.8 553.1,547.8 C552.1,547.8 551.0,547.1 550.0,545.7 C548.9,544.3 547.9,531.0 546.8,531.0 C546.1,531.0 545.4,531.0 544.7,531.0 C543.6,531.0 542.6,531.0 541.5,531.0 C540.4,531.0 539.4,531.0 538.3,531.0 C537.3,531.0 536.2,536.8 535.2,541.5 C533.8,548.2 532.3,568.7 530.9,568.7 C529.8,568.7 528.8,567.9 527.7,566.4 C526.8,565.1 526.0,563.8 525.1,558.6 C524.2,553.4 523.4,533.0 522.5,533.0 C521.4,533.0 520.4,537.2 519.3,537.2 C518.6,537.2 517.9,533.9 517.2,533.0 C516.1,531.7 515.1,531.0 514.0,531.0 C512.6,531.0 511.2,532.2 509.8,533.0 C508.6,533.7 507.3,535.4 506.1,535.4 C505.0,535.4 504.0,535.4 502.9,535.4 C502.0,535.4 501.1,545.0 500.2,552.1 C499.6,556.5 499.1,567.1 498.5,567.1 C497.8,567.1 497.1,566.9 496.4,566.4 C495.2,565.5 494.1,528.8 492.9,528.8 C491.5,528.8 490.1,528.8 488.7,528.8 C487.3,528.8 486.0,530.9 484.6,531.6 C483.4,532.2 482.3,532.1 481.1,533.0 C479.9,534.0 478.8,535.6 477.6,537.2 C476.0,539.5 474.3,540.0 472.7,545.6 C471.5,549.6 470.4,566.4 469.2,566.4 C468.5,566.4 467.9,539.9 467.2,537.2 C466.3,533.5 465.3,531.6 464.4,531.6 C463.0,531.6 461.6,531.6 460.2,531.6 C459.3,531.6 458.3,533.6 457.4,534.4 C456.2,535.5 455.1,537.2 453.9,537.2 C452.7,537.2 451.6,537.2 450.4,537.2 C449.3,537.2 448.1,540.0 447.0,540.0 C445.8,540.0 444.7,540.0 443.5,540.0 C442.5,540.0 441.6,537.2 440.6,537.2 C439.5,537.2 438.5,537.2 437.4,537.2 C436.2,537.2 434.9,537.2 433.7,537.2 C432.7,537.2 431.6,533.0 430.6,533.0 C429.7,533.0 428.8,535.9 427.9,537.2 C426.8,538.8 425.8,539.9 424.7,541.5 C423.5,543.4 422.2,547.8 421.0,547.8 C420.0,547.8 418.9,543.6 417.9,541.5 C416.8,539.4 415.8,536.8 414.7,535.4 C413.8,534.1 412.9,533.0 412.0,533.0 C410.4,533.0 408.9,545.7 407.3,545.7 C406.2,545.7 405.2,545.7 404.1,545.7 C403.0,545.7 402.0,534.4 400.9,533.0 C399.9,531.7 398.8,531.0 397.8,531.0 C396.4,531.0 394.9,535.2 393.5,537.2 C392.4,538.7 391.4,541.5 390.3,541.5 C389.3,541.5 388.2,540.1 387.2,539.4 C386.0,538.6 384.9,537.2 383.7,537.2 C382.3,537.2 380.9,539.1 379.5,542.8 C378.1,546.4 376.8,567.1 375.4,567.1 C374.5,567.1 373.5,566.4 372.6,566.4 C371.7,566.4 370.7,569.5 369.8,569.5 C368.2,569.5 366.5,568.4 364.9,566.4 C363.7,564.9 362.6,551.6 361.4,545.6 C359.8,537.3 358.2,526.0 356.6,526.0 C355.4,526.0 354.3,531.6 353.1,531.6 C351.2,531.6 349.4,527.4 347.5,527.4 C346.1,527.4 344.7,527.4 343.3,527.4 C342.6,527.4 341.9,537.6 341.2,542.8 C340.0,551.4 338.9,569.1 337.7,569.1 C336.6,569.1 335.4,562.9 334.3,556.7 C333.4,551.6 332.4,538.3 331.5,537.2 C330.7,536.3 329.9,536.2 329.1,535.8 C327.7,535.1 326.3,535.0 324.9,534.4 C324.0,534.0 323.0,533.0 322.1,533.0 C320.7,533.0 319.4,534.4 318.0,534.4 C316.6,534.4 315.2,534.4 313.8,534.4 C312.4,534.4 311.0,535.4 309.6,537.2 C308.0,539.4 306.3,566.4 304.7,566.4 C303.5,566.4 302.4,561.2 301.2,554.0 C300.3,548.4 299.4,531.6 298.5,531.6 C296.9,531.6 295.2,534.4 293.6,534.4 C292.2,534.4 290.8,531.6 289.4,531.6 C287.3,531.6 285.2,535.4 283.1,542.8 C281.7,547.6 280.4,565.1 279.0,565.1 C277.8,565.1 276.7,548.2 275.5,542.8 C274.4,537.6 273.2,533.6 272.1,533.0 C270.7,532.3 269.3,531.9 267.9,531.9 C266.5,531.9 265.0,532.4 263.6,533.0 C262.4,533.6 261.1,533.8 259.9,535.4 C258.7,536.9 257.4,542.5 256.2,543.7 C254.8,545.1 253.4,545.7 252.0,545.7 C250.6,545.7 249.1,534.1 247.7,534.1 C246.5,534.1 245.2,535.4 244.0,535.4 C242.6,535.4 241.2,534.6 239.8,534.1 C238.7,533.8 237.7,533.0 236.6,533.0 C234.8,533.0 233.1,535.4 231.3,535.4 C230.1,535.4 228.8,534.8 227.6,534.1 C226.4,533.4 225.1,531.0 223.9,531.0 C222.7,531.0 221.4,531.3 220.2,531.9 C219.5,532.3 218.9,533.4 218.2,534.1 C217.1,535.2 216.1,535.9 215.0,537.2 C214.0,538.4 212.9,540.4 211.9,541.5 C211.0,542.5 210.1,543.7 209.2,543.7 C208.5,543.7 207.8,543.7 207.1,543.7 C206.2,543.7 205.3,543.7 204.4,543.7 C203.5,543.7 202.7,535.4 201.8,535.4 C200.9,535.4 200.1,536.0 199.2,537.2 C197.9,539.0 196.7,546.5 195.4,552.1 C194.2,557.5 192.9,570.1 191.7,570.1 C190.3,570.1 188.9,567.9 187.5,567.9 C186.3,567.9 185.0,567.9 183.8,567.9 C182.9,567.9 182.1,558.2 181.2,554.3 C180.3,550.1 179.4,547.0 178.5,543.7 C177.4,539.8 176.4,533.0 175.3,533.0 C174.4,533.0 173.6,534.1 172.7,534.1 C171.8,534.1 171.0,533.0 170.1,533.0 C168.8,533.0 167.6,533.0 166.3,533.0 C165.1,533.0 163.8,524.5 162.6,524.5 C162.1,524.5 161.6,538.0 161.1,543.7 C160.2,553.7 159.4,567.9 158.5,567.9 C157.6,567.9 156.8,564.5 155.9,560.6 C155.0,556.6 154.1,547.8 153.2,543.7 C152.3,539.8 151.5,536.3 150.6,536.3 C149.2,536.3 147.7,538.0 146.3,541.5 C145.3,544.1 144.2,564.8 143.2,564.8 C142.5,564.8 141.7,560.6 141.0,558.6 C140.0,555.8 138.9,551.7 137.9,551.0 C136.8,550.3 135.8,550.6 134.7,549.9 C133.6,549.2 132.6,547.1 131.5,545.7 C130.4,544.3 129.4,543.0 128.3,541.5 C127.3,540.2 126.2,539.6 125.2,537.2 C124.3,535.1 123.4,528.8 122.5,528.8 C121.6,528.8 120.8,528.8 119.9,528.8 C119.0,528.8 118.1,529.5 117.2,529.9 C116.5,530.3 115.8,530.3 115.1,531.0 C114.0,532.1 113.0,539.7 111.9,545.7 C111.0,550.6 110.2,562.6 109.3,562.6 C108.2,562.6 107.2,556.5 106.1,545.7 C105.8,542.4 105.4,534.4 105.1,534.1 C104.2,533.4 103.4,533.0 102.5,533.0 C101.6,533.0 100.8,549.3 99.9,549.9 C98.8,550.6 97.8,551.0 96.7,551.0 C95.6,551.0 94.6,547.8 93.5,547.8 C92.6,547.8 91.8,549.9 90.9,549.9 C90.0,549.9 89.1,549.9 88.2,549.9 C87.3,549.9 86.5,543.7 85.6,543.7 C84.7,543.7 83.8,545.7 82.9,545.7 C81.8,545.7 80.8,545.7 79.7,545.7 C79.0,545.7 78.3,547.0 77.6,547.8 C76.7,548.7 75.9,551.0 75.0,551.0 C73.9,551.0 72.9,551.0 71.8,551.0 C70.7,551.0 69.7,545.7 68.6,545.7 C67.7,545.7 66.9,546.4 66.0,547.8 C65.1,549.1 64.2,558.6 63.3,558.6 C62.4,558.6 61.6,547.1 60.7,543.7 C59.8,540.2 58.9,540.3 58.0,538.5 C57.1,536.7 56.3,533.0 55.4,533.0 C54.5,533.0 53.7,533.0 52.8,533.0 C51.9,533.0 51.0,524.6 50.1,520.3 Z"/><path fill="#203a5e" d="M50.1,520.3 C51.0,524.6 51.9,533.0 52.8,533.0 C53.7,533.0 54.5,533.0 55.4,533.0 C56.3,533.0 57.1,536.7 58.0,538.5 C58.9,540.3 59.8,540.2 60.7,543.7 C61.6,547.1 62.4,558.6 63.3,558.6 C64.2,558.6 65.1,549.1 66.0,547.8 C66.9,546.4 67.7,545.7 68.6,545.7 C69.7,545.7 70.7,551.0 71.8,551.0 C72.9,551.0 73.9,551.0 75.0,551.0 C75.9,551.0 76.7,548.7 77.6,547.8 C78.3,547.0 79.0,545.7 79.7,545.7 C80.8,545.7 81.8,545.7 82.9,545.7 C83.8,545.7 84.7,543.7 85.6,543.7 C86.5,543.7 87.3,549.9 88.2,549.9 C89.1,549.9 90.0,549.9 90.9,549.9 C91.8,549.9 92.6,547.8 93.5,547.8 C94.6,547.8 95.6,551.0 96.7,551.0 C97.8,551.0 98.8,550.6 99.9,549.9 C100.8,549.3 101.6,533.0 102.5,533.0 C103.4,533.0 104.2,533.4 105.1,534.1 C105.4,534.4 105.8,542.4 106.1,545.7 C107.2,556.5 108.2,562.6 109.3,562.6 C110.2,562.6 111.0,550.6 111.9,545.7 C113.0,539.7 114.0,532.1 115.1,531.0 C115.8,530.3 116.5,530.3 117.2,529.9 C118.1,529.5 119.0,528.8 119.9,528.8 C120.8,528.8 121.6,528.8 122.5,528.8 C123.4,528.8 124.3,535.1 125.2,537.2 C126.2,539.6 127.3,540.2 128.3,541.5 C129.4,543.0 130.4,544.3 131.5,545.7 C132.6,547.1 133.6,549.2 134.7,549.9 C135.8,550.6 136.8,550.3 137.9,551.0 C138.9,551.7 140.0,555.8 141.0,558.6 C141.7,560.6 142.5,564.8 143.2,564.8 C144.2,564.8 145.3,544.1 146.3,541.5 C147.7,538.0 149.2,536.3 150.6,536.3 C151.5,536.3 152.3,539.8 153.2,543.7 C154.1,547.8 155.0,556.6 155.9,560.6 C156.8,564.5 157.6,567.9 158.5,567.9 C159.4,567.9 160.2,553.7 161.1,543.7 C161.6,538.0 162.1,524.5 162.6,524.5 C163.8,524.5 165.1,533.0 166.3,533.0 C167.6,533.0 168.8,533.0 170.1,533.0 C171.0,533.0 171.8,534.1 172.7,534.1 C173.6,534.1 174.4,533.0 175.3,533.0 C176.4,533.0 177.4,539.8 178.5,543.7 C179.4,547.0 180.3,550.1 181.2,554.3 C182.1,558.2 182.9,567.9 183.8,567.9 C185.0,567.9 186.3,567.9 187.5,567.9 C188.9,567.9 190.3,570.1 191.7,570.1 C192.9,570.1 194.2,557.5 195.4,552.1 C196.7,546.5 197.9,539.0 199.2,537.2 C200.1,536.0 200.9,535.4 201.8,535.4 C202.7,535.4 203.5,543.7 204.4,543.7 C205.3,543.7 206.2,543.7 207.1,543.7 C207.8,543.7 208.5,543.7 209.2,543.7 C210.1,543.7 211.0,542.5 211.9,541.5 C212.9,540.4 214.0,538.4 215.0,537.2 C216.1,535.9 217.1,535.2 218.2,534.1 C218.9,533.4 219.5,532.3 220.2,531.9 C221.4,531.3 222.7,531.0 223.9,531.0 C225.1,531.0 226.4,533.4 227.6,534.1 C228.8,534.8 230.1,535.4 231.3,535.4 C233.1,535.4 234.8,533.0 236.6,533.0 C237.7,533.0 238.7,533.8 239.8,534.1 C241.2,534.6 242.6,535.4 244.0,535.4 C245.2,535.4 246.5,534.1 247.7,534.1 C249.1,534.1 250.6,545.7 252.0,545.7 C253.4,545.7 254.8,545.1 256.2,543.7 C257.4,542.5 258.7,536.9 259.9,535.4 C261.1,533.8 262.4,533.6 263.6,533.0 C265.0,532.4 266.5,531.9 267.9,531.9 C269.3,531.9 270.7,532.3 272.1,533.0 C273.2,533.6 274.4,537.6 275.5,542.8 C276.7,548.2 277.8,565.1 279.0,565.1 C280.4,565.1 281.7,547.6 283.1,542.8 C285.2,535.4 287.3,531.6 289.4,531.6 C290.8,531.6 292.2,534.4 293.6,534.4 C295.2,534.4 296.9,531.6 298.5,531.6 C299.4,531.6 300.3,548.4 301.2,554.0 C302.4,561.2 303.5,566.4 304.7,566.4 C306.3,566.4 308.0,539.4 309.6,537.2 C311.0,535.4 312.4,534.4 313.8,534.4 C315.2,534.4 316.6,534.4 318.0,534.4 C319.4,534.4 320.7,533.0 322.1,533.0 C323.0,533.0 324.0,534.0 324.9,534.4 C326.3,535.0 327.7,535.1 329.1,535.8 C329.9,536.2 330.7,536.3 331.5,537.2 C332.4,538.3 333.4,551.6 334.3,556.7 C335.4,562.9 336.6,569.1 337.7,569.1 C338.9,569.1 340.0,551.4 341.2,542.8 C341.9,537.6 342.6,527.4 343.3,527.4 C344.7,527.4 346.1,527.4 347.5,527.4 C349.4,527.4 351.2,531.6 353.1,531.6 C354.3,531.6 355.4,526.0 356.6,526.0 C358.2,526.0 359.8,537.3 361.4,545.6 C362.6,551.6 363.7,564.9 364.9,566.4 C366.5,568.4 368.2,569.5 369.8,569.5 C370.7,569.5 371.7,566.4 372.6,566.4 C373.5,566.4 374.5,567.1 375.4,567.1 C376.8,567.1 378.1,546.4 379.5,542.8 C380.9,539.1 382.3,537.2 383.7,537.2 C384.9,537.2 386.0,538.6 387.2,539.4 C388.2,540.1 389.3,541.5 390.3,541.5 C391.4,541.5 392.4,538.7 393.5,537.2 C394.9,535.2 396.4,531.0 397.8,531.0 C398.8,531.0 399.9,531.7 400.9,533.0 C402.0,534.4 403.0,545.7 404.1,545.7 C405.2,545.7 406.2,545.7 407.3,545.7 C408.9,545.7 410.4,533.0 412.0,533.0 C412.9,533.0 413.8,534.1 414.7,535.4 C415.8,536.8 416.8,539.4 417.9,541.5 C418.9,543.6 420.0,547.8 421.0,547.8 C422.2,547.8 423.5,543.4 424.7,541.5 C425.8,539.9 426.8,538.8 427.9,537.2 C428.8,535.9 429.7,533.0 430.6,533.0 C431.6,533.0 432.7,537.2 433.7,537.2 C434.9,537.2 436.2,537.2 437.4,537.2 C438.5,537.2 439.5,537.2 440.6,537.2 C441.6,537.2 442.5,540.0 443.5,540.0 C444.7,540.0 445.8,540.0 447.0,540.0 C448.1,540.0 449.3,537.2 450.4,537.2 C451.6,537.2 452.7,537.2 453.9,537.2 C455.1,537.2 456.2,535.5 457.4,534.4 C458.3,533.6 459.3,531.6 460.2,531.6 C461.6,531.6 463.0,531.6 464.4,531.6 C465.3,531.6 466.3,533.5 467.2,537.2 C467.9,539.9 468.5,566.4 469.2,566.4 C470.4,566.4 471.5,549.6 472.7,545.6 C474.3,540.0 476.0,539.5 477.6,537.2 C478.8,535.6 479.9,534.0 481.1,533.0 C482.3,532.1 483.4,532.2 484.6,531.6 C486.0,530.9 487.3,528.8 488.7,528.8 C490.1,528.8 491.5,528.8 492.9,528.8 C494.1,528.8 495.2,565.5 496.4,566.4 C497.1,566.9 497.8,567.1 498.5,567.1 C499.1,567.1 499.6,556.5 500.2,552.1 C501.1,545.0 502.0,535.4 502.9,535.4 C504.0,535.4 505.0,535.4 506.1,535.4 C507.3,535.4 508.6,533.7 509.8,533.0 C511.2,532.2 512.6,531.0 514.0,531.0 C515.1,531.0 516.1,531.7 517.2,533.0 C517.9,533.9 518.6,537.2 519.3,537.2 C520.4,537.2 521.4,533.0 522.5,533.0 C523.4,533.0 524.2,553.4 525.1,558.6 C526.0,563.8 526.8,565.1 527.7,566.4 C528.8,567.9 529.8,568.7 530.9,568.7 C532.3,568.7 533.8,548.2 535.2,541.5 C536.2,536.8 537.3,531.0 538.3,531.0 C539.4,531.0 540.4,531.0 541.5,531.0 C542.6,531.0 543.6,531.0 544.7,531.0 C545.4,531.0 546.1,531.0 546.8,531.0 C547.9,531.0 548.9,544.3 550.0,545.7 C551.0,547.1 552.1,547.8 553.1,547.8 C554.0,547.8 554.9,545.6 555.8,543.7 C556.6,542.0 557.5,538.8 558.3,537.2 C559.7,534.4 561.2,534.1 562.6,533.0 C563.7,532.2 564.7,531.6 565.8,531.0 C567.2,530.2 568.6,529.6 570.0,528.8 C571.4,528.1 572.8,526.7 574.2,526.7 C574.9,526.7 575.6,526.7 576.3,526.7 C577.4,526.7 578.4,530.0 579.5,531.0 C580.9,532.4 582.3,533.0 583.7,533.0 C585.5,533.0 587.2,528.8 589.0,528.8 C590.2,528.8 591.5,529.6 592.7,531.0 C593.4,531.9 594.2,553.8 594.9,558.6 C595.8,564.3 596.6,566.7 597.5,567.1 C598.6,567.6 599.6,567.9 600.7,567.9 C601.8,567.9 602.8,567.6 603.9,567.1 C604.9,566.6 606.0,553.4 607.0,547.8 C608.1,541.9 609.1,533.0 610.2,533.0 C611.3,533.0 612.5,534.4 613.6,534.4 C614.8,534.4 615.9,531.6 617.1,531.6 C618.5,531.6 619.8,535.2 621.2,537.2 C622.4,538.9 623.5,542.8 624.7,542.8 C626.1,542.8 627.5,542.8 628.9,542.8 C629.8,542.8 630.8,545.6 631.7,545.6 C632.4,545.6 633.1,540.3 633.8,538.6 C634.9,535.8 636.1,534.4 637.2,534.4 C638.6,534.4 640.0,534.4 641.4,534.4 C642.3,534.4 643.3,537.2 644.2,537.2 C645.6,537.2 647.0,537.2 648.4,537.2 C649.8,537.2 651.2,537.2 652.6,537.2 C654.0,537.2 655.3,531.6 656.7,531.6 C657.9,531.6 659.0,533.0 660.2,533.0 C661.6,533.0 663.1,531.0 664.5,531.0 C665.2,531.0 665.9,549.9 666.6,554.3 C667.5,559.8 668.4,562.6 669.3,562.6 C670.4,562.6 671.4,551.1 672.5,545.7 C673.4,541.3 674.2,533.0 675.1,533.0 C676.0,533.0 676.9,541.5 677.8,541.5 C679.4,541.5 680.9,541.5 682.5,541.5 C683.6,541.5 684.6,547.6 685.7,552.1 C686.6,555.7 687.4,564.8 688.3,564.8 C689.4,564.8 690.4,544.6 691.5,537.2 C692.6,529.8 693.6,520.3 694.7,520.3 C696.1,520.3 697.5,533.0 698.9,533.0 C700.3,533.0 701.8,520.3 703.2,520.3 C704.2,520.3 705.3,541.6 706.3,549.9 C707.2,557.1 708.1,567.1 709.0,567.9 C710.2,568.9 711.5,569.5 712.7,569.5 C713.9,569.5 715.2,567.9 716.4,567.1 C717.6,566.4 718.9,566.4 720.1,564.8 C721.0,563.7 721.8,555.6 722.7,552.1 C724.1,546.2 725.6,543.5 727.0,540.0 C728.4,536.7 729.7,531.6 731.1,531.6 C733.0,531.6 734.8,531.6 736.7,531.6 C738.1,531.6 739.5,531.6 740.9,531.6 C742.3,531.6 743.7,530.2 745.1,530.2 C746.7,530.2 748.3,530.7 749.9,531.6 C751.1,532.3 752.2,534.4 753.4,534.4 C754.8,534.4 756.2,531.6 757.6,531.6 C759.0,531.6 760.4,532.6 761.8,533.0 C763.7,533.6 765.5,534.4 767.4,534.4 C769.2,534.4 771.1,534.4 772.9,534.4 C774.1,534.4 775.2,534.4 776.4,534.4 C777.3,534.4 778.2,520.5 779.1,520.5 C779.9,520.5 780.8,550.1 781.6,556.7 C782.5,564.2 783.5,567.9 784.4,567.9 C785.5,567.9 786.7,551.0 787.8,545.6 C789.2,538.8 790.6,535.5 792.0,534.4 C793.2,533.5 794.3,533.0 795.5,533.0 C796.9,533.0 798.3,533.0 799.7,533.0 C800.9,533.0 802.0,533.0 803.2,533.0 C804.1,533.0 805.0,534.4 805.9,537.2 C806.8,540.1 807.8,566.4 808.7,566.4 C809.4,566.4 810.1,564.8 810.8,564.8 C811.7,564.8 812.7,568.7 813.6,568.7 C815.0,568.7 816.4,567.9 817.8,566.4 C819.0,565.1 820.1,561.2 821.3,559.5 C822.2,558.2 823.2,556.7 824.1,556.7 C825.0,556.7 825.9,565.7 826.8,566.4 C827.5,566.9 828.2,566.9 828.9,567.1 C830.3,567.6 831.7,568.7 833.1,568.7 C834.7,568.7 836.2,567.9 837.8,567.9 C839.4,567.9 841.0,568.7 842.6,568.7 C845.1,568.7 847.5,567.9 850.0,567.9 C851.6,567.9 853.2,567.9 854.8,567.9 C855.8,567.9 856.9,563.6 857.9,558.6 C858.6,555.2 859.3,546.5 860.0,545.7 C861.2,544.4 862.5,543.7 863.7,543.7 C865.1,543.7 866.6,545.1 868.0,547.8 C868.9,549.4 869.7,556.3 870.6,556.3 C871.8,556.3 873.1,549.9 874.3,549.9 C875.7,549.9 877.2,549.9 878.6,549.9 C879.5,549.9 880.3,548.8 881.2,548.4 C882.5,547.7 883.9,547.9 885.2,547.0 C886.4,546.2 887.5,545.6 888.7,542.8 C889.6,540.6 890.6,528.8 891.5,528.8 C892.7,528.8 893.8,528.8 895.0,528.8 C896.2,528.8 897.3,531.6 898.5,531.6 C899.9,531.6 901.2,531.6 902.6,531.6 C904.5,531.6 906.3,523.3 908.2,523.3 C909.6,523.3 911.0,526.3 912.4,527.4 C913.8,528.6 915.2,529.5 916.6,530.2 C918.0,530.9 919.3,530.7 920.7,531.6 C921.5,532.2 922.2,533.5 923.0,534.4 L923.0,554.0 C922.2,553.0 921.5,552.1 920.7,551.2 C919.3,549.4 918.0,545.6 916.6,545.6 C915.2,545.6 913.8,547.0 912.4,547.0 C911.0,547.0 909.6,541.4 908.2,541.4 C906.3,541.4 904.5,549.8 902.6,549.8 C901.2,549.8 899.9,547.7 898.5,547.0 C897.3,546.4 896.2,546.0 895.0,545.6 C893.8,545.1 892.7,544.2 891.5,544.2 C890.6,544.2 889.6,549.2 888.7,551.2 C887.5,553.6 886.4,555.9 885.2,556.7 C883.9,557.7 882.5,557.8 881.2,558.1 C880.3,558.3 879.5,558.6 878.6,558.6 C877.2,558.6 875.7,558.6 874.3,558.6 C873.1,558.6 871.8,563.7 870.6,563.7 C869.7,563.7 868.9,557.1 868.0,556.3 C866.6,554.9 865.1,554.3 863.7,554.3 C862.5,554.3 861.2,556.9 860.0,558.6 C859.3,559.6 858.6,560.4 857.9,561.7 C856.9,563.6 855.8,569.0 854.8,569.0 C853.2,569.0 851.6,569.0 850.0,569.0 C847.5,569.0 845.1,570.1 842.6,570.1 C841.0,570.1 839.4,569.0 837.8,569.0 C836.2,569.0 834.7,570.1 833.1,570.1 C831.7,570.1 830.3,569.2 828.9,568.7 C828.2,568.4 827.5,568.4 826.8,567.9 C825.9,567.2 825.0,562.3 824.1,562.3 C823.2,562.3 822.2,564.3 821.3,565.1 C820.1,566.2 819.0,567.1 817.8,567.9 C816.4,568.8 815.0,569.9 813.6,569.9 C812.7,569.9 811.7,567.9 810.8,567.9 C810.1,567.9 809.4,567.9 808.7,567.9 C807.8,567.9 806.8,553.1 805.9,551.2 C805.0,549.3 804.1,548.4 803.2,548.4 C802.0,548.4 800.9,549.8 799.7,549.8 C798.3,549.8 796.9,549.8 795.5,549.8 C794.3,549.8 793.2,550.2 792.0,551.2 C790.6,552.3 789.2,553.1 787.8,556.7 C786.7,559.7 785.5,569.3 784.4,569.3 C783.5,569.3 782.5,567.9 781.6,565.1 C780.8,562.6 779.9,542.8 779.1,542.8 C778.2,542.8 777.3,544.6 776.4,545.6 C775.2,546.9 774.1,549.8 772.9,549.8 C771.1,549.8 769.2,548.4 767.4,548.4 C765.5,548.4 763.7,549.8 761.8,549.8 C760.4,549.8 759.0,545.6 757.6,545.6 C756.2,545.6 754.8,554.0 753.4,554.0 C752.2,554.0 751.1,552.0 749.9,551.2 C748.3,550.0 746.7,548.4 745.1,548.4 C743.7,548.4 742.3,548.4 740.9,548.4 C739.5,548.4 738.1,548.4 736.7,548.4 C734.8,548.4 733.0,548.8 731.1,549.8 C729.7,550.4 728.4,551.1 727.0,552.6 C725.6,554.0 724.1,554.6 722.7,558.6 C721.8,561.0 721.0,567.4 720.1,567.9 C718.9,568.6 717.6,568.6 716.4,569.0 C715.2,569.3 713.9,570.1 712.7,570.1 C711.5,570.1 710.2,569.7 709.0,569.0 C708.1,568.5 707.2,562.2 706.3,558.6 C705.3,554.5 704.2,545.7 703.2,545.7 C701.8,545.7 700.3,547.8 698.9,547.8 C697.5,547.8 696.1,545.7 694.7,545.7 C693.6,545.7 692.6,548.2 691.5,552.1 C690.4,556.0 689.4,569.0 688.3,569.0 C687.4,569.0 686.6,559.9 685.7,558.6 C684.6,557.0 683.6,556.7 682.5,556.3 C680.9,555.7 679.4,556.0 677.8,555.3 C676.9,555.0 676.0,547.8 675.1,547.8 C674.2,547.8 673.4,555.3 672.5,558.6 C671.4,562.6 670.4,569.0 669.3,569.0 C668.4,569.0 667.5,566.9 666.6,562.6 C665.9,559.3 665.2,546.8 664.5,546.8 C663.1,546.8 661.6,548.4 660.2,548.4 C659.0,548.4 657.9,548.4 656.7,548.4 C655.3,548.4 654.0,548.4 652.6,548.4 C651.2,548.4 649.8,550.2 648.4,551.2 C647.0,552.1 645.6,554.0 644.2,554.0 C643.3,554.0 642.3,548.4 641.4,548.4 C640.0,548.4 638.6,552.6 637.2,552.6 C636.1,552.6 634.9,552.6 633.8,552.6 C633.1,552.6 632.4,554.5 631.7,555.3 C630.8,556.5 629.8,558.1 628.9,558.1 C627.5,558.1 626.1,555.3 624.7,555.3 C623.5,555.3 622.4,555.3 621.2,555.3 C619.8,555.3 618.5,548.4 617.1,548.4 C615.9,548.4 614.8,549.8 613.6,549.8 C612.5,549.8 611.3,547.8 610.2,547.8 C609.1,547.8 608.1,557.0 607.0,560.6 C606.0,564.1 604.9,568.3 603.9,569.0 C602.8,569.7 601.8,570.1 600.7,570.1 C599.6,570.1 598.6,569.7 597.5,569.0 C596.6,568.4 595.8,567.6 594.9,564.8 C594.2,562.4 593.4,547.8 592.7,547.8 C591.5,547.8 590.2,547.8 589.0,547.8 C587.2,547.8 585.5,549.9 583.7,549.9 C582.3,549.9 580.9,546.8 579.5,546.8 C578.4,546.8 577.4,547.8 576.3,547.8 C575.6,547.8 574.9,546.8 574.2,546.8 C572.8,546.8 571.4,547.4 570.0,547.8 C568.6,548.1 567.2,549.0 565.8,549.0 C564.7,549.0 563.7,547.8 562.6,547.8 C561.2,547.8 559.7,550.8 558.3,552.1 C557.5,552.9 556.6,553.6 555.8,554.3 C554.9,555.0 554.0,555.6 553.1,556.3 C552.1,557.0 551.0,558.6 550.0,558.6 C548.9,558.6 547.9,548.7 546.8,547.8 C546.1,547.1 545.4,547.1 544.7,546.8 C543.6,546.4 542.6,545.7 541.5,545.7 C540.4,545.7 539.4,545.7 538.3,545.7 C537.3,545.7 536.2,549.0 535.2,552.1 C533.8,556.3 532.3,570.1 530.9,570.1 C529.8,570.1 528.8,569.6 527.7,569.0 C526.8,568.5 526.0,568.3 525.1,567.0 C524.2,565.6 523.4,547.8 522.5,547.8 C521.4,547.8 520.4,554.3 519.3,554.3 C518.6,554.3 517.9,554.3 517.2,554.3 C516.1,554.3 515.1,549.0 514.0,549.0 C512.6,549.0 511.2,549.6 509.8,549.9 C508.6,550.2 507.3,551.0 506.1,551.0 C505.0,551.0 504.0,551.0 502.9,551.0 C502.0,551.0 501.1,559.0 500.2,562.6 C499.6,564.9 499.1,569.3 498.5,569.3 C497.8,569.3 497.1,568.8 496.4,567.9 C495.2,566.4 494.1,548.5 492.9,547.0 C491.5,545.1 490.1,544.2 488.7,544.2 C487.3,544.2 486.0,547.4 484.6,548.4 C483.4,549.2 482.3,549.8 481.1,549.8 C479.9,549.8 478.8,549.8 477.6,549.8 C476.0,549.8 474.3,555.5 472.7,559.5 C471.5,562.4 470.4,569.3 469.2,569.3 C468.5,569.3 467.9,555.3 467.2,554.0 C466.3,552.1 465.3,551.8 464.4,551.2 C463.0,550.2 461.6,549.8 460.2,549.8 C459.3,549.8 458.3,551.2 457.4,551.2 C456.2,551.2 455.1,549.8 453.9,549.8 C452.7,549.8 451.6,550.2 450.4,551.2 C449.3,552.1 448.1,555.3 447.0,555.3 C445.8,555.3 444.7,555.3 443.5,555.3 C442.5,555.3 441.6,553.7 440.6,553.2 C439.5,552.6 438.5,552.1 437.4,552.1 C436.2,552.1 434.9,555.3 433.7,555.3 C432.7,555.3 431.6,551.0 430.6,551.0 C429.7,551.0 428.8,551.6 427.9,552.1 C426.8,552.7 425.8,553.3 424.7,554.3 C423.5,555.4 422.2,558.6 421.0,558.6 C420.0,558.6 418.9,555.5 417.9,554.3 C416.8,553.0 415.8,551.7 414.7,551.0 C413.8,550.4 412.9,549.9 412.0,549.9 C410.4,549.9 408.9,554.7 407.3,556.3 C406.2,557.3 405.2,558.6 404.1,558.6 C403.0,558.6 402.0,553.9 400.9,552.1 C399.9,550.3 398.8,547.8 397.8,547.8 C396.4,547.8 394.9,550.3 393.5,551.0 C392.4,551.6 391.4,551.5 390.3,552.1 C389.3,552.6 388.2,554.3 387.2,554.3 C386.0,554.3 384.9,551.2 383.7,551.2 C382.3,551.2 380.9,552.1 379.5,554.0 C378.1,555.8 376.8,568.7 375.4,568.7 C374.5,568.7 373.5,568.7 372.6,568.7 C371.7,568.7 370.7,569.9 369.8,569.9 C368.2,569.9 366.5,569.2 364.9,567.9 C363.7,566.9 362.6,557.6 361.4,554.0 C359.8,548.9 358.2,544.2 356.6,544.2 C355.4,544.2 354.3,548.4 353.1,548.4 C351.2,548.4 349.4,545.6 347.5,545.6 C346.1,545.6 344.7,545.6 343.3,545.6 C342.6,545.6 341.9,551.0 341.2,554.0 C340.0,558.9 338.9,569.9 337.7,569.9 C336.6,569.9 335.4,565.9 334.3,562.3 C333.4,559.3 332.4,552.2 331.5,551.2 C330.7,550.2 329.9,549.8 329.1,549.8 C327.7,549.8 326.3,549.8 324.9,549.8 C324.0,549.8 323.0,548.8 322.1,548.4 C320.7,547.8 319.4,547.0 318.0,547.0 C316.6,547.0 315.2,549.1 313.8,549.8 C312.4,550.5 311.0,550.2 309.6,551.2 C308.0,552.2 306.3,567.9 304.7,567.9 C303.5,567.9 302.4,566.0 301.2,562.3 C300.3,559.5 299.4,550.3 298.5,549.8 C296.9,548.8 295.2,549.3 293.6,548.4 C292.2,547.6 290.8,544.2 289.4,544.2 C287.3,544.2 285.2,547.9 283.1,554.0 C281.7,557.9 280.4,569.3 279.0,569.3 C277.8,569.3 276.7,559.8 275.5,556.7 C274.4,553.8 273.2,552.1 272.1,551.0 C270.7,549.7 269.3,549.0 267.9,549.0 C266.5,549.0 265.0,552.1 263.6,552.1 C262.4,552.1 261.1,546.8 259.9,546.8 C258.7,546.8 257.4,554.8 256.2,555.3 C254.8,556.0 253.4,556.3 252.0,556.3 C250.6,556.3 249.1,551.0 247.7,551.0 C246.5,551.0 245.2,554.3 244.0,554.3 C242.6,554.3 241.2,552.3 239.8,551.0 C238.7,550.0 237.7,547.8 236.6,547.8 C234.8,547.8 233.1,552.1 231.3,552.1 C230.1,552.1 228.8,551.4 227.6,551.0 C226.4,550.6 225.1,549.9 223.9,549.9 C222.7,549.9 221.4,549.9 220.2,549.9 C219.5,549.9 218.9,550.7 218.2,551.0 C217.1,551.5 216.1,551.5 215.0,552.1 C214.0,552.6 212.9,554.3 211.9,554.3 C211.0,554.3 210.1,554.3 209.2,554.3 C208.5,554.3 207.8,556.3 207.1,556.3 C206.2,556.3 205.3,556.3 204.4,556.3 C203.5,556.3 202.7,549.9 201.8,549.9 C200.9,549.9 200.1,550.6 199.2,552.1 C197.9,554.2 196.7,562.8 195.4,565.9 C194.2,568.9 192.9,570.5 191.7,570.5 C190.3,570.5 188.9,569.0 187.5,569.0 C186.3,569.0 185.0,569.0 183.8,569.0 C182.9,569.0 182.1,563.5 181.2,560.6 C180.3,557.6 179.4,551.6 178.5,551.0 C177.4,550.3 176.4,549.9 175.3,549.9 C174.4,549.9 173.6,549.9 172.7,549.9 C171.8,549.9 171.0,547.8 170.1,547.8 C168.8,547.8 167.6,552.1 166.3,552.1 C165.1,552.1 163.8,549.9 162.6,549.9 C162.1,549.9 161.6,552.2 161.1,554.3 C160.2,557.8 159.4,570.1 158.5,570.1 C157.6,570.1 156.8,567.7 155.9,564.8 C155.0,561.8 154.1,553.6 153.2,552.1 C152.3,550.6 151.5,549.9 150.6,549.9 C149.2,549.9 147.7,551.4 146.3,554.3 C145.3,556.3 144.2,569.0 143.2,569.0 C142.5,569.0 141.7,564.3 141.0,562.6 C140.0,560.3 138.9,558.6 137.9,558.6 C136.8,558.6 135.8,558.6 134.7,558.6 C133.6,558.6 132.6,558.6 131.5,558.6 C130.4,558.6 129.4,555.7 128.3,554.3 C127.3,552.8 126.2,551.2 125.2,549.9 C124.3,548.8 123.4,546.8 122.5,546.8 C121.6,546.8 120.8,547.8 119.9,547.8 C119.0,547.8 118.1,545.7 117.2,545.7 C116.5,545.7 115.8,545.7 115.1,545.7 C114.0,545.7 113.0,556.5 111.9,560.6 C111.0,564.0 110.2,569.0 109.3,569.0 C108.2,569.0 107.2,565.5 106.1,558.6 C105.8,556.4 105.4,549.9 105.1,549.9 C104.2,549.9 103.4,549.9 102.5,549.9 C101.6,549.9 100.8,554.7 99.9,556.3 C98.8,558.2 97.8,559.5 96.7,559.5 C95.6,559.5 94.6,558.6 93.5,558.6 C92.6,558.6 91.8,559.5 90.9,559.5 C90.0,559.5 89.1,559.5 88.2,559.5 C87.3,559.5 86.5,557.1 85.6,556.3 C84.7,555.4 83.8,554.3 82.9,554.3 C81.8,554.3 80.8,554.7 79.7,555.5 C79.0,556.0 78.3,558.1 77.6,558.6 C76.7,559.2 75.9,559.5 75.0,559.5 C73.9,559.5 72.9,559.5 71.8,559.5 C70.7,559.5 69.7,553.2 68.6,553.2 C67.7,553.2 66.9,556.0 66.0,558.6 C65.1,561.3 64.2,569.0 63.3,569.0 C62.4,569.0 61.6,562.1 60.7,558.6 C59.8,555.0 58.9,547.8 58.0,547.8 C57.1,547.8 56.3,551.0 55.4,551.0 C54.5,551.0 53.7,543.3 52.8,542.6 C51.9,541.9 51.0,541.9 50.1,541.5 Z"/><path fill="#735f36" d="M50.1,541.5 C51.0,541.9 51.9,541.9 52.8,542.6 C53.7,543.3 54.5,551.0 55.4,551.0 C56.3,551.0 57.1,547.8 58.0,547.8 C58.9,547.8 59.8,555.0 60.7,558.6 C61.6,562.1 62.4,569.0 63.3,569.0 C64.2,569.0 65.1,561.3 66.0,558.6 C66.9,556.0 67.7,553.2 68.6,553.2 C69.7,553.2 70.7,559.5 71.8,559.5 C72.9,559.5 73.9,559.5 75.0,559.5 C75.9,559.5 76.7,559.2 77.6,558.6 C78.3,558.1 79.0,556.0 79.7,555.5 C80.8,554.7 81.8,554.3 82.9,554.3 C83.8,554.3 84.7,555.4 85.6,556.3 C86.5,557.1 87.3,559.5 88.2,559.5 C89.1,559.5 90.0,559.5 90.9,559.5 C91.8,559.5 92.6,558.6 93.5,558.6 C94.6,558.6 95.6,559.5 96.7,559.5 C97.8,559.5 98.8,558.2 99.9,556.3 C100.8,554.7 101.6,549.9 102.5,549.9 C103.4,549.9 104.2,549.9 105.1,549.9 C105.4,549.9 105.8,556.4 106.1,558.6 C107.2,565.5 108.2,569.0 109.3,569.0 C110.2,569.0 111.0,564.0 111.9,560.6 C113.0,556.5 114.0,545.7 115.1,545.7 C115.8,545.7 116.5,545.7 117.2,545.7 C118.1,545.7 119.0,547.8 119.9,547.8 C120.8,547.8 121.6,546.8 122.5,546.8 C123.4,546.8 124.3,548.8 125.2,549.9 C126.2,551.2 127.3,552.8 128.3,554.3 C129.4,555.7 130.4,558.6 131.5,558.6 C132.6,558.6 133.6,558.6 134.7,558.6 C135.8,558.6 136.8,558.6 137.9,558.6 C138.9,558.6 140.0,560.3 141.0,562.6 C141.7,564.3 142.5,569.0 143.2,569.0 C144.2,569.0 145.3,556.3 146.3,554.3 C147.7,551.4 149.2,549.9 150.6,549.9 C151.5,549.9 152.3,550.6 153.2,552.1 C154.1,553.6 155.0,561.8 155.9,564.8 C156.8,567.7 157.6,570.1 158.5,570.1 C159.4,570.1 160.2,557.8 161.1,554.3 C161.6,552.2 162.1,549.9 162.6,549.9 C163.8,549.9 165.1,552.1 166.3,552.1 C167.6,552.1 168.8,547.8 170.1,547.8 C171.0,547.8 171.8,549.9 172.7,549.9 C173.6,549.9 174.4,549.9 175.3,549.9 C176.4,549.9 177.4,550.3 178.5,551.0 C179.4,551.6 180.3,557.6 181.2,560.6 C182.1,563.5 182.9,569.0 183.8,569.0 C185.0,569.0 186.3,569.0 187.5,569.0 C188.9,569.0 190.3,570.5 191.7,570.5 C192.9,570.5 194.2,568.9 195.4,565.9 C196.7,562.8 197.9,554.2 199.2,552.1 C200.1,550.6 200.9,549.9 201.8,549.9 C202.7,549.9 203.5,556.3 204.4,556.3 C205.3,556.3 206.2,556.3 207.1,556.3 C207.8,556.3 208.5,554.3 209.2,554.3 C210.1,554.3 211.0,554.3 211.9,554.3 C212.9,554.3 214.0,552.6 215.0,552.1 C216.1,551.5 217.1,551.5 218.2,551.0 C218.9,550.7 219.5,549.9 220.2,549.9 C221.4,549.9 222.7,549.9 223.9,549.9 C225.1,549.9 226.4,550.6 227.6,551.0 C228.8,551.4 230.1,552.1 231.3,552.1 C233.1,552.1 234.8,547.8 236.6,547.8 C237.7,547.8 238.7,550.0 239.8,551.0 C241.2,552.3 242.6,554.3 244.0,554.3 C245.2,554.3 246.5,551.0 247.7,551.0 C249.1,551.0 250.6,556.3 252.0,556.3 C253.4,556.3 254.8,556.0 256.2,555.3 C257.4,554.8 258.7,546.8 259.9,546.8 C261.1,546.8 262.4,552.1 263.6,552.1 C265.0,552.1 266.5,549.0 267.9,549.0 C269.3,549.0 270.7,549.7 272.1,551.0 C273.2,552.1 274.4,553.8 275.5,556.7 C276.7,559.8 277.8,569.3 279.0,569.3 C280.4,569.3 281.7,557.9 283.1,554.0 C285.2,547.9 287.3,544.2 289.4,544.2 C290.8,544.2 292.2,547.6 293.6,548.4 C295.2,549.3 296.9,548.8 298.5,549.8 C299.4,550.3 300.3,559.5 301.2,562.3 C302.4,566.0 303.5,567.9 304.7,567.9 C306.3,567.9 308.0,552.2 309.6,551.2 C311.0,550.2 312.4,550.5 313.8,549.8 C315.2,549.1 316.6,547.0 318.0,547.0 C319.4,547.0 320.7,547.8 322.1,548.4 C323.0,548.8 324.0,549.8 324.9,549.8 C326.3,549.8 327.7,549.8 329.1,549.8 C329.9,549.8 330.7,550.2 331.5,551.2 C332.4,552.2 333.4,559.3 334.3,562.3 C335.4,565.9 336.6,569.9 337.7,569.9 C338.9,569.9 340.0,558.9 341.2,554.0 C341.9,551.0 342.6,545.6 343.3,545.6 C344.7,545.6 346.1,545.6 347.5,545.6 C349.4,545.6 351.2,548.4 353.1,548.4 C354.3,548.4 355.4,544.2 356.6,544.2 C358.2,544.2 359.8,548.9 361.4,554.0 C362.6,557.6 363.7,566.9 364.9,567.9 C366.5,569.2 368.2,569.9 369.8,569.9 C370.7,569.9 371.7,568.7 372.6,568.7 C373.5,568.7 374.5,568.7 375.4,568.7 C376.8,568.7 378.1,555.8 379.5,554.0 C380.9,552.1 382.3,551.2 383.7,551.2 C384.9,551.2 386.0,554.3 387.2,554.3 C388.2,554.3 389.3,552.6 390.3,552.1 C391.4,551.5 392.4,551.6 393.5,551.0 C394.9,550.3 396.4,547.8 397.8,547.8 C398.8,547.8 399.9,550.3 400.9,552.1 C402.0,553.9 403.0,558.6 404.1,558.6 C405.2,558.6 406.2,557.3 407.3,556.3 C408.9,554.7 410.4,549.9 412.0,549.9 C412.9,549.9 413.8,550.4 414.7,551.0 C415.8,551.7 416.8,553.0 417.9,554.3 C418.9,555.5 420.0,558.6 421.0,558.6 C422.2,558.6 423.5,555.4 424.7,554.3 C425.8,553.3 426.8,552.7 427.9,552.1 C428.8,551.6 429.7,551.0 430.6,551.0 C431.6,551.0 432.7,555.3 433.7,555.3 C434.9,555.3 436.2,552.1 437.4,552.1 C438.5,552.1 439.5,552.6 440.6,553.2 C441.6,553.7 442.5,555.3 443.5,555.3 C444.7,555.3 445.8,555.3 447.0,555.3 C448.1,555.3 449.3,552.1 450.4,551.2 C451.6,550.2 452.7,549.8 453.9,549.8 C455.1,549.8 456.2,551.2 457.4,551.2 C458.3,551.2 459.3,549.8 460.2,549.8 C461.6,549.8 463.0,550.2 464.4,551.2 C465.3,551.8 466.3,552.1 467.2,554.0 C467.9,555.3 468.5,569.3 469.2,569.3 C470.4,569.3 471.5,562.4 472.7,559.5 C474.3,555.5 476.0,549.8 477.6,549.8 C478.8,549.8 479.9,549.8 481.1,549.8 C482.3,549.8 483.4,549.2 484.6,548.4 C486.0,547.4 487.3,544.2 488.7,544.2 C490.1,544.2 491.5,545.1 492.9,547.0 C494.1,548.5 495.2,566.4 496.4,567.9 C497.1,568.8 497.8,569.3 498.5,569.3 C499.1,569.3 499.6,564.9 500.2,562.6 C501.1,559.0 502.0,551.0 502.9,551.0 C504.0,551.0 505.0,551.0 506.1,551.0 C507.3,551.0 508.6,550.2 509.8,549.9 C511.2,549.6 512.6,549.0 514.0,549.0 C515.1,549.0 516.1,554.3 517.2,554.3 C517.9,554.3 518.6,554.3 519.3,554.3 C520.4,554.3 521.4,547.8 522.5,547.8 C523.4,547.8 524.2,565.6 525.1,567.0 C526.0,568.3 526.8,568.5 527.7,569.0 C528.8,569.6 529.8,570.1 530.9,570.1 C532.3,570.1 533.8,556.3 535.2,552.1 C536.2,549.0 537.3,545.7 538.3,545.7 C539.4,545.7 540.4,545.7 541.5,545.7 C542.6,545.7 543.6,546.4 544.7,546.8 C545.4,547.1 546.1,547.1 546.8,547.8 C547.9,548.7 548.9,558.6 550.0,558.6 C551.0,558.6 552.1,557.0 553.1,556.3 C554.0,555.6 554.9,555.0 555.8,554.3 C556.6,553.6 557.5,552.9 558.3,552.1 C559.7,550.8 561.2,547.8 562.6,547.8 C563.7,547.8 564.7,549.0 565.8,549.0 C567.2,549.0 568.6,548.1 570.0,547.8 C571.4,547.4 572.8,546.8 574.2,546.8 C574.9,546.8 575.6,547.8 576.3,547.8 C577.4,547.8 578.4,546.8 579.5,546.8 C580.9,546.8 582.3,549.9 583.7,549.9 C585.5,549.9 587.2,547.8 589.0,547.8 C590.2,547.8 591.5,547.8 592.7,547.8 C593.4,547.8 594.2,562.4 594.9,564.8 C595.8,567.6 596.6,568.4 597.5,569.0 C598.6,569.7 599.6,570.1 600.7,570.1 C601.8,570.1 602.8,569.7 603.9,569.0 C604.9,568.3 606.0,564.1 607.0,560.6 C608.1,557.0 609.1,547.8 610.2,547.8 C611.3,547.8 612.5,549.8 613.6,549.8 C614.8,549.8 615.9,548.4 617.1,548.4 C618.5,548.4 619.8,555.3 621.2,555.3 C622.4,555.3 623.5,555.3 624.7,555.3 C626.1,555.3 627.5,558.1 628.9,558.1 C629.8,558.1 630.8,556.5 631.7,555.3 C632.4,554.5 633.1,552.6 633.8,552.6 C634.9,552.6 636.1,552.6 637.2,552.6 C638.6,552.6 640.0,548.4 641.4,548.4 C642.3,548.4 643.3,554.0 644.2,554.0 C645.6,554.0 647.0,552.1 648.4,551.2 C649.8,550.2 651.2,548.4 652.6,548.4 C654.0,548.4 655.3,548.4 656.7,548.4 C657.9,548.4 659.0,548.4 660.2,548.4 C661.6,548.4 663.1,546.8 664.5,546.8 C665.2,546.8 665.9,559.3 666.6,562.6 C667.5,566.9 668.4,569.0 669.3,569.0 C670.4,569.0 671.4,562.6 672.5,558.6 C673.4,555.3 674.2,547.8 675.1,547.8 C676.0,547.8 676.9,555.0 677.8,555.3 C679.4,556.0 680.9,555.7 682.5,556.3 C683.6,556.7 684.6,557.0 685.7,558.6 C686.6,559.9 687.4,569.0 688.3,569.0 C689.4,569.0 690.4,556.0 691.5,552.1 C692.6,548.2 693.6,545.7 694.7,545.7 C696.1,545.7 697.5,547.8 698.9,547.8 C700.3,547.8 701.8,545.7 703.2,545.7 C704.2,545.7 705.3,554.5 706.3,558.6 C707.2,562.2 708.1,568.5 709.0,569.0 C710.2,569.7 711.5,570.1 712.7,570.1 C713.9,570.1 715.2,569.3 716.4,569.0 C717.6,568.6 718.9,568.6 720.1,567.9 C721.0,567.4 721.8,561.0 722.7,558.6 C724.1,554.6 725.6,554.0 727.0,552.6 C728.4,551.1 729.7,550.4 731.1,549.8 C733.0,548.8 734.8,548.4 736.7,548.4 C738.1,548.4 739.5,548.4 740.9,548.4 C742.3,548.4 743.7,548.4 745.1,548.4 C746.7,548.4 748.3,550.0 749.9,551.2 C751.1,552.0 752.2,554.0 753.4,554.0 C754.8,554.0 756.2,545.6 757.6,545.6 C759.0,545.6 760.4,549.8 761.8,549.8 C763.7,549.8 765.5,548.4 767.4,548.4 C769.2,548.4 771.1,549.8 772.9,549.8 C774.1,549.8 775.2,546.9 776.4,545.6 C777.3,544.6 778.2,542.8 779.1,542.8 C779.9,542.8 780.8,562.6 781.6,565.1 C782.5,567.9 783.5,569.3 784.4,569.3 C785.5,569.3 786.7,559.7 787.8,556.7 C789.2,553.1 790.6,552.3 792.0,551.2 C793.2,550.2 794.3,549.8 795.5,549.8 C796.9,549.8 798.3,549.8 799.7,549.8 C800.9,549.8 802.0,548.4 803.2,548.4 C804.1,548.4 805.0,549.3 805.9,551.2 C806.8,553.1 807.8,567.9 808.7,567.9 C809.4,567.9 810.1,567.9 810.8,567.9 C811.7,567.9 812.7,569.9 813.6,569.9 C815.0,569.9 816.4,568.8 817.8,567.9 C819.0,567.1 820.1,566.2 821.3,565.1 C822.2,564.3 823.2,562.3 824.1,562.3 C825.0,562.3 825.9,567.2 826.8,567.9 C827.5,568.4 828.2,568.4 828.9,568.7 C830.3,569.2 831.7,570.1 833.1,570.1 C834.7,570.1 836.2,569.0 837.8,569.0 C839.4,569.0 841.0,570.1 842.6,570.1 C845.1,570.1 847.5,569.0 850.0,569.0 C851.6,569.0 853.2,569.0 854.8,569.0 C855.8,569.0 856.9,563.6 857.9,561.7 C858.6,560.4 859.3,559.6 860.0,558.6 C861.2,556.9 862.5,554.3 863.7,554.3 C865.1,554.3 866.6,554.9 868.0,556.3 C868.9,557.1 869.7,563.7 870.6,563.7 C871.8,563.7 873.1,558.6 874.3,558.6 C875.7,558.6 877.2,558.6 878.6,558.6 C879.5,558.6 880.3,558.3 881.2,558.1 C882.5,557.8 883.9,557.7 885.2,556.7 C886.4,555.9 887.5,553.6 888.7,551.2 C889.6,549.2 890.6,544.2 891.5,544.2 C892.7,544.2 893.8,545.1 895.0,545.6 C896.2,546.0 897.3,546.4 898.5,547.0 C899.9,547.7 901.2,549.8 902.6,549.8 C904.5,549.8 906.3,541.4 908.2,541.4 C909.6,541.4 911.0,547.0 912.4,547.0 C913.8,547.0 915.2,545.6 916.6,545.6 C918.0,545.6 919.3,549.4 920.7,551.2 C921.5,552.1 922.2,553.0 923.0,554.0 L923,571 L50,571 Z"/><g stroke="rgba(204,204,220,0.11)" stroke-width="1"><line x1="50" x2="923" y1="540.0" y2="540.0"/><line x1="50" x2="923" y1="509.0" y2="509.0"/><line x1="50" x2="923" y1="478.0" y2="478.0"/><line x1="50" x2="923" y1="447.0" y2="447.0"/><line x1="50" x2="923" y1="416.0" y2="416.0"/><line x1="160.0" x2="160.0" y1="416" y2="571"/><line x1="305.8" x2="305.8" y1="416" y2="571"/><line x1="451.6" x2="451.6" y1="416" y2="571"/><line x1="597.4" x2="597.4" y1="416" y2="571"/><line x1="743.2" x2="743.2" y1="416" y2="571"/><line x1="889.0" x2="889.0" y1="416" y2="571"/></g><path fill="none" stroke="#e06d5a" stroke-width="1" d="M50.1,468.7 C51.0,482.4 51.9,508.2 52.8,509.8 C53.7,511.3 54.5,510.7 55.4,512.1 C56.3,513.5 57.1,514.9 58.0,518.3 C58.9,521.8 59.8,531.4 60.7,533.0 C61.6,534.6 62.4,535.4 63.3,535.4 C64.2,535.4 65.1,535.4 66.0,535.4 C66.9,535.4 67.7,523.6 68.6,523.6 C69.7,523.6 70.7,534.3 71.8,537.2 C72.9,540.1 73.9,541.5 75.0,541.5 C75.9,541.5 76.7,538.7 77.6,533.0 C78.3,528.4 79.0,512.1 79.7,512.1 C80.8,512.1 81.8,531.0 82.9,531.0 C83.8,531.0 84.7,524.5 85.6,524.5 C86.5,524.5 87.3,534.1 88.2,534.1 C89.1,534.1 90.0,518.3 90.9,518.3 C91.8,518.3 92.6,518.3 93.5,518.3 C94.6,518.3 95.6,530.2 96.7,533.0 C97.8,535.8 98.8,537.2 99.9,537.2 C100.8,537.2 101.6,512.9 102.5,512.9 C103.4,512.9 104.2,512.9 105.1,512.9 C105.4,512.9 105.8,522.5 106.1,522.5 C107.2,522.5 108.2,520.3 109.3,520.3 C110.2,520.3 111.0,524.5 111.9,524.5 C113.0,524.5 114.0,497.0 115.1,488.5 C115.8,483.0 116.5,476.4 117.2,476.4 C118.1,476.4 119.0,495.6 119.9,497.1 C120.8,498.5 121.6,497.8 122.5,499.2 C123.4,500.7 124.3,511.4 125.2,515.2 C126.2,519.6 127.3,522.5 128.3,522.5 C129.4,522.5 130.4,522.5 131.5,522.5 C132.6,522.5 133.6,535.4 134.7,535.4 C135.8,535.4 136.8,532.2 137.9,532.2 C138.9,532.2 140.0,539.1 141.0,541.5 C141.7,543.3 142.5,545.7 143.2,545.7 C144.2,545.7 145.3,532.6 146.3,526.7 C147.7,518.4 149.2,504.4 150.6,504.4 C151.5,504.4 152.3,506.2 153.2,509.8 C154.1,513.5 155.0,557.2 155.9,558.6 C156.8,559.9 157.6,560.6 158.5,560.6 C159.4,560.6 160.2,511.0 161.1,509.8 C161.6,509.1 162.1,508.7 162.6,508.7 C163.8,508.7 165.1,508.7 166.3,508.7 C167.6,508.7 168.8,502.3 170.1,502.3 C171.0,502.3 171.8,518.3 172.7,518.3 C173.6,518.3 174.4,490.7 175.3,490.7 C176.4,490.7 177.4,509.1 178.5,518.3 C179.4,526.1 180.3,533.6 181.2,541.5 C182.1,549.2 182.9,564.8 183.8,564.8 C185.0,564.8 186.3,560.6 187.5,560.6 C188.9,560.6 190.3,569.0 191.7,569.0 C192.9,569.0 194.2,538.0 195.4,531.0 C196.7,523.9 197.9,527.4 199.2,520.3 C200.1,515.4 200.9,499.2 201.8,499.2 C202.7,499.2 203.5,512.7 204.4,518.3 C205.3,524.1 206.2,533.0 207.1,533.0 C207.8,533.0 208.5,487.5 209.2,487.5 C210.1,487.5 211.0,518.3 211.9,518.3 C212.9,518.3 214.0,518.3 215.0,518.3 C216.1,518.3 217.1,520.3 218.2,520.3 C218.9,520.3 219.5,517.3 220.2,515.2 C221.4,511.3 222.7,499.2 223.9,499.2 C225.1,499.2 226.4,517.0 227.6,518.3 C228.8,519.6 230.1,520.3 231.3,520.3 C233.1,520.3 234.8,500.2 236.6,500.2 C237.7,500.2 238.7,518.3 239.8,518.3 C241.2,518.3 242.6,517.3 244.0,516.1 C245.2,515.1 246.5,511.9 247.7,511.9 C249.1,511.9 250.6,528.8 252.0,528.8 C253.4,528.8 254.8,528.1 256.2,526.7 C257.4,525.4 258.7,518.6 259.9,516.1 C261.1,513.7 262.4,513.7 263.6,511.9 C265.0,509.9 266.5,504.4 267.9,504.4 C269.3,504.4 270.7,512.8 272.1,516.1 C273.2,518.9 274.4,518.5 275.5,523.3 C276.7,528.2 277.8,554.0 279.0,554.0 C280.4,554.0 281.7,518.8 283.1,512.1 C285.2,501.9 287.3,496.8 289.4,496.8 C290.8,496.8 292.2,506.5 293.6,506.5 C295.2,506.5 296.9,496.8 298.5,496.8 C299.4,496.8 300.3,515.4 301.2,524.5 C302.4,536.4 303.5,559.5 304.7,559.5 C306.3,559.5 308.0,453.5 309.6,453.5 C311.0,453.5 312.4,509.3 313.8,509.3 C315.2,509.3 316.6,503.7 318.0,503.7 C319.4,503.7 320.7,503.7 322.1,503.7 C323.0,503.7 324.0,496.8 324.9,496.8 C326.3,496.8 327.7,501.8 329.1,503.7 C329.9,504.8 330.7,504.7 331.5,506.5 C332.4,508.7 333.4,533.2 334.3,542.8 C335.4,554.4 336.6,566.5 337.7,566.5 C338.9,566.5 340.0,490.4 341.2,484.2 C341.9,480.5 342.6,478.6 343.3,478.6 C344.7,478.6 346.1,491.4 347.5,496.8 C349.4,504.0 351.2,514.9 353.1,514.9 C354.3,514.9 355.4,464.7 356.6,464.7 C358.2,464.7 359.8,483.5 361.4,503.7 C362.6,518.5 363.7,555.5 364.9,559.5 C366.5,565.1 368.2,567.9 369.8,567.9 C370.7,567.9 371.7,552.6 372.6,552.6 C373.5,552.6 374.5,562.3 375.4,562.3 C376.8,562.3 378.1,509.3 379.5,509.3 C380.9,509.3 382.3,510.2 383.7,512.1 C384.9,513.7 386.0,520.3 387.2,520.3 C388.2,520.3 389.3,519.6 390.3,518.3 C391.4,516.9 392.4,510.5 393.5,507.6 C394.9,503.7 396.4,499.2 397.8,499.2 C398.8,499.2 399.9,501.4 400.9,505.6 C402.0,510.0 403.0,526.9 404.1,531.0 C405.2,535.1 406.2,537.2 407.3,537.2 C408.9,537.2 410.4,497.1 412.0,497.1 C412.9,497.1 413.8,497.8 414.7,499.2 C415.8,500.9 416.8,525.2 417.9,531.0 C418.9,536.6 420.0,539.4 421.0,539.4 C422.2,539.4 423.5,523.5 424.7,520.3 C425.8,517.5 426.8,518.8 427.9,516.1 C428.8,513.9 429.7,506.5 430.6,506.5 C431.6,506.5 432.7,520.3 433.7,520.3 C434.9,520.3 436.2,506.5 437.4,506.5 C438.5,506.5 439.5,516.1 440.6,516.1 C441.6,516.1 442.5,513.5 443.5,513.5 C444.7,513.5 445.8,514.0 447.0,514.9 C448.1,515.8 449.3,520.5 450.4,520.5 C451.6,520.5 452.7,484.2 453.9,484.2 C455.1,484.2 456.2,500.9 457.4,500.9 C458.3,500.9 459.3,484.2 460.2,484.2 C461.6,484.2 463.0,509.3 464.4,509.3 C465.3,509.3 466.3,507.9 467.2,507.9 C467.9,507.9 468.5,552.6 469.2,552.6 C470.4,552.6 471.5,525.1 472.7,514.9 C474.3,500.6 476.0,485.6 477.6,485.6 C478.8,485.6 479.9,486.5 481.1,488.4 C482.3,490.2 483.4,513.5 484.6,513.5 C486.0,513.5 487.3,464.7 488.7,464.7 C490.1,464.7 491.5,491.6 492.9,509.3 C494.1,524.1 495.2,559.5 496.4,559.5 C497.1,559.5 497.8,558.6 498.5,556.7 C499.1,555.2 499.6,528.3 500.2,522.5 C501.1,513.3 502.0,508.7 502.9,508.7 C504.0,508.7 505.0,520.3 506.1,520.3 C507.3,520.3 508.6,506.9 509.8,505.6 C511.2,504.1 512.6,503.4 514.0,503.4 C515.1,503.4 516.1,503.8 517.2,504.5 C517.9,505.0 518.6,509.8 519.3,509.8 C520.4,509.8 521.4,509.8 522.5,509.8 C523.4,509.8 524.2,549.3 525.1,552.1 C526.0,554.9 526.8,554.5 527.7,556.3 C528.8,558.5 529.8,564.8 530.9,564.8 C532.3,564.8 533.8,522.7 535.2,511.9 C536.2,504.2 537.3,499.2 538.3,499.2 C539.4,499.2 540.4,511.9 541.5,511.9 C542.6,511.9 543.6,510.7 544.7,509.8 C545.4,509.2 546.1,507.6 546.8,507.6 C547.9,507.6 548.9,537.2 550.0,537.2 C551.0,537.2 552.1,535.8 553.1,533.0 C554.0,530.6 554.9,525.8 555.8,522.5 C556.6,519.4 557.5,514.0 558.3,514.0 C559.7,514.0 561.2,514.0 562.6,514.0 C563.7,514.0 564.7,508.7 565.8,508.7 C567.2,508.7 568.6,511.9 570.0,511.9 C571.4,511.9 572.8,507.3 574.2,505.6 C574.9,504.8 575.6,503.4 576.3,503.4 C577.4,503.4 578.4,512.9 579.5,512.9 C580.9,512.9 582.3,512.9 583.7,512.9 C585.5,512.9 587.2,497.1 589.0,497.1 C590.2,497.1 591.5,501.3 592.7,509.8 C593.4,514.8 594.2,534.4 594.9,541.5 C595.8,550.0 596.6,554.3 597.5,554.3 C598.6,554.3 599.6,546.8 600.7,546.8 C601.8,546.8 602.8,558.6 603.9,558.6 C604.9,558.6 606.0,538.6 607.0,531.0 C608.1,523.2 609.1,513.4 610.2,512.9 C611.3,512.4 612.5,512.6 613.6,512.1 C614.8,511.6 615.9,500.9 617.1,500.9 C618.5,500.9 619.8,508.3 621.2,513.5 C622.4,517.9 623.5,528.8 624.7,528.8 C626.1,528.8 627.5,523.3 628.9,523.3 C629.8,523.3 630.8,528.8 631.7,528.8 C632.4,528.8 633.1,468.9 633.8,468.9 C634.9,468.9 636.1,507.1 637.2,509.3 C638.6,512.1 640.0,513.5 641.4,513.5 C642.3,513.5 643.3,506.5 644.2,506.5 C645.6,506.5 647.0,517.7 648.4,517.7 C649.8,517.7 651.2,516.8 652.6,514.9 C654.0,513.1 655.3,500.9 656.7,500.9 C657.9,500.9 659.0,513.5 660.2,513.5 C661.6,513.5 663.1,504.5 664.5,504.5 C665.2,504.5 665.9,535.0 666.6,541.5 C667.5,550.0 668.4,554.3 669.3,554.3 C670.4,554.3 671.4,538.8 672.5,531.0 C673.4,524.7 674.2,511.9 675.1,511.9 C676.0,511.9 676.9,521.7 677.8,522.5 C679.4,523.8 680.9,523.2 682.5,524.5 C683.6,525.4 684.6,526.7 685.7,531.0 C686.6,534.5 687.4,556.3 688.3,556.3 C689.4,556.3 690.4,511.1 691.5,507.6 C692.6,504.1 693.6,502.3 694.7,502.3 C696.1,502.3 697.5,524.5 698.9,524.5 C700.3,524.5 701.8,503.4 703.2,503.4 C704.2,503.4 705.3,517.5 706.3,528.8 C707.2,538.7 708.1,562.8 709.0,564.8 C710.2,567.6 711.5,569.0 712.7,569.0 C713.9,569.0 715.2,560.6 716.4,560.6 C717.6,560.6 718.9,560.6 720.1,560.6 C721.0,560.6 721.8,542.8 722.7,537.2 C724.1,527.9 725.6,528.5 727.0,523.3 C728.4,518.2 729.7,507.2 731.1,506.5 C733.0,505.6 734.8,505.1 736.7,505.1 C738.1,505.1 739.5,512.1 740.9,512.1 C742.3,512.1 743.7,507.5 745.1,505.1 C746.7,502.4 748.3,496.8 749.9,496.8 C751.1,496.8 752.2,510.7 753.4,510.7 C754.8,510.7 756.2,503.7 757.6,503.7 C759.0,503.7 760.4,512.1 761.8,512.1 C763.7,512.1 765.5,512.1 767.4,512.1 C769.2,512.1 771.1,512.6 772.9,513.5 C774.1,514.1 775.2,523.3 776.4,523.3 C777.3,523.3 778.2,463.3 779.1,463.3 C779.9,463.3 780.8,525.6 781.6,537.2 C782.5,550.2 783.5,556.7 784.4,556.7 C785.5,556.7 786.7,533.5 787.8,523.3 C789.2,510.6 790.6,489.8 792.0,489.8 C793.2,489.8 794.3,512.1 795.5,512.1 C796.9,512.1 798.3,510.7 799.7,510.7 C800.9,510.7 802.0,510.7 803.2,510.7 C804.1,510.7 805.0,488.4 805.9,488.4 C806.8,488.4 807.8,556.7 808.7,556.7 C809.4,556.7 810.1,528.8 810.8,528.8 C811.7,528.8 812.7,565.1 813.6,565.1 C815.0,565.1 816.4,564.2 817.8,562.3 C819.0,560.8 820.1,500.9 821.3,500.9 C822.2,500.9 823.2,503.7 824.1,503.7 C825.0,503.7 825.9,503.7 826.8,503.7 C827.5,503.7 828.2,561.5 828.9,562.3 C830.3,564.0 831.7,564.8 833.1,564.8 C834.7,564.8 836.2,560.6 837.8,560.6 C839.4,560.6 841.0,564.8 842.6,564.8 C845.1,564.8 847.5,556.3 850.0,556.3 C851.6,556.3 853.2,564.8 854.8,564.8 C855.8,564.8 856.9,545.7 857.9,533.0 C858.6,524.5 859.3,504.5 860.0,504.5 C861.2,504.5 862.5,524.5 863.7,524.5 C865.1,524.5 866.6,524.5 868.0,524.5 C868.9,524.5 869.7,541.5 870.6,541.5 C871.8,541.5 873.1,539.4 874.3,539.4 C875.7,539.4 877.2,540.8 878.6,540.8 C879.5,540.8 880.3,520.3 881.2,520.3 C882.5,520.3 883.9,534.4 885.2,534.4 C886.4,534.4 887.5,529.8 888.7,520.5 C889.6,513.0 890.6,480.0 891.5,480.0 C892.7,480.0 893.8,491.9 895.0,495.4 C896.2,498.8 897.3,498.5 898.5,500.9 C899.9,503.8 901.2,512.1 902.6,512.1 C904.5,512.1 906.3,478.6 908.2,478.6 C909.6,478.6 911.0,493.5 912.4,498.1 C913.8,502.8 915.2,504.7 916.6,506.5 C918.0,508.3 919.3,507.4 920.7,509.3 C921.5,510.4 922.2,518.6 923.0,523.3"/><path fill="none" stroke="#a52a25" stroke-width="1" d="M50.1,484.2 C51.0,495.6 51.9,511.9 52.8,518.3 C53.7,524.5 54.5,525.5 55.4,527.6 C56.3,529.7 57.1,529.1 58.0,530.7 C58.9,532.3 59.8,537.2 60.7,537.2 C61.6,537.2 62.4,537.2 63.3,537.2 C64.2,537.2 65.1,541.5 66.0,541.5 C66.9,541.5 67.7,537.2 68.6,537.2 C69.7,537.2 70.7,545.0 71.8,545.7 C72.9,546.5 73.9,546.8 75.0,546.8 C75.9,546.8 76.7,545.8 77.6,543.7 C78.3,542.1 79.0,523.6 79.7,523.6 C80.8,523.6 81.8,541.5 82.9,541.5 C83.8,541.5 84.7,527.6 85.6,527.6 C86.5,527.6 87.3,545.7 88.2,545.7 C89.1,545.7 90.0,540.8 90.9,537.2 C91.8,533.7 92.6,524.5 93.5,524.5 C94.6,524.5 95.6,541.0 96.7,543.7 C97.8,546.4 98.8,547.8 99.9,547.8 C100.8,547.8 101.6,528.8 102.5,528.8 C103.4,528.8 104.2,529.6 105.1,531.0 C105.4,531.6 105.8,540.7 106.1,541.5 C107.2,544.3 108.2,545.7 109.3,545.7 C110.2,545.7 111.0,537.7 111.9,533.0 C113.0,527.3 114.0,522.7 115.1,514.0 C115.8,508.3 116.5,493.8 117.2,493.8 C118.1,493.8 119.0,523.6 119.9,523.6 C120.8,523.6 121.6,514.0 122.5,514.0 C123.4,514.0 124.3,531.7 125.2,533.0 C126.2,534.6 127.3,534.5 128.3,535.4 C129.4,536.3 130.4,537.1 131.5,538.5 C132.6,539.8 133.6,542.5 134.7,543.7 C135.8,544.9 136.8,545.1 137.9,545.7 C138.9,546.4 140.0,546.4 141.0,547.8 C141.7,548.7 142.5,552.1 143.2,552.1 C144.2,552.1 145.3,540.3 146.3,535.4 C147.7,528.5 149.2,518.3 150.6,518.3 C151.5,518.3 152.3,524.5 153.2,531.0 C154.1,537.8 155.0,555.8 155.9,558.6 C156.8,561.3 157.6,562.6 158.5,562.6 C159.4,562.6 160.2,526.8 161.1,524.5 C161.6,523.2 162.1,522.5 162.6,522.5 C163.8,522.5 165.1,522.5 166.3,522.5 C167.6,522.5 168.8,518.3 170.1,518.3 C171.0,518.3 171.8,528.8 172.7,528.8 C173.6,528.8 174.4,499.2 175.3,499.2 C176.4,499.2 177.4,517.5 178.5,526.7 C179.4,534.4 180.3,543.1 181.2,549.9 C182.1,556.5 182.9,567.0 183.8,567.0 C185.0,567.0 186.3,561.7 187.5,561.7 C188.9,561.7 190.3,569.5 191.7,569.5 C192.9,569.5 194.2,545.0 195.4,537.2 C196.7,529.2 197.9,526.3 199.2,522.5 C200.1,519.9 200.9,516.1 201.8,516.1 C202.7,516.1 203.5,529.2 204.4,533.0 C205.3,537.0 206.2,539.4 207.1,539.4 C207.8,539.4 208.5,488.5 209.2,488.5 C210.1,488.5 211.0,533.0 211.9,533.0 C212.9,533.0 214.0,531.0 215.0,531.0 C216.1,531.0 217.1,531.0 218.2,531.0 C218.9,531.0 219.5,530.1 220.2,528.8 C221.4,526.5 222.7,516.1 223.9,516.1 C225.1,516.1 226.4,529.7 227.6,531.0 C228.8,532.4 230.1,533.0 231.3,533.0 C233.1,533.0 234.8,518.3 236.6,518.3 C237.7,518.3 238.7,531.9 239.8,531.9 C241.2,531.9 242.6,531.6 244.0,531.0 C245.2,530.5 246.5,527.8 247.7,527.8 C249.1,527.8 250.6,541.5 252.0,541.5 C253.4,541.5 254.8,539.6 256.2,537.2 C257.4,535.1 258.7,531.0 259.9,528.8 C261.1,526.7 262.4,525.8 263.6,524.5 C265.0,523.0 266.5,520.3 267.9,520.3 C269.3,520.3 270.7,525.1 272.1,527.8 C273.2,529.9 274.4,530.0 275.5,534.4 C276.7,539.0 277.8,559.5 279.0,559.5 C280.4,559.5 281.7,529.7 283.1,526.0 C285.2,520.5 287.3,517.7 289.4,517.7 C290.8,517.7 292.2,523.3 293.6,523.3 C295.2,523.3 296.9,514.9 298.5,514.9 C299.4,514.9 300.3,537.9 301.2,545.6 C302.4,555.5 303.5,562.3 304.7,562.3 C306.3,562.3 308.0,468.9 309.6,468.9 C311.0,468.9 312.4,526.0 313.8,526.0 C315.2,526.0 316.6,520.5 318.0,520.5 C319.4,520.5 320.7,526.0 322.1,526.0 C323.0,526.0 324.0,512.1 324.9,512.1 C326.3,512.1 327.7,517.4 329.1,520.5 C329.9,522.2 330.7,522.3 331.5,526.0 C332.4,530.4 333.4,547.1 334.3,554.0 C335.4,562.2 336.6,567.9 337.7,567.9 C338.9,567.9 340.0,530.7 341.2,517.7 C341.9,509.8 342.6,498.1 343.3,498.1 C344.7,498.1 346.1,510.5 347.5,514.9 C349.4,520.7 351.2,526.0 353.1,526.0 C354.3,526.0 355.4,478.6 356.6,478.6 C358.2,478.6 359.8,509.8 361.4,526.0 C362.6,537.9 363.7,559.3 364.9,562.3 C366.5,566.6 368.2,568.7 369.8,568.7 C370.7,568.7 371.7,559.5 372.6,559.5 C373.5,559.5 374.5,564.8 375.4,564.8 C376.8,564.8 378.1,529.7 379.5,526.0 C380.9,522.3 382.3,520.5 383.7,520.5 C384.9,520.5 386.0,529.5 387.2,531.0 C388.2,532.4 389.3,533.0 390.3,533.0 C391.4,533.0 392.4,525.2 393.5,522.5 C394.9,518.9 396.4,516.1 397.8,516.1 C398.8,516.1 399.9,516.9 400.9,518.3 C402.0,519.8 403.0,534.3 404.1,537.2 C405.2,540.1 406.2,541.5 407.3,541.5 C408.9,541.5 410.4,509.8 412.0,509.8 C412.9,509.8 413.8,514.3 414.7,518.3 C415.8,523.0 416.8,532.6 417.9,537.2 C418.9,541.7 420.0,545.7 421.0,545.7 C422.2,545.7 423.5,538.7 424.7,535.4 C425.8,532.4 426.8,528.9 427.9,526.7 C428.8,524.8 429.7,522.5 430.6,522.5 C431.6,522.5 432.7,531.0 433.7,531.0 C434.9,531.0 436.2,522.5 437.4,522.5 C438.5,522.5 439.5,528.8 440.6,528.8 C441.6,528.8 442.5,526.0 443.5,526.0 C444.7,526.0 445.8,534.4 447.0,534.4 C448.1,534.4 449.3,532.6 450.4,528.8 C451.6,525.0 452.7,496.8 453.9,496.8 C455.1,496.8 456.2,517.7 457.4,517.7 C458.3,517.7 459.3,489.8 460.2,489.8 C461.6,489.8 463.0,520.5 464.4,523.3 C465.3,525.1 466.3,524.2 467.2,526.0 C467.9,527.4 468.5,556.7 469.2,556.7 C470.4,556.7 471.5,537.0 472.7,528.8 C474.3,517.4 476.0,500.9 477.6,500.9 C478.8,500.9 479.9,520.9 481.1,521.9 C482.3,522.8 483.4,523.3 484.6,523.3 C486.0,523.3 487.3,489.8 488.7,489.8 C490.1,489.8 491.5,512.6 492.9,526.0 C494.1,537.2 495.2,562.1 496.4,562.3 C497.1,562.4 497.8,562.5 498.5,562.5 C499.1,562.5 499.6,542.5 500.2,537.2 C501.1,528.7 502.0,524.5 502.9,524.5 C504.0,524.5 505.0,531.0 506.1,531.0 C507.3,531.0 508.6,522.1 509.8,520.3 C511.2,518.2 512.6,517.2 514.0,517.2 C515.1,517.2 516.1,519.2 517.2,522.5 C517.9,524.7 518.6,531.0 519.3,531.0 C520.4,531.0 521.4,528.8 522.5,528.8 C523.4,528.8 524.2,551.4 525.1,554.3 C526.0,557.2 526.8,556.8 527.7,558.6 C528.8,560.8 529.8,567.0 530.9,567.0 C532.3,567.0 533.8,540.0 535.2,531.0 C536.2,524.5 537.3,516.1 538.3,516.1 C539.4,516.1 540.4,526.7 541.5,526.7 C542.6,526.7 543.6,526.7 544.7,526.7 C545.4,526.7 546.1,523.6 546.8,523.6 C547.9,523.6 548.9,537.9 550.0,539.4 C551.0,540.8 552.1,541.5 553.1,541.5 C554.0,541.5 554.9,539.5 555.8,537.2 C556.6,535.1 557.5,528.8 558.3,528.8 C559.7,528.8 561.2,528.8 562.6,528.8 C563.7,528.8 564.7,524.5 565.8,524.5 C567.2,524.5 568.6,526.7 570.0,526.7 C571.4,526.7 572.8,525.3 574.2,522.5 C574.9,521.1 575.6,516.1 576.3,516.1 C577.4,516.1 578.4,527.7 579.5,528.8 C580.9,530.3 582.3,531.0 583.7,531.0 C585.5,531.0 587.2,511.9 589.0,511.9 C590.2,511.9 591.5,516.1 592.7,524.5 C593.4,529.5 594.2,549.7 594.9,552.1 C595.8,554.9 596.6,556.3 597.5,556.3 C598.6,556.3 599.6,547.8 600.7,547.8 C601.8,547.8 602.8,560.6 603.9,560.6 C604.9,560.6 606.0,535.7 607.0,533.0 C608.1,530.2 609.1,530.0 610.2,528.8 C611.3,527.6 612.5,527.9 613.6,526.0 C614.8,524.1 615.9,514.9 617.1,514.9 C618.5,514.9 619.8,524.9 621.2,528.8 C622.4,532.2 623.5,537.2 624.7,537.2 C626.1,537.2 627.5,537.2 628.9,537.2 C629.8,537.2 630.8,540.0 631.7,540.0 C632.4,540.0 633.1,475.8 633.8,475.8 C634.9,475.8 636.1,521.8 637.2,523.3 C638.6,525.1 640.0,526.0 641.4,526.0 C642.3,526.0 643.3,517.7 644.2,517.7 C645.6,517.7 647.0,531.6 648.4,531.6 C649.8,531.6 651.2,530.7 652.6,528.8 C654.0,527.0 655.3,517.7 656.7,517.7 C657.9,517.7 659.0,526.0 660.2,526.0 C661.6,526.0 663.1,520.3 664.5,520.3 C665.2,520.3 665.9,543.3 666.6,547.8 C667.5,553.4 668.4,556.3 669.3,556.3 C670.4,556.3 671.4,549.5 672.5,541.5 C673.4,535.1 674.2,516.1 675.1,516.1 C676.0,516.1 676.9,525.6 677.8,528.8 C679.4,534.4 680.9,534.8 682.5,537.2 C683.6,538.8 684.6,538.7 685.7,541.5 C686.6,543.9 687.4,561.7 688.3,561.7 C689.4,561.7 690.4,519.0 691.5,518.3 C692.6,517.6 693.6,517.2 694.7,517.2 C696.1,517.2 697.5,531.0 698.9,531.0 C700.3,531.0 701.8,518.3 703.2,518.3 C704.2,518.3 705.3,528.2 706.3,537.2 C707.2,545.1 708.1,565.9 709.0,567.0 C710.2,568.4 711.5,569.1 712.7,569.1 C713.9,569.1 715.2,563.2 716.4,562.6 C717.6,562.0 718.9,562.3 720.1,561.7 C721.0,561.3 721.8,545.5 722.7,541.5 C724.1,534.9 725.6,535.2 727.0,531.6 C728.4,528.2 729.7,520.5 731.1,520.5 C733.0,520.5 734.8,524.5 736.7,526.0 C738.1,527.2 739.5,528.8 740.9,528.8 C742.3,528.8 743.7,526.9 745.1,523.3 C746.7,519.1 748.3,503.7 749.9,503.7 C751.1,503.7 752.2,526.0 753.4,526.0 C754.8,526.0 756.2,520.5 757.6,520.5 C759.0,520.5 760.4,524.7 761.8,526.0 C763.7,527.9 765.5,527.9 767.4,528.8 C769.2,529.8 771.1,531.6 772.9,531.6 C774.1,531.6 775.2,530.7 776.4,528.8 C777.3,527.4 778.2,482.8 779.1,482.8 C779.9,482.8 780.8,537.3 781.6,545.6 C782.5,554.9 783.5,559.5 784.4,559.5 C785.5,559.5 786.7,542.4 787.8,534.4 C789.2,524.5 790.6,506.5 792.0,506.5 C793.2,506.5 794.3,531.6 795.5,531.6 C796.9,531.6 798.3,527.5 799.7,526.0 C800.9,524.8 802.0,525.1 803.2,523.3 C804.1,521.8 805.0,489.8 805.9,489.8 C806.8,489.8 807.8,559.5 808.7,559.5 C809.4,559.5 810.1,531.6 810.8,531.6 C811.7,531.6 812.7,566.5 813.6,566.5 C815.0,566.5 816.4,565.7 817.8,564.0 C819.0,562.6 820.1,502.3 821.3,502.3 C822.2,502.3 823.2,505.1 824.1,505.1 C825.0,505.1 825.9,505.1 826.8,505.1 C827.5,505.1 828.2,562.6 828.9,563.7 C830.3,565.9 831.7,567.0 833.1,567.0 C834.7,567.0 836.2,562.6 837.8,562.6 C839.4,562.6 841.0,567.1 842.6,567.1 C845.1,567.1 847.5,558.6 850.0,558.6 C851.6,558.6 853.2,565.9 854.8,565.9 C855.8,565.9 856.9,549.1 857.9,537.2 C858.6,529.1 859.3,509.8 860.0,509.8 C861.2,509.8 862.5,527.5 863.7,531.0 C865.1,535.1 866.6,534.2 868.0,537.2 C868.9,539.0 869.7,542.8 870.6,543.7 C871.8,545.1 873.1,545.7 874.3,545.7 C875.7,545.7 877.2,544.3 878.6,541.5 C879.5,539.9 880.3,523.3 881.2,523.3 C882.5,523.3 883.9,540.0 885.2,540.0 C886.4,540.0 887.5,537.2 888.7,531.6 C889.6,527.2 890.6,498.1 891.5,498.1 C892.7,498.1 893.8,511.2 895.0,514.9 C896.2,518.6 897.3,518.7 898.5,520.5 C899.9,522.5 901.2,526.0 902.6,526.0 C904.5,526.0 906.3,495.4 908.2,495.4 C909.6,495.4 911.0,509.3 912.4,513.5 C913.8,517.7 915.2,518.8 916.6,520.5 C918.0,522.1 919.3,521.4 920.7,523.3 C921.5,524.3 922.2,530.7 923.0,534.4"/><path fill="none" stroke="#2a4f82" stroke-width="1" d="M50.1,520.3 C51.0,524.6 51.9,533.0 52.8,533.0 C53.7,533.0 54.5,533.0 55.4,533.0 C56.3,533.0 57.1,536.7 58.0,538.5 C58.9,540.3 59.8,540.2 60.7,543.7 C61.6,547.1 62.4,558.6 63.3,558.6 C64.2,558.6 65.1,549.1 66.0,547.8 C66.9,546.4 67.7,545.7 68.6,545.7 C69.7,545.7 70.7,551.0 71.8,551.0 C72.9,551.0 73.9,551.0 75.0,551.0 C75.9,551.0 76.7,548.7 77.6,547.8 C78.3,547.0 79.0,545.7 79.7,545.7 C80.8,545.7 81.8,545.7 82.9,545.7 C83.8,545.7 84.7,543.7 85.6,543.7 C86.5,543.7 87.3,549.9 88.2,549.9 C89.1,549.9 90.0,549.9 90.9,549.9 C91.8,549.9 92.6,547.8 93.5,547.8 C94.6,547.8 95.6,551.0 96.7,551.0 C97.8,551.0 98.8,550.6 99.9,549.9 C100.8,549.3 101.6,533.0 102.5,533.0 C103.4,533.0 104.2,533.4 105.1,534.1 C105.4,534.4 105.8,542.4 106.1,545.7 C107.2,556.5 108.2,562.6 109.3,562.6 C110.2,562.6 111.0,550.6 111.9,545.7 C113.0,539.7 114.0,532.1 115.1,531.0 C115.8,530.3 116.5,530.3 117.2,529.9 C118.1,529.5 119.0,528.8 119.9,528.8 C120.8,528.8 121.6,528.8 122.5,528.8 C123.4,528.8 124.3,535.1 125.2,537.2 C126.2,539.6 127.3,540.2 128.3,541.5 C129.4,543.0 130.4,544.3 131.5,545.7 C132.6,547.1 133.6,549.2 134.7,549.9 C135.8,550.6 136.8,550.3 137.9,551.0 C138.9,551.7 140.0,555.8 141.0,558.6 C141.7,560.6 142.5,564.8 143.2,564.8 C144.2,564.8 145.3,544.1 146.3,541.5 C147.7,538.0 149.2,536.3 150.6,536.3 C151.5,536.3 152.3,539.8 153.2,543.7 C154.1,547.8 155.0,556.6 155.9,560.6 C156.8,564.5 157.6,567.9 158.5,567.9 C159.4,567.9 160.2,553.7 161.1,543.7 C161.6,538.0 162.1,524.5 162.6,524.5 C163.8,524.5 165.1,533.0 166.3,533.0 C167.6,533.0 168.8,533.0 170.1,533.0 C171.0,533.0 171.8,534.1 172.7,534.1 C173.6,534.1 174.4,533.0 175.3,533.0 C176.4,533.0 177.4,539.8 178.5,543.7 C179.4,547.0 180.3,550.1 181.2,554.3 C182.1,558.2 182.9,567.9 183.8,567.9 C185.0,567.9 186.3,567.9 187.5,567.9 C188.9,567.9 190.3,570.1 191.7,570.1 C192.9,570.1 194.2,557.5 195.4,552.1 C196.7,546.5 197.9,539.0 199.2,537.2 C200.1,536.0 200.9,535.4 201.8,535.4 C202.7,535.4 203.5,543.7 204.4,543.7 C205.3,543.7 206.2,543.7 207.1,543.7 C207.8,543.7 208.5,543.7 209.2,543.7 C210.1,543.7 211.0,542.5 211.9,541.5 C212.9,540.4 214.0,538.4 215.0,537.2 C216.1,535.9 217.1,535.2 218.2,534.1 C218.9,533.4 219.5,532.3 220.2,531.9 C221.4,531.3 222.7,531.0 223.9,531.0 C225.1,531.0 226.4,533.4 227.6,534.1 C228.8,534.8 230.1,535.4 231.3,535.4 C233.1,535.4 234.8,533.0 236.6,533.0 C237.7,533.0 238.7,533.8 239.8,534.1 C241.2,534.6 242.6,535.4 244.0,535.4 C245.2,535.4 246.5,534.1 247.7,534.1 C249.1,534.1 250.6,545.7 252.0,545.7 C253.4,545.7 254.8,545.1 256.2,543.7 C257.4,542.5 258.7,536.9 259.9,535.4 C261.1,533.8 262.4,533.6 263.6,533.0 C265.0,532.4 266.5,531.9 267.9,531.9 C269.3,531.9 270.7,532.3 272.1,533.0 C273.2,533.6 274.4,537.6 275.5,542.8 C276.7,548.2 277.8,565.1 279.0,565.1 C280.4,565.1 281.7,547.6 283.1,542.8 C285.2,535.4 287.3,531.6 289.4,531.6 C290.8,531.6 292.2,534.4 293.6,534.4 C295.2,534.4 296.9,531.6 298.5,531.6 C299.4,531.6 300.3,548.4 301.2,554.0 C302.4,561.2 303.5,566.4 304.7,566.4 C306.3,566.4 308.0,539.4 309.6,537.2 C311.0,535.4 312.4,534.4 313.8,534.4 C315.2,534.4 316.6,534.4 318.0,534.4 C319.4,534.4 320.7,533.0 322.1,533.0 C323.0,533.0 324.0,534.0 324.9,534.4 C326.3,535.0 327.7,535.1 329.1,535.8 C329.9,536.2 330.7,536.3 331.5,537.2 C332.4,538.3 333.4,551.6 334.3,556.7 C335.4,562.9 336.6,569.1 337.7,569.1 C338.9,569.1 340.0,551.4 341.2,542.8 C341.9,537.6 342.6,527.4 343.3,527.4 C344.7,527.4 346.1,527.4 347.5,527.4 C349.4,527.4 351.2,531.6 353.1,531.6 C354.3,531.6 355.4,526.0 356.6,526.0 C358.2,526.0 359.8,537.3 361.4,545.6 C362.6,551.6 363.7,564.9 364.9,566.4 C366.5,568.4 368.2,569.5 369.8,569.5 C370.7,569.5 371.7,566.4 372.6,566.4 C373.5,566.4 374.5,567.1 375.4,567.1 C376.8,567.1 378.1,546.4 379.5,542.8 C380.9,539.1 382.3,537.2 383.7,537.2 C384.9,537.2 386.0,538.6 387.2,539.4 C388.2,540.1 389.3,541.5 390.3,541.5 C391.4,541.5 392.4,538.7 393.5,537.2 C394.9,535.2 396.4,531.0 397.8,531.0 C398.8,531.0 399.9,531.7 400.9,533.0 C402.0,534.4 403.0,545.7 404.1,545.7 C405.2,545.7 406.2,545.7 407.3,545.7 C408.9,545.7 410.4,533.0 412.0,533.0 C412.9,533.0 413.8,534.1 414.7,535.4 C415.8,536.8 416.8,539.4 417.9,541.5 C418.9,543.6 420.0,547.8 421.0,547.8 C422.2,547.8 423.5,543.4 424.7,541.5 C425.8,539.9 426.8,538.8 427.9,537.2 C428.8,535.9 429.7,533.0 430.6,533.0 C431.6,533.0 432.7,537.2 433.7,537.2 C434.9,537.2 436.2,537.2 437.4,537.2 C438.5,537.2 439.5,537.2 440.6,537.2 C441.6,537.2 442.5,540.0 443.5,540.0 C444.7,540.0 445.8,540.0 447.0,540.0 C448.1,540.0 449.3,537.2 450.4,537.2 C451.6,537.2 452.7,537.2 453.9,537.2 C455.1,537.2 456.2,535.5 457.4,534.4 C458.3,533.6 459.3,531.6 460.2,531.6 C461.6,531.6 463.0,531.6 464.4,531.6 C465.3,531.6 466.3,533.5 467.2,537.2 C467.9,539.9 468.5,566.4 469.2,566.4 C470.4,566.4 471.5,549.6 472.7,545.6 C474.3,540.0 476.0,539.5 477.6,537.2 C478.8,535.6 479.9,534.0 481.1,533.0 C482.3,532.1 483.4,532.2 484.6,531.6 C486.0,530.9 487.3,528.8 488.7,528.8 C490.1,528.8 491.5,528.8 492.9,528.8 C494.1,528.8 495.2,565.5 496.4,566.4 C497.1,566.9 497.8,567.1 498.5,567.1 C499.1,567.1 499.6,556.5 500.2,552.1 C501.1,545.0 502.0,535.4 502.9,535.4 C504.0,535.4 505.0,535.4 506.1,535.4 C507.3,535.4 508.6,533.7 509.8,533.0 C511.2,532.2 512.6,531.0 514.0,531.0 C515.1,531.0 516.1,531.7 517.2,533.0 C517.9,533.9 518.6,537.2 519.3,537.2 C520.4,537.2 521.4,533.0 522.5,533.0 C523.4,533.0 524.2,553.4 525.1,558.6 C526.0,563.8 526.8,565.1 527.7,566.4 C528.8,567.9 529.8,568.7 530.9,568.7 C532.3,568.7 533.8,548.2 535.2,541.5 C536.2,536.8 537.3,531.0 538.3,531.0 C539.4,531.0 540.4,531.0 541.5,531.0 C542.6,531.0 543.6,531.0 544.7,531.0 C545.4,531.0 546.1,531.0 546.8,531.0 C547.9,531.0 548.9,544.3 550.0,545.7 C551.0,547.1 552.1,547.8 553.1,547.8 C554.0,547.8 554.9,545.6 555.8,543.7 C556.6,542.0 557.5,538.8 558.3,537.2 C559.7,534.4 561.2,534.1 562.6,533.0 C563.7,532.2 564.7,531.6 565.8,531.0 C567.2,530.2 568.6,529.6 570.0,528.8 C571.4,528.1 572.8,526.7 574.2,526.7 C574.9,526.7 575.6,526.7 576.3,526.7 C577.4,526.7 578.4,530.0 579.5,531.0 C580.9,532.4 582.3,533.0 583.7,533.0 C585.5,533.0 587.2,528.8 589.0,528.8 C590.2,528.8 591.5,529.6 592.7,531.0 C593.4,531.9 594.2,553.8 594.9,558.6 C595.8,564.3 596.6,566.7 597.5,567.1 C598.6,567.6 599.6,567.9 600.7,567.9 C601.8,567.9 602.8,567.6 603.9,567.1 C604.9,566.6 606.0,553.4 607.0,547.8 C608.1,541.9 609.1,533.0 610.2,533.0 C611.3,533.0 612.5,534.4 613.6,534.4 C614.8,534.4 615.9,531.6 617.1,531.6 C618.5,531.6 619.8,535.2 621.2,537.2 C622.4,538.9 623.5,542.8 624.7,542.8 C626.1,542.8 627.5,542.8 628.9,542.8 C629.8,542.8 630.8,545.6 631.7,545.6 C632.4,545.6 633.1,540.3 633.8,538.6 C634.9,535.8 636.1,534.4 637.2,534.4 C638.6,534.4 640.0,534.4 641.4,534.4 C642.3,534.4 643.3,537.2 644.2,537.2 C645.6,537.2 647.0,537.2 648.4,537.2 C649.8,537.2 651.2,537.2 652.6,537.2 C654.0,537.2 655.3,531.6 656.7,531.6 C657.9,531.6 659.0,533.0 660.2,533.0 C661.6,533.0 663.1,531.0 664.5,531.0 C665.2,531.0 665.9,549.9 666.6,554.3 C667.5,559.8 668.4,562.6 669.3,562.6 C670.4,562.6 671.4,551.1 672.5,545.7 C673.4,541.3 674.2,533.0 675.1,533.0 C676.0,533.0 676.9,541.5 677.8,541.5 C679.4,541.5 680.9,541.5 682.5,541.5 C683.6,541.5 684.6,547.6 685.7,552.1 C686.6,555.7 687.4,564.8 688.3,564.8 C689.4,564.8 690.4,544.6 691.5,537.2 C692.6,529.8 693.6,520.3 694.7,520.3 C696.1,520.3 697.5,533.0 698.9,533.0 C700.3,533.0 701.8,520.3 703.2,520.3 C704.2,520.3 705.3,541.6 706.3,549.9 C707.2,557.1 708.1,567.1 709.0,567.9 C710.2,568.9 711.5,569.5 712.7,569.5 C713.9,569.5 715.2,567.9 716.4,567.1 C717.6,566.4 718.9,566.4 720.1,564.8 C721.0,563.7 721.8,555.6 722.7,552.1 C724.1,546.2 725.6,543.5 727.0,540.0 C728.4,536.7 729.7,531.6 731.1,531.6 C733.0,531.6 734.8,531.6 736.7,531.6 C738.1,531.6 739.5,531.6 740.9,531.6 C742.3,531.6 743.7,530.2 745.1,530.2 C746.7,530.2 748.3,530.7 749.9,531.6 C751.1,532.3 752.2,534.4 753.4,534.4 C754.8,534.4 756.2,531.6 757.6,531.6 C759.0,531.6 760.4,532.6 761.8,533.0 C763.7,533.6 765.5,534.4 767.4,534.4 C769.2,534.4 771.1,534.4 772.9,534.4 C774.1,534.4 775.2,534.4 776.4,534.4 C777.3,534.4 778.2,520.5 779.1,520.5 C779.9,520.5 780.8,550.1 781.6,556.7 C782.5,564.2 783.5,567.9 784.4,567.9 C785.5,567.9 786.7,551.0 787.8,545.6 C789.2,538.8 790.6,535.5 792.0,534.4 C793.2,533.5 794.3,533.0 795.5,533.0 C796.9,533.0 798.3,533.0 799.7,533.0 C800.9,533.0 802.0,533.0 803.2,533.0 C804.1,533.0 805.0,534.4 805.9,537.2 C806.8,540.1 807.8,566.4 808.7,566.4 C809.4,566.4 810.1,564.8 810.8,564.8 C811.7,564.8 812.7,568.7 813.6,568.7 C815.0,568.7 816.4,567.9 817.8,566.4 C819.0,565.1 820.1,561.2 821.3,559.5 C822.2,558.2 823.2,556.7 824.1,556.7 C825.0,556.7 825.9,565.7 826.8,566.4 C827.5,566.9 828.2,566.9 828.9,567.1 C830.3,567.6 831.7,568.7 833.1,568.7 C834.7,568.7 836.2,567.9 837.8,567.9 C839.4,567.9 841.0,568.7 842.6,568.7 C845.1,568.7 847.5,567.9 850.0,567.9 C851.6,567.9 853.2,567.9 854.8,567.9 C855.8,567.9 856.9,563.6 857.9,558.6 C858.6,555.2 859.3,546.5 860.0,545.7 C861.2,544.4 862.5,543.7 863.7,543.7 C865.1,543.7 866.6,545.1 868.0,547.8 C868.9,549.4 869.7,556.3 870.6,556.3 C871.8,556.3 873.1,549.9 874.3,549.9 C875.7,549.9 877.2,549.9 878.6,549.9 C879.5,549.9 880.3,548.8 881.2,548.4 C882.5,547.7 883.9,547.9 885.2,547.0 C886.4,546.2 887.5,545.6 888.7,542.8 C889.6,540.6 890.6,528.8 891.5,528.8 C892.7,528.8 893.8,528.8 895.0,528.8 C896.2,528.8 897.3,531.6 898.5,531.6 C899.9,531.6 901.2,531.6 902.6,531.6 C904.5,531.6 906.3,523.3 908.2,523.3 C909.6,523.3 911.0,526.3 912.4,527.4 C913.8,528.6 915.2,529.5 916.6,530.2 C918.0,530.9 919.3,530.7 920.7,531.6 C921.5,532.2 922.2,533.5 923.0,534.4"/><path fill="none" stroke="#eedc8a" stroke-width="1" d="M50.1,541.5 C51.0,541.9 51.9,541.9 52.8,542.6 C53.7,543.3 54.5,551.0 55.4,551.0 C56.3,551.0 57.1,547.8 58.0,547.8 C58.9,547.8 59.8,555.0 60.7,558.6 C61.6,562.1 62.4,569.0 63.3,569.0 C64.2,569.0 65.1,561.3 66.0,558.6 C66.9,556.0 67.7,553.2 68.6,553.2 C69.7,553.2 70.7,559.5 71.8,559.5 C72.9,559.5 73.9,559.5 75.0,559.5 C75.9,559.5 76.7,559.2 77.6,558.6 C78.3,558.1 79.0,556.0 79.7,555.5 C80.8,554.7 81.8,554.3 82.9,554.3 C83.8,554.3 84.7,555.4 85.6,556.3 C86.5,557.1 87.3,559.5 88.2,559.5 C89.1,559.5 90.0,559.5 90.9,559.5 C91.8,559.5 92.6,558.6 93.5,558.6 C94.6,558.6 95.6,559.5 96.7,559.5 C97.8,559.5 98.8,558.2 99.9,556.3 C100.8,554.7 101.6,549.9 102.5,549.9 C103.4,549.9 104.2,549.9 105.1,549.9 C105.4,549.9 105.8,556.4 106.1,558.6 C107.2,565.5 108.2,569.0 109.3,569.0 C110.2,569.0 111.0,564.0 111.9,560.6 C113.0,556.5 114.0,545.7 115.1,545.7 C115.8,545.7 116.5,545.7 117.2,545.7 C118.1,545.7 119.0,547.8 119.9,547.8 C120.8,547.8 121.6,546.8 122.5,546.8 C123.4,546.8 124.3,548.8 125.2,549.9 C126.2,551.2 127.3,552.8 128.3,554.3 C129.4,555.7 130.4,558.6 131.5,558.6 C132.6,558.6 133.6,558.6 134.7,558.6 C135.8,558.6 136.8,558.6 137.9,558.6 C138.9,558.6 140.0,560.3 141.0,562.6 C141.7,564.3 142.5,569.0 143.2,569.0 C144.2,569.0 145.3,556.3 146.3,554.3 C147.7,551.4 149.2,549.9 150.6,549.9 C151.5,549.9 152.3,550.6 153.2,552.1 C154.1,553.6 155.0,561.8 155.9,564.8 C156.8,567.7 157.6,570.1 158.5,570.1 C159.4,570.1 160.2,557.8 161.1,554.3 C161.6,552.2 162.1,549.9 162.6,549.9 C163.8,549.9 165.1,552.1 166.3,552.1 C167.6,552.1 168.8,547.8 170.1,547.8 C171.0,547.8 171.8,549.9 172.7,549.9 C173.6,549.9 174.4,549.9 175.3,549.9 C176.4,549.9 177.4,550.3 178.5,551.0 C179.4,551.6 180.3,557.6 181.2,560.6 C182.1,563.5 182.9,569.0 183.8,569.0 C185.0,569.0 186.3,569.0 187.5,569.0 C188.9,569.0 190.3,570.5 191.7,570.5 C192.9,570.5 194.2,568.9 195.4,565.9 C196.7,562.8 197.9,554.2 199.2,552.1 C200.1,550.6 200.9,549.9 201.8,549.9 C202.7,549.9 203.5,556.3 204.4,556.3 C205.3,556.3 206.2,556.3 207.1,556.3 C207.8,556.3 208.5,554.3 209.2,554.3 C210.1,554.3 211.0,554.3 211.9,554.3 C212.9,554.3 214.0,552.6 215.0,552.1 C216.1,551.5 217.1,551.5 218.2,551.0 C218.9,550.7 219.5,549.9 220.2,549.9 C221.4,549.9 222.7,549.9 223.9,549.9 C225.1,549.9 226.4,550.6 227.6,551.0 C228.8,551.4 230.1,552.1 231.3,552.1 C233.1,552.1 234.8,547.8 236.6,547.8 C237.7,547.8 238.7,550.0 239.8,551.0 C241.2,552.3 242.6,554.3 244.0,554.3 C245.2,554.3 246.5,551.0 247.7,551.0 C249.1,551.0 250.6,556.3 252.0,556.3 C253.4,556.3 254.8,556.0 256.2,555.3 C257.4,554.8 258.7,546.8 259.9,546.8 C261.1,546.8 262.4,552.1 263.6,552.1 C265.0,552.1 266.5,549.0 267.9,549.0 C269.3,549.0 270.7,549.7 272.1,551.0 C273.2,552.1 274.4,553.8 275.5,556.7 C276.7,559.8 277.8,569.3 279.0,569.3 C280.4,569.3 281.7,557.9 283.1,554.0 C285.2,547.9 287.3,544.2 289.4,544.2 C290.8,544.2 292.2,547.6 293.6,548.4 C295.2,549.3 296.9,548.8 298.5,549.8 C299.4,550.3 300.3,559.5 301.2,562.3 C302.4,566.0 303.5,567.9 304.7,567.9 C306.3,567.9 308.0,552.2 309.6,551.2 C311.0,550.2 312.4,550.5 313.8,549.8 C315.2,549.1 316.6,547.0 318.0,547.0 C319.4,547.0 320.7,547.8 322.1,548.4 C323.0,548.8 324.0,549.8 324.9,549.8 C326.3,549.8 327.7,549.8 329.1,549.8 C329.9,549.8 330.7,550.2 331.5,551.2 C332.4,552.2 333.4,559.3 334.3,562.3 C335.4,565.9 336.6,569.9 337.7,569.9 C338.9,569.9 340.0,558.9 341.2,554.0 C341.9,551.0 342.6,545.6 343.3,545.6 C344.7,545.6 346.1,545.6 347.5,545.6 C349.4,545.6 351.2,548.4 353.1,548.4 C354.3,548.4 355.4,544.2 356.6,544.2 C358.2,544.2 359.8,548.9 361.4,554.0 C362.6,557.6 363.7,566.9 364.9,567.9 C366.5,569.2 368.2,569.9 369.8,569.9 C370.7,569.9 371.7,568.7 372.6,568.7 C373.5,568.7 374.5,568.7 375.4,568.7 C376.8,568.7 378.1,555.8 379.5,554.0 C380.9,552.1 382.3,551.2 383.7,551.2 C384.9,551.2 386.0,554.3 387.2,554.3 C388.2,554.3 389.3,552.6 390.3,552.1 C391.4,551.5 392.4,551.6 393.5,551.0 C394.9,550.3 396.4,547.8 397.8,547.8 C398.8,547.8 399.9,550.3 400.9,552.1 C402.0,553.9 403.0,558.6 404.1,558.6 C405.2,558.6 406.2,557.3 407.3,556.3 C408.9,554.7 410.4,549.9 412.0,549.9 C412.9,549.9 413.8,550.4 414.7,551.0 C415.8,551.7 416.8,553.0 417.9,554.3 C418.9,555.5 420.0,558.6 421.0,558.6 C422.2,558.6 423.5,555.4 424.7,554.3 C425.8,553.3 426.8,552.7 427.9,552.1 C428.8,551.6 429.7,551.0 430.6,551.0 C431.6,551.0 432.7,555.3 433.7,555.3 C434.9,555.3 436.2,552.1 437.4,552.1 C438.5,552.1 439.5,552.6 440.6,553.2 C441.6,553.7 442.5,555.3 443.5,555.3 C444.7,555.3 445.8,555.3 447.0,555.3 C448.1,555.3 449.3,552.1 450.4,551.2 C451.6,550.2 452.7,549.8 453.9,549.8 C455.1,549.8 456.2,551.2 457.4,551.2 C458.3,551.2 459.3,549.8 460.2,549.8 C461.6,549.8 463.0,550.2 464.4,551.2 C465.3,551.8 466.3,552.1 467.2,554.0 C467.9,555.3 468.5,569.3 469.2,569.3 C470.4,569.3 471.5,562.4 472.7,559.5 C474.3,555.5 476.0,549.8 477.6,549.8 C478.8,549.8 479.9,549.8 481.1,549.8 C482.3,549.8 483.4,549.2 484.6,548.4 C486.0,547.4 487.3,544.2 488.7,544.2 C490.1,544.2 491.5,545.1 492.9,547.0 C494.1,548.5 495.2,566.4 496.4,567.9 C497.1,568.8 497.8,569.3 498.5,569.3 C499.1,569.3 499.6,564.9 500.2,562.6 C501.1,559.0 502.0,551.0 502.9,551.0 C504.0,551.0 505.0,551.0 506.1,551.0 C507.3,551.0 508.6,550.2 509.8,549.9 C511.2,549.6 512.6,549.0 514.0,549.0 C515.1,549.0 516.1,554.3 517.2,554.3 C517.9,554.3 518.6,554.3 519.3,554.3 C520.4,554.3 521.4,547.8 522.5,547.8 C523.4,547.8 524.2,565.6 525.1,567.0 C526.0,568.3 526.8,568.5 527.7,569.0 C528.8,569.6 529.8,570.1 530.9,570.1 C532.3,570.1 533.8,556.3 535.2,552.1 C536.2,549.0 537.3,545.7 538.3,545.7 C539.4,545.7 540.4,545.7 541.5,545.7 C542.6,545.7 543.6,546.4 544.7,546.8 C545.4,547.1 546.1,547.1 546.8,547.8 C547.9,548.7 548.9,558.6 550.0,558.6 C551.0,558.6 552.1,557.0 553.1,556.3 C554.0,555.6 554.9,555.0 555.8,554.3 C556.6,553.6 557.5,552.9 558.3,552.1 C559.7,550.8 561.2,547.8 562.6,547.8 C563.7,547.8 564.7,549.0 565.8,549.0 C567.2,549.0 568.6,548.1 570.0,547.8 C571.4,547.4 572.8,546.8 574.2,546.8 C574.9,546.8 575.6,547.8 576.3,547.8 C577.4,547.8 578.4,546.8 579.5,546.8 C580.9,546.8 582.3,549.9 583.7,549.9 C585.5,549.9 587.2,547.8 589.0,547.8 C590.2,547.8 591.5,547.8 592.7,547.8 C593.4,547.8 594.2,562.4 594.9,564.8 C595.8,567.6 596.6,568.4 597.5,569.0 C598.6,569.7 599.6,570.1 600.7,570.1 C601.8,570.1 602.8,569.7 603.9,569.0 C604.9,568.3 606.0,564.1 607.0,560.6 C608.1,557.0 609.1,547.8 610.2,547.8 C611.3,547.8 612.5,549.8 613.6,549.8 C614.8,549.8 615.9,548.4 617.1,548.4 C618.5,548.4 619.8,555.3 621.2,555.3 C622.4,555.3 623.5,555.3 624.7,555.3 C626.1,555.3 627.5,558.1 628.9,558.1 C629.8,558.1 630.8,556.5 631.7,555.3 C632.4,554.5 633.1,552.6 633.8,552.6 C634.9,552.6 636.1,552.6 637.2,552.6 C638.6,552.6 640.0,548.4 641.4,548.4 C642.3,548.4 643.3,554.0 644.2,554.0 C645.6,554.0 647.0,552.1 648.4,551.2 C649.8,550.2 651.2,548.4 652.6,548.4 C654.0,548.4 655.3,548.4 656.7,548.4 C657.9,548.4 659.0,548.4 660.2,548.4 C661.6,548.4 663.1,546.8 664.5,546.8 C665.2,546.8 665.9,559.3 666.6,562.6 C667.5,566.9 668.4,569.0 669.3,569.0 C670.4,569.0 671.4,562.6 672.5,558.6 C673.4,555.3 674.2,547.8 675.1,547.8 C676.0,547.8 676.9,555.0 677.8,555.3 C679.4,556.0 680.9,555.7 682.5,556.3 C683.6,556.7 684.6,557.0 685.7,558.6 C686.6,559.9 687.4,569.0 688.3,569.0 C689.4,569.0 690.4,556.0 691.5,552.1 C692.6,548.2 693.6,545.7 694.7,545.7 C696.1,545.7 697.5,547.8 698.9,547.8 C700.3,547.8 701.8,545.7 703.2,545.7 C704.2,545.7 705.3,554.5 706.3,558.6 C707.2,562.2 708.1,568.5 709.0,569.0 C710.2,569.7 711.5,570.1 712.7,570.1 C713.9,570.1 715.2,569.3 716.4,569.0 C717.6,568.6 718.9,568.6 720.1,567.9 C721.0,567.4 721.8,561.0 722.7,558.6 C724.1,554.6 725.6,554.0 727.0,552.6 C728.4,551.1 729.7,550.4 731.1,549.8 C733.0,548.8 734.8,548.4 736.7,548.4 C738.1,548.4 739.5,548.4 740.9,548.4 C742.3,548.4 743.7,548.4 745.1,548.4 C746.7,548.4 748.3,550.0 749.9,551.2 C751.1,552.0 752.2,554.0 753.4,554.0 C754.8,554.0 756.2,545.6 757.6,545.6 C759.0,545.6 760.4,549.8 761.8,549.8 C763.7,549.8 765.5,548.4 767.4,548.4 C769.2,548.4 771.1,549.8 772.9,549.8 C774.1,549.8 775.2,546.9 776.4,545.6 C777.3,544.6 778.2,542.8 779.1,542.8 C779.9,542.8 780.8,562.6 781.6,565.1 C782.5,567.9 783.5,569.3 784.4,569.3 C785.5,569.3 786.7,559.7 787.8,556.7 C789.2,553.1 790.6,552.3 792.0,551.2 C793.2,550.2 794.3,549.8 795.5,549.8 C796.9,549.8 798.3,549.8 799.7,549.8 C800.9,549.8 802.0,548.4 803.2,548.4 C804.1,548.4 805.0,549.3 805.9,551.2 C806.8,553.1 807.8,567.9 808.7,567.9 C809.4,567.9 810.1,567.9 810.8,567.9 C811.7,567.9 812.7,569.9 813.6,569.9 C815.0,569.9 816.4,568.8 817.8,567.9 C819.0,567.1 820.1,566.2 821.3,565.1 C822.2,564.3 823.2,562.3 824.1,562.3 C825.0,562.3 825.9,567.2 826.8,567.9 C827.5,568.4 828.2,568.4 828.9,568.7 C830.3,569.2 831.7,570.1 833.1,570.1 C834.7,570.1 836.2,569.0 837.8,569.0 C839.4,569.0 841.0,570.1 842.6,570.1 C845.1,570.1 847.5,569.0 850.0,569.0 C851.6,569.0 853.2,569.0 854.8,569.0 C855.8,569.0 856.9,563.6 857.9,561.7 C858.6,560.4 859.3,559.6 860.0,558.6 C861.2,556.9 862.5,554.3 863.7,554.3 C865.1,554.3 866.6,554.9 868.0,556.3 C868.9,557.1 869.7,563.7 870.6,563.7 C871.8,563.7 873.1,558.6 874.3,558.6 C875.7,558.6 877.2,558.6 878.6,558.6 C879.5,558.6 880.3,558.3 881.2,558.1 C882.5,557.8 883.9,557.7 885.2,556.7 C886.4,555.9 887.5,553.6 888.7,551.2 C889.6,549.2 890.6,544.2 891.5,544.2 C892.7,544.2 893.8,545.1 895.0,545.6 C896.2,546.0 897.3,546.4 898.5,547.0 C899.9,547.7 901.2,549.8 902.6,549.8 C904.5,549.8 906.3,541.4 908.2,541.4 C909.6,541.4 911.0,547.0 912.4,547.0 C913.8,547.0 915.2,545.6 916.6,545.6 C918.0,545.6 919.3,549.4 920.7,551.2 C921.5,552.1 922.2,553.0 923.0,554.0"/><line x1="50" x2="923" y1="416.5" y2="416.5" stroke="#aebfa6" stroke-width="1" opacity="0.7"/>
<text x="43.90" y="420.3" font-size="12.60" fill="#cacad4" font-weight="normal" text-anchor="end"  stroke="#cacad4" stroke-width="0.22" id="t22" textLength="31.42" lengthAdjust="spacingAndGlyphs">100%</text>
<text x="44.30" y="451.3" font-size="12.60" fill="#cacad4" font-weight="normal" text-anchor="end"  stroke="#cacad4" stroke-width="0.22" id="t23" textLength="25.02" lengthAdjust="spacingAndGlyphs">80%</text>
<text x="44.30" y="482.3" font-size="12.60" fill="#cacad4" font-weight="normal" text-anchor="end"  stroke="#cacad4" stroke-width="0.22" id="t24" textLength="25.02" lengthAdjust="spacingAndGlyphs">60%</text>
<text x="44.30" y="513.3" font-size="12.60" fill="#cacad4" font-weight="normal" text-anchor="end"  stroke="#cacad4" stroke-width="0.22" id="t25" textLength="24.02" lengthAdjust="spacingAndGlyphs">40%</text>
<text x="44.30" y="544.3" font-size="12.60" fill="#cacad4" font-weight="normal" text-anchor="end"  stroke="#cacad4" stroke-width="0.22" id="t26" textLength="25.02" lengthAdjust="spacingAndGlyphs">20%</text>
<text x="44.50" y="575.3" font-size="12.60" fill="#cacad4" font-weight="normal" text-anchor="end"  stroke="#cacad4" stroke-width="0.22" id="t27" textLength="16.80" lengthAdjust="spacingAndGlyphs">0%</text>
<text x="159.60" y="590.2" font-size="12.80" fill="#cacad4" font-weight="normal" text-anchor="middle"  stroke="#cacad4" stroke-width="0.22" id="t28" textLength="33.83" lengthAdjust="spacingAndGlyphs">09:55</text>
<text x="305.20" y="590.2" font-size="12.80" fill="#cacad4" font-weight="normal" text-anchor="middle"  stroke="#cacad4" stroke-width="0.22" id="t29" textLength="32.03" lengthAdjust="spacingAndGlyphs">10:00</text>
<text x="451.40" y="590.2" font-size="12.80" fill="#cacad4" font-weight="normal" text-anchor="middle"  stroke="#cacad4" stroke-width="0.22" id="t30" textLength="32.03" lengthAdjust="spacingAndGlyphs">10:05</text>
<text x="596.60" y="590.2" font-size="12.80" fill="#cacad4" font-weight="normal" text-anchor="middle"  stroke="#cacad4" stroke-width="0.22" id="t31" textLength="32.03" lengthAdjust="spacingAndGlyphs">10:10</text>
<text x="742.80" y="590.2" font-size="12.80" fill="#cacad4" font-weight="normal" text-anchor="middle"  stroke="#cacad4" stroke-width="0.22" id="t32" textLength="32.03" lengthAdjust="spacingAndGlyphs">10:15</text>
<text x="889.00" y="590.2" font-size="12.80" fill="#cacad4" font-weight="normal" text-anchor="middle"  stroke="#cacad4" stroke-width="0.22" id="t33" textLength="32.03" lengthAdjust="spacingAndGlyphs">10:20</text>
<rect x="14.0" y="604.3" width="13.5" height="4" rx="2" fill="#e9c062"/>
<text x="35.10" y="610.4" font-size="12.80" fill="#cacad4" font-weight="normal" text-anchor="start"  stroke="#cacad4" stroke-width="0.22" id="t34" textLength="75.27" lengthAdjust="spacingAndGlyphs">Busy System</text>
<rect x="121.6" y="604.3" width="13.4" height="4" rx="2" fill="#2c5c9c"/>
<text x="142.60" y="610.4" font-size="12.80" fill="#cacad4" font-weight="normal" text-anchor="start"  stroke="#cacad4" stroke-width="0.22" id="t35" textLength="58.83" lengthAdjust="spacingAndGlyphs">Busy User</text>
<rect x="212.2" y="604.3" width="13.5" height="4" rx="2" fill="#a51d1d"/>
<text x="233.00" y="610.4" font-size="12.80" fill="#cacad4" font-weight="normal" text-anchor="start"  stroke="#cacad4" stroke-width="0.22" id="t36" textLength="66.64" lengthAdjust="spacingAndGlyphs">Busy Iowait</text>
<rect x="310.0" y="604.3" width="13.5" height="4" rx="2" fill="#ee8240"/>
<text x="331.40" y="610.4" font-size="12.80" fill="#cacad4" font-weight="normal" text-anchor="start"  stroke="#cacad4" stroke-width="0.22" id="t37" textLength="59.96" lengthAdjust="spacingAndGlyphs">Busy IRQs</text>
<rect x="400.0" y="604.3" width="13.4" height="4" rx="2" fill="#763874"/>
<text x="422.80" y="610.4" font-size="12.80" fill="#cacad4" font-weight="normal" text-anchor="start"  stroke="#cacad4" stroke-width="0.22" id="t38" textLength="64.42" lengthAdjust="spacingAndGlyphs">Busy Other</text>
<rect x="498.1" y="604.3" width="13.4" height="4" rx="2" fill="#8cb67c"/>
<text x="517.70" y="610.4" font-size="12.80" fill="#cacad4" font-weight="normal" text-anchor="start"  stroke="#cacad4" stroke-width="0.22" id="t39" textLength="23.04" lengthAdjust="spacingAndGlyphs">Idle</text>
<rect x="1.5" y="633.5" width="939.0" height="257.0" rx="2" fill="#1b1c20" stroke="#2e2f34" stroke-width="1"/>
<rect x="949.5" y="633.5" width="228.0" height="257.0" rx="2" fill="#1b1c20" stroke="#2e2f34" stroke-width="1"/>
<text x="9.00" y="655.2" font-size="15.30" fill="#d0d0dc" font-weight="normal" text-anchor="start"  stroke="#d0d0dc" stroke-width="0.50" id="t40" textLength="147.79" lengthAdjust="spacingAndGlyphs">Network Traffic Basic</text>
<circle cx="180.7" cy="650.3" r="6.0" fill="none" stroke="#a6a6b0" stroke-width="1.35"/><rect x="179.95" y="650.20" width="1.5" height="2.8" fill="#a6a6b0"/><rect x="179.95" y="647.70" width="1.5" height="1.3" fill="#a6a6b0"/>
<g stroke="rgba(204,204,220,0.14)" stroke-width="1"><line x1="78" x2="923" y1="697.5" y2="697.5"/><line x1="78" x2="923" y1="799.0" y2="799.0"/><line x1="182.3" x2="182.3" y1="682" y2="815"/><line x1="323.3" x2="323.3" y1="682" y2="815"/><line x1="464.3" x2="464.3" y1="682" y2="815"/><line x1="605.3" x2="605.3" y1="682" y2="815"/><line x1="746.3" x2="746.3" y1="682" y2="815"/><line x1="887.3" x2="887.3" y1="682" y2="815"/></g><path fill="#6d602e" d="M78,748.3 L78.2,706.7 C79.2,705.2 80.1,702.3 81.1,702.3 C82.3,702.3 83.5,707.0 84.7,713.8 C86.1,721.5 87.4,748.3 88.8,748.3 C90.3,748.3 91.9,705.2 93.4,705.2 C95.1,705.2 96.8,723.9 98.5,723.9 C100.9,723.9 103.3,715.3 105.7,715.3 C107.1,715.3 108.6,715.3 110.0,715.3 C112.4,715.3 114.9,725.5 117.3,725.5 C119.5,725.5 121.6,722.1 123.8,715.3 C125.0,711.6 126.2,700.1 127.4,700.1 C129.3,700.1 131.3,748.3 133.2,748.3 C135.4,748.3 137.6,700.1 139.8,700.1 C143.2,700.1 146.5,700.1 149.9,700.1 C152.3,700.1 154.8,715.0 157.2,718.4 C158.6,720.3 160.1,719.4 161.5,721.4 C163.2,723.8 164.9,748.3 166.6,748.3 C167.8,748.3 169.0,703.4 170.2,702.3 C171.9,700.8 173.6,700.1 175.3,700.1 C176.9,700.1 178.5,748.3 180.1,748.3 C182.1,748.3 184.1,702.6 186.1,702.6 C188.0,702.6 190.0,703.6 191.9,703.6 C193.0,703.6 194.1,702.3 195.2,702.3 C196.7,702.3 198.1,702.6 199.6,703.1 C201.3,703.8 203.0,748.3 204.7,748.3 C208.3,748.3 211.9,748.3 215.5,748.3 C216.7,748.3 218.0,737.6 219.2,728.5 C220.1,721.6 221.1,703.6 222.0,703.6 C223.2,703.6 224.5,716.8 225.7,716.8 C227.6,716.8 229.6,714.4 231.5,711.3 C232.9,709.0 234.4,702.3 235.8,702.3 C241.6,702.3 247.4,703.1 253.2,703.1 C258.0,703.1 262.9,703.1 267.7,703.1 C269.6,703.1 271.6,716.3 273.5,716.3 C275.4,716.3 277.4,706.0 279.3,705.2 C283.6,703.3 288.0,702.3 292.3,702.3 C293.3,702.3 294.2,728.0 295.2,735.6 C296.3,744.0 297.3,748.3 298.4,748.3 C299.9,748.3 301.4,713.2 302.9,708.2 C304.3,703.5 305.8,701.9 307.2,701.1 C309.1,700.1 311.1,699.6 313.0,699.6 C314.2,699.6 315.5,700.1 316.7,701.1 C317.7,701.9 318.6,724.0 319.6,732.6 C320.3,738.8 321.0,748.3 321.7,748.3 C323.2,748.3 324.6,700.1 326.1,700.1 C327.1,700.1 328.0,708.2 329.0,708.2 C330.9,708.2 332.9,703.3 334.8,702.3 C337.7,700.8 340.6,700.1 343.5,700.1 C344.9,700.1 346.4,700.1 347.8,700.1 C349.7,700.1 351.7,748.3 353.6,748.3 C354.8,748.3 356.0,736.2 357.2,728.5 C358.7,719.0 360.1,695.0 361.6,695.0 C363.3,695.0 365.0,695.9 366.7,697.5 C368.1,699.0 369.6,704.0 371.0,705.2 C372.2,706.2 373.4,705.7 374.6,706.7 C376.3,708.1 378.0,748.3 379.7,748.3 C383.6,748.3 387.4,748.3 391.3,748.3 C392.8,748.3 394.2,708.2 395.7,708.2 C397.1,708.2 398.6,709.7 400.0,709.7 C403.4,709.7 406.7,705.7 410.1,704.7 C411.6,704.2 413.0,703.6 414.5,703.6 C415.6,703.6 416.7,720.4 417.8,720.4 C419.2,720.4 420.7,717.7 422.1,715.3 C423.8,712.4 425.5,703.6 427.2,703.6 C429.6,703.6 432.1,716.3 434.5,716.3 C437.4,716.3 440.3,703.6 443.2,703.6 C444.4,703.6 445.6,715.3 446.8,715.3 C449.0,715.3 451.1,704.7 453.3,704.7 C455.0,704.7 456.7,713.3 458.4,713.3 C461.8,713.3 465.1,702.3 468.5,702.3 C469.7,702.3 470.9,709.7 472.1,709.7 C473.3,709.7 474.6,703.6 475.8,703.6 C477.0,703.6 478.2,706.2 479.4,711.3 C480.4,715.3 481.3,748.3 482.3,748.3 C484.5,748.3 486.6,700.1 488.8,700.1 C492.2,700.1 495.6,702.3 499.0,702.3 C500.9,702.3 502.9,701.1 504.8,701.1 C506.2,701.1 507.7,748.3 509.1,748.3 C511.0,748.3 513.0,713.4 514.9,708.2 C517.3,701.8 519.7,698.6 522.1,698.6 C523.6,698.6 525.0,711.3 526.5,711.3 C528.8,711.3 531.1,703.1 533.4,703.1 C534.6,703.1 535.8,748.3 537.0,748.3 C538.7,748.3 540.4,748.3 542.1,748.3 C544.3,748.3 546.4,698.6 548.6,698.6 C550.8,698.6 553.0,698.9 555.2,699.6 C557.4,700.2 559.5,721.9 561.7,721.9 C563.4,721.9 565.1,720.7 566.8,718.4 C568.2,716.4 569.7,698.6 571.1,698.6 C577.1,698.6 583.2,698.9 589.2,699.6 C590.2,699.7 591.1,701.6 592.1,701.6 C595.0,701.6 597.9,698.6 600.8,698.6 C602.3,698.6 603.7,748.3 605.2,748.3 C607.8,748.3 610.5,748.3 613.1,748.3 C614.6,748.3 616.0,701.8 617.5,701.6 C619.7,701.3 621.8,701.1 624.0,701.1 C625.9,701.1 627.9,715.7 629.8,716.3 C631.7,717.0 633.7,717.3 635.6,717.3 C637.7,717.3 639.7,715.8 641.8,713.8 C644.0,711.7 646.1,704.7 648.3,704.7 C649.5,704.7 650.7,710.2 651.9,710.2 C654.8,710.2 657.7,701.9 660.6,701.6 C664.0,701.3 667.4,701.1 670.8,701.1 C672.2,701.1 673.7,748.3 675.1,748.3 C676.6,748.3 678.0,706.2 679.5,706.2 C680.9,706.2 682.4,715.3 683.8,715.3 C685.3,715.3 686.7,712.3 688.2,712.3 C689.6,712.3 691.1,748.3 692.5,748.3 C694.4,748.3 696.4,700.1 698.3,700.1 C701.9,700.1 705.6,700.1 709.2,700.1 C711.1,700.1 713.1,748.3 715.0,748.3 C717.9,748.3 720.8,748.3 723.7,748.3 C725.4,748.3 727.1,721.9 728.8,716.8 C730.7,711.1 732.7,711.7 734.6,708.2 C736.0,705.6 737.5,699.9 738.9,699.6 C741.9,698.9 745.0,698.6 748.0,698.6 C750.4,698.6 752.8,709.7 755.2,709.7 C757.6,709.7 760.1,699.6 762.5,699.6 C763.7,699.6 764.9,703.1 766.1,703.1 C767.8,703.1 769.5,698.6 771.2,698.6 C772.6,698.6 774.1,703.6 775.5,703.6 C777.7,703.6 779.9,699.6 782.1,699.6 C783.3,699.6 784.5,748.3 785.7,748.3 C787.6,748.3 789.6,702.3 791.5,702.3 C795.4,702.3 799.2,702.6 803.1,703.1 C804.8,703.4 806.4,706.2 808.1,712.3 C808.9,715.3 809.8,748.3 810.6,748.3 C825.5,748.3 840.4,748.3 855.3,748.3 C856.5,748.3 857.8,720.8 859.0,719.9 C860.4,718.9 861.9,718.4 863.3,718.4 C864.5,718.4 865.8,719.9 867.0,722.9 C867.7,724.7 868.4,738.7 869.1,738.7 C870.1,738.7 871.0,724.1 872.0,723.9 C873.9,723.6 875.9,723.4 877.8,723.4 C878.8,723.4 879.7,725.5 880.7,725.5 C882.6,725.5 884.6,723.1 886.5,718.4 C888.0,714.8 889.4,699.6 890.9,699.6 C893.3,699.6 895.7,699.7 898.1,700.1 C899.6,700.3 901.0,705.2 902.5,705.2 C904.4,705.2 906.4,699.6 908.3,699.6 C911.2,699.6 914.1,699.7 917.0,700.1 C918.2,700.2 919.4,715.3 920.6,715.3 C921.4,715.3 922.2,714.0 923.0,713.3 L923,748.3 Z"/><path fill="#8a4f48" d="M78,748.3 L78.2,789.5 C79.2,790.9 80.1,793.8 81.1,793.8 C82.3,793.8 83.5,789.2 84.7,782.5 C86.1,774.8 87.4,748.3 88.8,748.3 C90.3,748.3 91.9,791.0 93.4,791.0 C95.1,791.0 96.8,772.4 98.5,772.4 C100.9,772.4 103.3,781.0 105.7,781.0 C107.1,781.0 108.6,781.0 110.0,781.0 C112.4,781.0 114.9,770.9 117.3,770.9 C119.5,770.9 121.6,774.3 123.8,781.0 C125.0,784.7 126.2,796.0 127.4,796.0 C129.3,796.0 131.3,748.3 133.2,748.3 C135.4,748.3 137.6,796.0 139.8,796.0 C143.2,796.0 146.5,796.0 149.9,796.0 C152.3,796.0 154.8,781.3 157.2,777.9 C158.6,776.0 160.1,776.9 161.5,774.9 C163.2,772.5 164.9,748.3 166.6,748.3 C167.8,748.3 169.0,792.8 170.2,793.8 C171.9,795.3 173.6,796.0 175.3,796.0 C176.9,796.0 178.5,748.3 180.1,748.3 C182.1,748.3 184.1,793.5 186.1,793.5 C188.0,793.5 190.0,792.5 191.9,792.5 C193.0,792.5 194.1,793.8 195.2,793.8 C196.7,793.8 198.1,793.6 199.6,793.0 C201.3,792.4 203.0,748.3 204.7,748.3 C208.3,748.3 211.9,748.3 215.5,748.3 C216.7,748.3 218.0,758.9 219.2,767.9 C220.1,774.7 221.1,792.5 222.0,792.5 C223.2,792.5 224.5,779.5 225.7,779.5 C227.6,779.5 229.6,781.9 231.5,785.0 C232.9,787.3 234.4,793.8 235.8,793.8 C241.6,793.8 247.4,793.0 253.2,793.0 C258.0,793.0 262.9,793.0 267.7,793.0 C269.6,793.0 271.6,780.0 273.5,780.0 C275.4,780.0 277.4,790.2 279.3,791.0 C283.6,792.9 288.0,793.8 292.3,793.8 C293.3,793.8 294.2,768.4 295.2,760.9 C296.3,752.5 297.3,748.3 298.4,748.3 C299.9,748.3 301.4,783.1 302.9,788.0 C304.3,792.7 305.8,794.3 307.2,795.0 C309.1,796.0 311.1,796.5 313.0,796.5 C314.2,796.5 315.5,796.0 316.7,795.0 C317.7,794.2 318.6,772.4 319.6,763.9 C320.3,757.7 321.0,748.3 321.7,748.3 C323.2,748.3 324.6,796.0 326.1,796.0 C327.1,796.0 328.0,788.0 329.0,788.0 C330.9,788.0 332.9,792.8 334.8,793.8 C337.7,795.3 340.6,796.0 343.5,796.0 C344.9,796.0 346.4,796.0 347.8,796.0 C349.7,796.0 351.7,748.3 353.6,748.3 C354.8,748.3 356.0,760.2 357.2,767.9 C358.7,777.3 360.1,801.1 361.6,801.1 C363.3,801.1 365.0,800.2 366.7,798.5 C368.1,797.1 369.6,792.2 371.0,791.0 C372.2,790.0 373.4,790.5 374.6,789.5 C376.3,788.1 378.0,748.3 379.7,748.3 C383.6,748.3 387.4,748.3 391.3,748.3 C392.8,748.3 394.2,788.0 395.7,788.0 C397.1,788.0 398.6,786.5 400.0,786.5 C403.4,786.5 406.7,790.5 410.1,791.5 C411.6,792.0 413.0,792.5 414.5,792.5 C415.6,792.5 416.7,775.9 417.8,775.9 C419.2,775.9 420.7,778.6 422.1,781.0 C423.8,783.8 425.5,792.5 427.2,792.5 C429.6,792.5 432.1,780.0 434.5,780.0 C437.4,780.0 440.3,792.5 443.2,792.5 C444.4,792.5 445.6,781.0 446.8,781.0 C449.0,781.0 451.1,791.5 453.3,791.5 C455.0,791.5 456.7,783.0 458.4,783.0 C461.8,783.0 465.1,793.8 468.5,793.8 C469.7,793.8 470.9,786.5 472.1,786.5 C473.3,786.5 474.6,792.5 475.8,792.5 C477.0,792.5 478.2,790.0 479.4,785.0 C480.4,780.9 481.3,748.3 482.3,748.3 C484.5,748.3 486.6,796.0 488.8,796.0 C492.2,796.0 495.6,793.8 499.0,793.8 C500.9,793.8 502.9,795.0 504.8,795.0 C506.2,795.0 507.7,748.3 509.1,748.3 C511.0,748.3 513.0,782.9 514.9,788.0 C517.3,794.4 519.7,797.5 522.1,797.5 C523.6,797.5 525.0,785.0 526.5,785.0 C528.8,785.0 531.1,793.0 533.4,793.0 C534.6,793.0 535.8,748.3 537.0,748.3 C538.7,748.3 540.4,748.3 542.1,748.3 C544.3,748.3 546.4,797.5 548.6,797.5 C550.8,797.5 553.0,797.2 555.2,796.5 C557.4,795.9 559.5,774.4 561.7,774.4 C563.4,774.4 565.1,775.6 566.8,777.9 C568.2,779.9 569.7,797.5 571.1,797.5 C577.1,797.5 583.2,797.2 589.2,796.5 C590.2,796.4 591.1,794.5 592.1,794.5 C595.0,794.5 597.9,797.5 600.8,797.5 C602.3,797.5 603.7,748.3 605.2,748.3 C607.8,748.3 610.5,748.3 613.1,748.3 C614.6,748.3 616.0,794.3 617.5,794.5 C619.7,794.9 621.8,795.0 624.0,795.0 C625.9,795.0 627.9,780.6 629.8,780.0 C631.7,779.3 633.7,778.9 635.6,778.9 C637.7,778.9 639.7,780.5 641.8,782.5 C644.0,784.6 646.1,791.5 648.3,791.5 C649.5,791.5 650.7,786.0 651.9,786.0 C654.8,786.0 657.7,794.2 660.6,794.5 C664.0,794.9 667.4,795.0 670.8,795.0 C672.2,795.0 673.7,748.3 675.1,748.3 C676.6,748.3 678.0,790.0 679.5,790.0 C680.9,790.0 682.4,781.0 683.8,781.0 C685.3,781.0 686.7,784.0 688.2,784.0 C689.6,784.0 691.1,748.3 692.5,748.3 C694.4,748.3 696.4,796.0 698.3,796.0 C701.9,796.0 705.6,796.0 709.2,796.0 C711.1,796.0 713.1,748.3 715.0,748.3 C717.9,748.3 720.8,748.3 723.7,748.3 C725.4,748.3 727.1,774.4 728.8,779.5 C730.7,785.1 732.7,784.6 734.6,788.0 C736.0,790.5 737.5,796.2 738.9,796.5 C741.9,797.2 745.0,797.5 748.0,797.5 C750.4,797.5 752.8,786.5 755.2,786.5 C757.6,786.5 760.1,796.5 762.5,796.5 C763.7,796.5 764.9,793.0 766.1,793.0 C767.8,793.0 769.5,797.5 771.2,797.5 C772.6,797.5 774.1,792.5 775.5,792.5 C777.7,792.5 779.9,796.5 782.1,796.5 C783.3,796.5 784.5,748.3 785.7,748.3 C787.6,748.3 789.6,793.8 791.5,793.8 C795.4,793.8 799.2,793.6 803.1,793.0 C804.8,792.8 806.4,790.0 808.1,784.0 C808.9,781.0 809.8,748.3 810.6,748.3 C825.5,748.3 840.4,748.3 855.3,748.3 C856.5,748.3 857.8,775.6 859.0,776.4 C860.4,777.4 861.9,777.9 863.3,777.9 C864.5,777.9 865.8,776.4 867.0,773.4 C867.7,771.7 868.4,757.8 869.1,757.8 C870.1,757.8 871.0,772.2 872.0,772.4 C873.9,772.8 875.9,772.9 877.8,772.9 C878.8,772.9 879.7,770.9 880.7,770.9 C882.6,770.9 884.6,773.3 886.5,777.9 C888.0,781.5 889.4,796.5 890.9,796.5 C893.3,796.5 895.7,796.4 898.1,796.0 C899.6,795.8 901.0,791.0 902.5,791.0 C904.4,791.0 906.4,796.5 908.3,796.5 C911.2,796.5 914.1,796.4 917.0,796.0 C918.2,795.9 919.4,781.0 920.6,781.0 C921.4,781.0 922.2,782.3 923.0,783.0 L923,748.3 Z"/><line x1="78" x2="923" y1="748.3" y2="748.3" stroke="#8c8c8e" stroke-width="1.3"/><path fill="none" stroke="#ecd050" stroke-width="1.1" d="M78.2,706.7 C79.2,705.2 80.1,702.3 81.1,702.3 C82.3,702.3 83.5,707.0 84.7,713.8 C86.1,721.5 87.4,748.3 88.8,748.3 C90.3,748.3 91.9,705.2 93.4,705.2 C95.1,705.2 96.8,723.9 98.5,723.9 C100.9,723.9 103.3,715.3 105.7,715.3 C107.1,715.3 108.6,715.3 110.0,715.3 C112.4,715.3 114.9,725.5 117.3,725.5 C119.5,725.5 121.6,722.1 123.8,715.3 C125.0,711.6 126.2,700.1 127.4,700.1 C129.3,700.1 131.3,748.3 133.2,748.3 C135.4,748.3 137.6,700.1 139.8,700.1 C143.2,700.1 146.5,700.1 149.9,700.1 C152.3,700.1 154.8,715.0 157.2,718.4 C158.6,720.3 160.1,719.4 161.5,721.4 C163.2,723.8 164.9,748.3 166.6,748.3 C167.8,748.3 169.0,703.4 170.2,702.3 C171.9,700.8 173.6,700.1 175.3,700.1 C176.9,700.1 178.5,748.3 180.1,748.3 C182.1,748.3 184.1,702.6 186.1,702.6 C188.0,702.6 190.0,703.6 191.9,703.6 C193.0,703.6 194.1,702.3 195.2,702.3 C196.7,702.3 198.1,702.6 199.6,703.1 C201.3,703.8 203.0,748.3 204.7,748.3 C208.3,748.3 211.9,748.3 215.5,748.3 C216.7,748.3 218.0,737.6 219.2,728.5 C220.1,721.6 221.1,703.6 222.0,703.6 C223.2,703.6 224.5,716.8 225.7,716.8 C227.6,716.8 229.6,714.4 231.5,711.3 C232.9,709.0 234.4,702.3 235.8,702.3 C241.6,702.3 247.4,703.1 253.2,703.1 C258.0,703.1 262.9,703.1 267.7,703.1 C269.6,703.1 271.6,716.3 273.5,716.3 C275.4,716.3 277.4,706.0 279.3,705.2 C283.6,703.3 288.0,702.3 292.3,702.3 C293.3,702.3 294.2,728.0 295.2,735.6 C296.3,744.0 297.3,748.3 298.4,748.3 C299.9,748.3 301.4,713.2 302.9,708.2 C304.3,703.5 305.8,701.9 307.2,701.1 C309.1,700.1 311.1,699.6 313.0,699.6 C314.2,699.6 315.5,700.1 316.7,701.1 C317.7,701.9 318.6,724.0 319.6,732.6 C320.3,738.8 321.0,748.3 321.7,748.3 C323.2,748.3 324.6,700.1 326.1,700.1 C327.1,700.1 328.0,708.2 329.0,708.2 C330.9,708.2 332.9,703.3 334.8,702.3 C337.7,700.8 340.6,700.1 343.5,700.1 C344.9,700.1 346.4,700.1 347.8,700.1 C349.7,700.1 351.7,748.3 353.6,748.3 C354.8,748.3 356.0,736.2 357.2,728.5 C358.7,719.0 360.1,695.0 361.6,695.0 C363.3,695.0 365.0,695.9 366.7,697.5 C368.1,699.0 369.6,704.0 371.0,705.2 C372.2,706.2 373.4,705.7 374.6,706.7 C376.3,708.1 378.0,748.3 379.7,748.3 C383.6,748.3 387.4,748.3 391.3,748.3 C392.8,748.3 394.2,708.2 395.7,708.2 C397.1,708.2 398.6,709.7 400.0,709.7 C403.4,709.7 406.7,705.7 410.1,704.7 C411.6,704.2 413.0,703.6 414.5,703.6 C415.6,703.6 416.7,720.4 417.8,720.4 C419.2,720.4 420.7,717.7 422.1,715.3 C423.8,712.4 425.5,703.6 427.2,703.6 C429.6,703.6 432.1,716.3 434.5,716.3 C437.4,716.3 440.3,703.6 443.2,703.6 C444.4,703.6 445.6,715.3 446.8,715.3 C449.0,715.3 451.1,704.7 453.3,704.7 C455.0,704.7 456.7,713.3 458.4,713.3 C461.8,713.3 465.1,702.3 468.5,702.3 C469.7,702.3 470.9,709.7 472.1,709.7 C473.3,709.7 474.6,703.6 475.8,703.6 C477.0,703.6 478.2,706.2 479.4,711.3 C480.4,715.3 481.3,748.3 482.3,748.3 C484.5,748.3 486.6,700.1 488.8,700.1 C492.2,700.1 495.6,702.3 499.0,702.3 C500.9,702.3 502.9,701.1 504.8,701.1 C506.2,701.1 507.7,748.3 509.1,748.3 C511.0,748.3 513.0,713.4 514.9,708.2 C517.3,701.8 519.7,698.6 522.1,698.6 C523.6,698.6 525.0,711.3 526.5,711.3 C528.8,711.3 531.1,703.1 533.4,703.1 C534.6,703.1 535.8,748.3 537.0,748.3 C538.7,748.3 540.4,748.3 542.1,748.3 C544.3,748.3 546.4,698.6 548.6,698.6 C550.8,698.6 553.0,698.9 555.2,699.6 C557.4,700.2 559.5,721.9 561.7,721.9 C563.4,721.9 565.1,720.7 566.8,718.4 C568.2,716.4 569.7,698.6 571.1,698.6 C577.1,698.6 583.2,698.9 589.2,699.6 C590.2,699.7 591.1,701.6 592.1,701.6 C595.0,701.6 597.9,698.6 600.8,698.6 C602.3,698.6 603.7,748.3 605.2,748.3 C607.8,748.3 610.5,748.3 613.1,748.3 C614.6,748.3 616.0,701.8 617.5,701.6 C619.7,701.3 621.8,701.1 624.0,701.1 C625.9,701.1 627.9,715.7 629.8,716.3 C631.7,717.0 633.7,717.3 635.6,717.3 C637.7,717.3 639.7,715.8 641.8,713.8 C644.0,711.7 646.1,704.7 648.3,704.7 C649.5,704.7 650.7,710.2 651.9,710.2 C654.8,710.2 657.7,701.9 660.6,701.6 C664.0,701.3 667.4,701.1 670.8,701.1 C672.2,701.1 673.7,748.3 675.1,748.3 C676.6,748.3 678.0,706.2 679.5,706.2 C680.9,706.2 682.4,715.3 683.8,715.3 C685.3,715.3 686.7,712.3 688.2,712.3 C689.6,712.3 691.1,748.3 692.5,748.3 C694.4,748.3 696.4,700.1 698.3,700.1 C701.9,700.1 705.6,700.1 709.2,700.1 C711.1,700.1 713.1,748.3 715.0,748.3 C717.9,748.3 720.8,748.3 723.7,748.3 C725.4,748.3 727.1,721.9 728.8,716.8 C730.7,711.1 732.7,711.7 734.6,708.2 C736.0,705.6 737.5,699.9 738.9,699.6 C741.9,698.9 745.0,698.6 748.0,698.6 C750.4,698.6 752.8,709.7 755.2,709.7 C757.6,709.7 760.1,699.6 762.5,699.6 C763.7,699.6 764.9,703.1 766.1,703.1 C767.8,703.1 769.5,698.6 771.2,698.6 C772.6,698.6 774.1,703.6 775.5,703.6 C777.7,703.6 779.9,699.6 782.1,699.6 C783.3,699.6 784.5,748.3 785.7,748.3 C787.6,748.3 789.6,702.3 791.5,702.3 C795.4,702.3 799.2,702.6 803.1,703.1 C804.8,703.4 806.4,706.2 808.1,712.3 C808.9,715.3 809.8,748.3 810.6,748.3 C825.5,748.3 840.4,748.3 855.3,748.3 C856.5,748.3 857.8,720.8 859.0,719.9 C860.4,718.9 861.9,718.4 863.3,718.4 C864.5,718.4 865.8,719.9 867.0,722.9 C867.7,724.7 868.4,738.7 869.1,738.7 C870.1,738.7 871.0,724.1 872.0,723.9 C873.9,723.6 875.9,723.4 877.8,723.4 C878.8,723.4 879.7,725.5 880.7,725.5 C882.6,725.5 884.6,723.1 886.5,718.4 C888.0,714.8 889.4,699.6 890.9,699.6 C893.3,699.6 895.7,699.7 898.1,700.1 C899.6,700.3 901.0,705.2 902.5,705.2 C904.4,705.2 906.4,699.6 908.3,699.6 C911.2,699.6 914.1,699.7 917.0,700.1 C918.2,700.2 919.4,715.3 920.6,715.3 C921.4,715.3 922.2,714.0 923.0,713.3"/><path fill="none" stroke="#e8743c" stroke-width="1.1" d="M78.2,789.5 C79.2,790.9 80.1,793.8 81.1,793.8 C82.3,793.8 83.5,789.2 84.7,782.5 C86.1,774.8 87.4,748.3 88.8,748.3 C90.3,748.3 91.9,791.0 93.4,791.0 C95.1,791.0 96.8,772.4 98.5,772.4 C100.9,772.4 103.3,781.0 105.7,781.0 C107.1,781.0 108.6,781.0 110.0,781.0 C112.4,781.0 114.9,770.9 117.3,770.9 C119.5,770.9 121.6,774.3 123.8,781.0 C125.0,784.7 126.2,796.0 127.4,796.0 C129.3,796.0 131.3,748.3 133.2,748.3 C135.4,748.3 137.6,796.0 139.8,796.0 C143.2,796.0 146.5,796.0 149.9,796.0 C152.3,796.0 154.8,781.3 157.2,777.9 C158.6,776.0 160.1,776.9 161.5,774.9 C163.2,772.5 164.9,748.3 166.6,748.3 C167.8,748.3 169.0,792.8 170.2,793.8 C171.9,795.3 173.6,796.0 175.3,796.0 C176.9,796.0 178.5,748.3 180.1,748.3 C182.1,748.3 184.1,793.5 186.1,793.5 C188.0,793.5 190.0,792.5 191.9,792.5 C193.0,792.5 194.1,793.8 195.2,793.8 C196.7,793.8 198.1,793.6 199.6,793.0 C201.3,792.4 203.0,748.3 204.7,748.3 C208.3,748.3 211.9,748.3 215.5,748.3 C216.7,748.3 218.0,758.9 219.2,767.9 C220.1,774.7 221.1,792.5 222.0,792.5 C223.2,792.5 224.5,779.5 225.7,779.5 C227.6,779.5 229.6,781.9 231.5,785.0 C232.9,787.3 234.4,793.8 235.8,793.8 C241.6,793.8 247.4,793.0 253.2,793.0 C258.0,793.0 262.9,793.0 267.7,793.0 C269.6,793.0 271.6,780.0 273.5,780.0 C275.4,780.0 277.4,790.2 279.3,791.0 C283.6,792.9 288.0,793.8 292.3,793.8 C293.3,793.8 294.2,768.4 295.2,760.9 C296.3,752.5 297.3,748.3 298.4,748.3 C299.9,748.3 301.4,783.1 302.9,788.0 C304.3,792.7 305.8,794.3 307.2,795.0 C309.1,796.0 311.1,796.5 313.0,796.5 C314.2,796.5 315.5,796.0 316.7,795.0 C317.7,794.2 318.6,772.4 319.6,763.9 C320.3,757.7 321.0,748.3 321.7,748.3 C323.2,748.3 324.6,796.0 326.1,796.0 C327.1,796.0 328.0,788.0 329.0,788.0 C330.9,788.0 332.9,792.8 334.8,793.8 C337.7,795.3 340.6,796.0 343.5,796.0 C344.9,796.0 346.4,796.0 347.8,796.0 C349.7,796.0 351.7,748.3 353.6,748.3 C354.8,748.3 356.0,760.2 357.2,767.9 C358.7,777.3 360.1,801.1 361.6,801.1 C363.3,801.1 365.0,800.2 366.7,798.5 C368.1,797.1 369.6,792.2 371.0,791.0 C372.2,790.0 373.4,790.5 374.6,789.5 C376.3,788.1 378.0,748.3 379.7,748.3 C383.6,748.3 387.4,748.3 391.3,748.3 C392.8,748.3 394.2,788.0 395.7,788.0 C397.1,788.0 398.6,786.5 400.0,786.5 C403.4,786.5 406.7,790.5 410.1,791.5 C411.6,792.0 413.0,792.5 414.5,792.5 C415.6,792.5 416.7,775.9 417.8,775.9 C419.2,775.9 420.7,778.6 422.1,781.0 C423.8,783.8 425.5,792.5 427.2,792.5 C429.6,792.5 432.1,780.0 434.5,780.0 C437.4,780.0 440.3,792.5 443.2,792.5 C444.4,792.5 445.6,781.0 446.8,781.0 C449.0,781.0 451.1,791.5 453.3,791.5 C455.0,791.5 456.7,783.0 458.4,783.0 C461.8,783.0 465.1,793.8 468.5,793.8 C469.7,793.8 470.9,786.5 472.1,786.5 C473.3,786.5 474.6,792.5 475.8,792.5 C477.0,792.5 478.2,790.0 479.4,785.0 C480.4,780.9 481.3,748.3 482.3,748.3 C484.5,748.3 486.6,796.0 488.8,796.0 C492.2,796.0 495.6,793.8 499.0,793.8 C500.9,793.8 502.9,795.0 504.8,795.0 C506.2,795.0 507.7,748.3 509.1,748.3 C511.0,748.3 513.0,782.9 514.9,788.0 C517.3,794.4 519.7,797.5 522.1,797.5 C523.6,797.5 525.0,785.0 526.5,785.0 C528.8,785.0 531.1,793.0 533.4,793.0 C534.6,793.0 535.8,748.3 537.0,748.3 C538.7,748.3 540.4,748.3 542.1,748.3 C544.3,748.3 546.4,797.5 548.6,797.5 C550.8,797.5 553.0,797.2 555.2,796.5 C557.4,795.9 559.5,774.4 561.7,774.4 C563.4,774.4 565.1,775.6 566.8,777.9 C568.2,779.9 569.7,797.5 571.1,797.5 C577.1,797.5 583.2,797.2 589.2,796.5 C590.2,796.4 591.1,794.5 592.1,794.5 C595.0,794.5 597.9,797.5 600.8,797.5 C602.3,797.5 603.7,748.3 605.2,748.3 C607.8,748.3 610.5,748.3 613.1,748.3 C614.6,748.3 616.0,794.3 617.5,794.5 C619.7,794.9 621.8,795.0 624.0,795.0 C625.9,795.0 627.9,780.6 629.8,780.0 C631.7,779.3 633.7,778.9 635.6,778.9 C637.7,778.9 639.7,780.5 641.8,782.5 C644.0,784.6 646.1,791.5 648.3,791.5 C649.5,791.5 650.7,786.0 651.9,786.0 C654.8,786.0 657.7,794.2 660.6,794.5 C664.0,794.9 667.4,795.0 670.8,795.0 C672.2,795.0 673.7,748.3 675.1,748.3 C676.6,748.3 678.0,790.0 679.5,790.0 C680.9,790.0 682.4,781.0 683.8,781.0 C685.3,781.0 686.7,784.0 688.2,784.0 C689.6,784.0 691.1,748.3 692.5,748.3 C694.4,748.3 696.4,796.0 698.3,796.0 C701.9,796.0 705.6,796.0 709.2,796.0 C711.1,796.0 713.1,748.3 715.0,748.3 C717.9,748.3 720.8,748.3 723.7,748.3 C725.4,748.3 727.1,774.4 728.8,779.5 C730.7,785.1 732.7,784.6 734.6,788.0 C736.0,790.5 737.5,796.2 738.9,796.5 C741.9,797.2 745.0,797.5 748.0,797.5 C750.4,797.5 752.8,786.5 755.2,786.5 C757.6,786.5 760.1,796.5 762.5,796.5 C763.7,796.5 764.9,793.0 766.1,793.0 C767.8,793.0 769.5,797.5 771.2,797.5 C772.6,797.5 774.1,792.5 775.5,792.5 C777.7,792.5 779.9,796.5 782.1,796.5 C783.3,796.5 784.5,748.3 785.7,748.3 C787.6,748.3 789.6,793.8 791.5,793.8 C795.4,793.8 799.2,793.6 803.1,793.0 C804.8,792.8 806.4,790.0 808.1,784.0 C808.9,781.0 809.8,748.3 810.6,748.3 C825.5,748.3 840.4,748.3 855.3,748.3 C856.5,748.3 857.8,775.6 859.0,776.4 C860.4,777.4 861.9,777.9 863.3,777.9 C864.5,777.9 865.8,776.4 867.0,773.4 C867.7,771.7 868.4,757.8 869.1,757.8 C870.1,757.8 871.0,772.2 872.0,772.4 C873.9,772.8 875.9,772.9 877.8,772.9 C878.8,772.9 879.7,770.9 880.7,770.9 C882.6,770.9 884.6,773.3 886.5,777.9 C888.0,781.5 889.4,796.5 890.9,796.5 C893.3,796.5 895.7,796.4 898.1,796.0 C899.6,795.8 901.0,791.0 902.5,791.0 C904.4,791.0 906.4,796.5 908.3,796.5 C911.2,796.5 914.1,796.4 917.0,796.0 C918.2,795.9 919.4,781.0 920.6,781.0 C921.4,781.0 922.2,782.3 923.0,783.0"/>
<text x="73.60" y="701.8" font-size="12.80" fill="#cacad4" font-weight="normal" text-anchor="end"  stroke="#cacad4" stroke-width="0.22" id="t41" textLength="53.44" lengthAdjust="spacingAndGlyphs">100 Mb/s</text>
<text x="73.40" y="752.6" font-size="12.80" fill="#cacad4" font-weight="normal" text-anchor="end"  stroke="#cacad4" stroke-width="0.22" id="t42" textLength="28.75" lengthAdjust="spacingAndGlyphs">0 b/s</text>
<text x="73.20" y="803.3" font-size="12.80" fill="#cacad4" font-weight="normal" text-anchor="end"  stroke="#cacad4" stroke-width="0.22" id="t43" textLength="60.11" lengthAdjust="spacingAndGlyphs">-100 Mb/s</text>
<text x="182.30" y="833.1" font-size="12.80" fill="#cacad4" font-weight="normal" text-anchor="middle"  stroke="#cacad4" stroke-width="0.22" id="t44" textLength="32.83" lengthAdjust="spacingAndGlyphs">09:55</text>
<text x="322.70" y="833.1" font-size="12.80" fill="#cacad4" font-weight="normal" text-anchor="middle"  stroke="#cacad4" stroke-width="0.22" id="t45" textLength="32.03" lengthAdjust="spacingAndGlyphs">10:00</text>
<text x="463.70" y="833.1" font-size="12.80" fill="#cacad4" font-weight="normal" text-anchor="middle"  stroke="#cacad4" stroke-width="0.22" id="t46" textLength="33.03" lengthAdjust="spacingAndGlyphs">10:05</text>
<text x="604.70" y="833.1" font-size="12.80" fill="#cacad4" font-weight="normal" text-anchor="middle"  stroke="#cacad4" stroke-width="0.22" id="t47" textLength="32.03" lengthAdjust="spacingAndGlyphs">10:10</text>
<text x="745.70" y="833.1" font-size="12.80" fill="#cacad4" font-weight="normal" text-anchor="middle"  stroke="#cacad4" stroke-width="0.22" id="t48" textLength="33.03" lengthAdjust="spacingAndGlyphs">10:15</text>
<text x="886.70" y="833.1" font-size="12.80" fill="#cacad4" font-weight="normal" text-anchor="middle"  stroke="#cacad4" stroke-width="0.22" id="t49" textLength="32.03" lengthAdjust="spacingAndGlyphs">10:20</text>
<rect x="14.0" y="847.2" width="14.0" height="4" rx="2" fill="#73bf69"/>
<text x="35.00" y="853.3" font-size="12.80" fill="#cacad4" font-weight="normal" text-anchor="start"  stroke="#cacad4" stroke-width="0.22" id="t50" textLength="77.27" lengthAdjust="spacingAndGlyphs">recv docker0</text>
<rect x="122.0" y="847.2" width="14.0" height="4" rx="2" fill="#f2cc0c"/>
<text x="143.60" y="853.3" font-size="12.80" fill="#cacad4" font-weight="normal" text-anchor="start"  stroke="#cacad4" stroke-width="0.22" id="t51" textLength="56.24" lengthAdjust="spacingAndGlyphs">recv eth0</text>
<rect x="209.0" y="847.2" width="13.6" height="4" rx="2" fill="#8ab8ff"/>
<text x="231.30" y="853.3" font-size="12.80" fill="#cacad4" font-weight="normal" text-anchor="start"  stroke="#cacad4" stroke-width="0.22" id="t52" textLength="38.90" lengthAdjust="spacingAndGlyphs">recv lo</text>
<rect x="279.4" y="847.2" width="13.6" height="4" rx="2" fill="#ff9830"/>
<text x="302.30" y="853.3" font-size="12.80" fill="#cacad4" font-weight="normal" text-anchor="start"  stroke="#cacad4" stroke-width="0.22" id="t53" textLength="106.43" lengthAdjust="spacingAndGlyphs">recv veth6e436c5</text>
<rect x="419.2" y="847.2" width="13.4" height="4" rx="2" fill="#f2495c"/>
<text x="440.00" y="853.3" font-size="12.80" fill="#cacad4" font-weight="normal" text-anchor="start"  stroke="#cacad4" stroke-width="0.22" id="t54" textLength="107.75" lengthAdjust="spacingAndGlyphs">recv veth9b99d38</text>
<rect x="558.6" y="847.2" width="13.4" height="4" rx="2" fill="#5794f2"/>
<text x="579.60" y="853.3" font-size="12.80" fill="#cacad4" font-weight="normal" text-anchor="start"  stroke="#cacad4" stroke-width="0.22" id="t55" textLength="100.79" lengthAdjust="spacingAndGlyphs">recv vetha16f249</text>
<rect x="691.6" y="847.2" width="13.0" height="4" rx="2" fill="#b877d9"/>
<text x="713.40" y="853.3" font-size="12.80" fill="#cacad4" font-weight="normal" text-anchor="start"  stroke="#cacad4" stroke-width="0.22" id="t56" textLength="79.73" lengthAdjust="spacingAndGlyphs">trans docker0</text>
<rect x="804.0" y="847.2" width="13.4" height="4" rx="2" fill="#705da0"/>
<text x="825.50" y="853.3" font-size="12.80" fill="#cacad4" font-weight="normal" text-anchor="start"  stroke="#cacad4" stroke-width="0.22" id="t57" textLength="58.92" lengthAdjust="spacingAndGlyphs">trans eth0</text>
<rect x="14.0" y="870.4" width="14.0" height="4" rx="2" fill="#37872d"/>
<text x="36.00" y="876.1" font-size="12.80" fill="#cacad4" font-weight="normal" text-anchor="start"  stroke="#cacad4" stroke-width="0.22" id="t58" textLength="43.17" lengthAdjust="spacingAndGlyphs">trans lo</text>
<rect x="89.0" y="870.4" width="13.4" height="4" rx="2" fill="#fade2a"/>
<text x="111.50" y="876.1" font-size="12.80" fill="#cacad4" font-weight="normal" text-anchor="start"  stroke="#cacad4" stroke-width="0.22" id="t59" textLength="110.10" lengthAdjust="spacingAndGlyphs">trans veth6e436c5</text>
<rect x="235.0" y="870.4" width="13.0" height="4" rx="2" fill="#447ebc"/>
<text x="254.80" y="876.1" font-size="12.80" fill="#cacad4" font-weight="normal" text-anchor="start"  stroke="#cacad4" stroke-width="0.22" id="t60" textLength="111.42" lengthAdjust="spacingAndGlyphs">trans veth9b99d38</text>
<rect x="377.2" y="870.4" width="13.3" height="4" rx="2" fill="#c15c17"/>
<text x="398.60" y="876.1" font-size="12.80" fill="#cacad4" font-weight="normal" text-anchor="start"  stroke="#cacad4" stroke-width="0.22" id="t61" textLength="104.85" lengthAdjust="spacingAndGlyphs">trans vetha16f249</text>
</svg></body></html>
